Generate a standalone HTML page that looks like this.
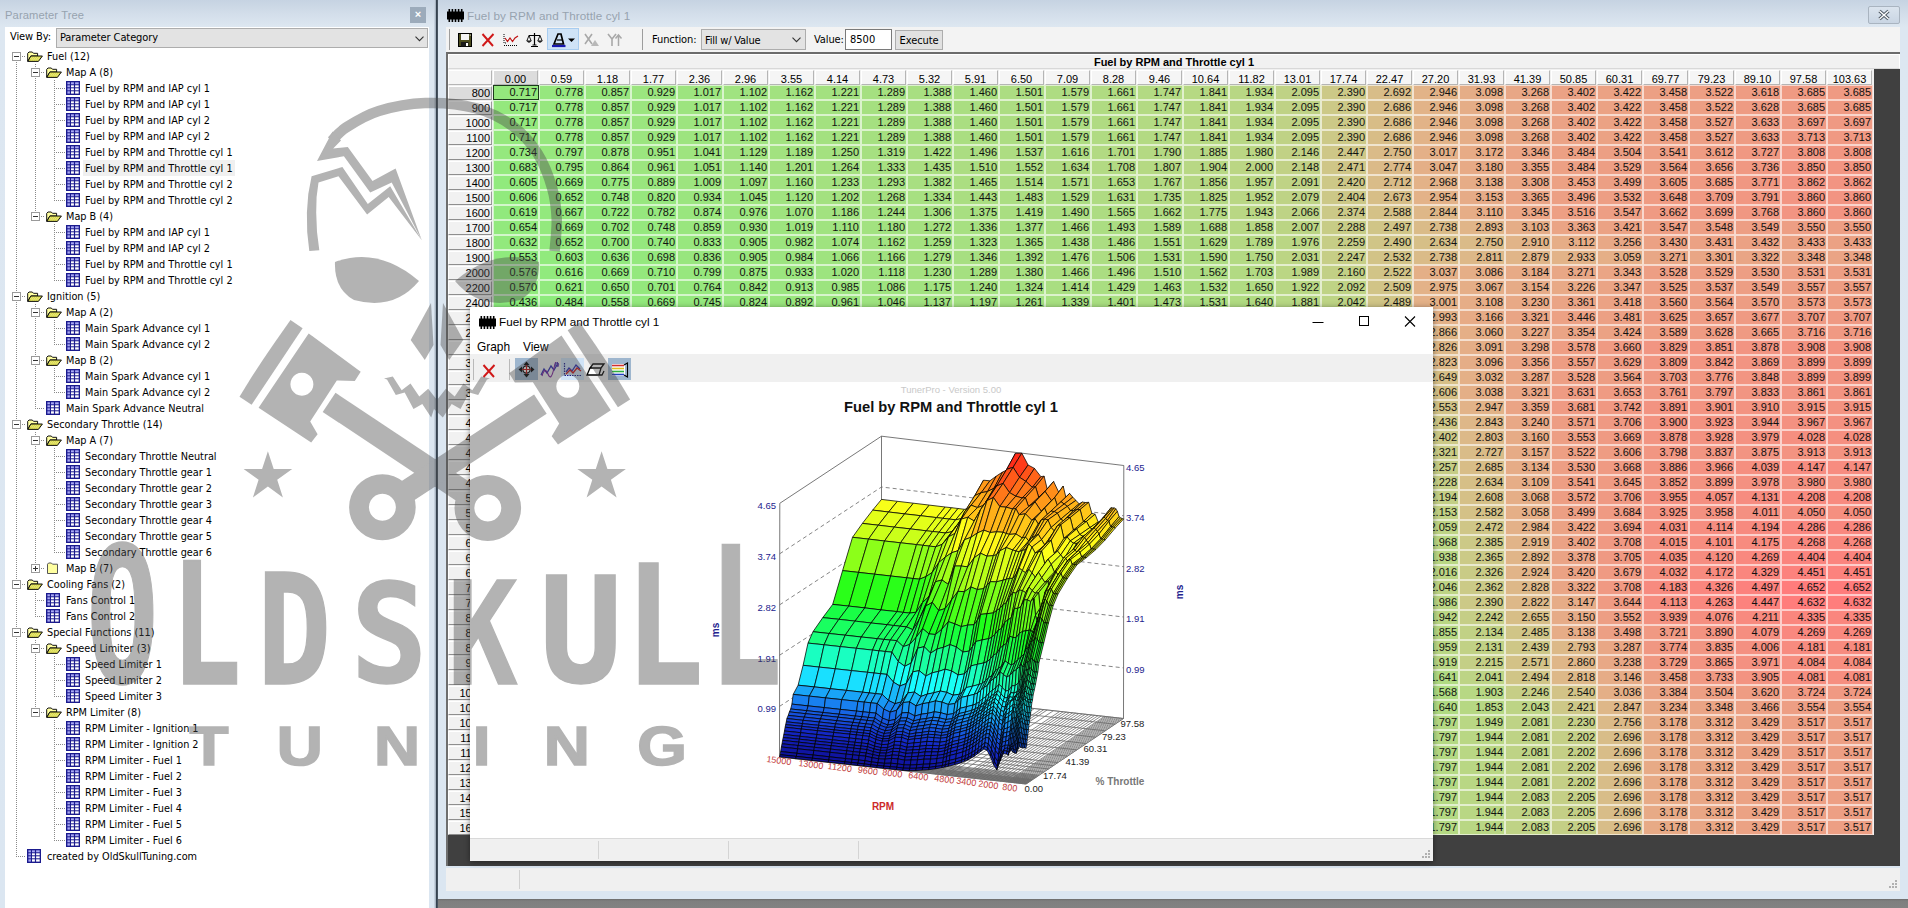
<!DOCTYPE html>
<html lang="en"><head><meta charset="utf-8"><title>TunerPro - Fuel by RPM and Throttle cyl 1</title>
<style>
*{box-sizing:border-box;margin:0;padding:0}
html,body{width:1908px;height:908px;overflow:hidden}
body{position:relative;background:#d9e4f0;font-family:"Liberation Sans",sans-serif;font-size:11px;color:#000}
i{font-style:normal;display:block;position:absolute}
b{font-weight:normal}
/* ---------- left panel ---------- */
#left{position:absolute;left:0;top:0;width:436px;height:908px;background:linear-gradient(#c6d3e2 0,#d3deea 14px,#dde7f1 27px,#dbe6f1 100%)}
#left .ttl{position:absolute;left:5px;top:9px;font:11.2px "Liberation Sans",sans-serif;color:#97a3af;letter-spacing:.1px}
#left .cls{position:absolute;left:410px;top:7px;width:16px;height:16px;background:#9cabbb;color:#fff;font:bold 11px/15px "Liberation Sans",sans-serif;text-align:center}
#lwhite{position:absolute;left:5px;top:27px;width:424px;height:881px;background:#fff}
#viewby{position:absolute;left:5px;top:0;font:11px "DejaVu Sans Condensed","Liberation Sans",sans-serif;line-height:20px;letter-spacing:-.1px}
#combo{position:absolute;left:51px;top:1px;width:372px;height:20px;background:#e3e3e3;border:1px solid #adadad;font:11px/18px "DejaVu Sans Condensed","Liberation Sans",sans-serif;padding-left:3px;letter-spacing:-.1px}
#combo svg{position:absolute;right:3px;top:7px}
#tree{position:absolute;left:-5px;top:-27px;width:434px;height:908px;font:10.8px "DejaVu Sans Condensed","Liberation Sans",sans-serif}
.tr{position:absolute;left:0;width:434px;height:16px}
.tx{position:absolute;top:0;height:16px;line-height:18px;padding:0 2px;white-space:nowrap;letter-spacing:0}
.tx.sel{background:#f0f0f0}
.ic{position:absolute;top:1px}
.vl{width:1px;background-image:linear-gradient(#8a8a8a 50%,transparent 50%);background-size:1px 2px}
.hl{top:8px;height:1px;background-image:linear-gradient(90deg,#8a8a8a 50%,transparent 50%);background-size:2px 1px}
.ex{top:4px;width:9px;height:9px;border:1px solid #9a9a9a;background:#fff}
.ex:before{content:"";position:absolute;left:1px;top:3px;width:5px;height:1px;background:#333}
.ex.plus:after{content:"";position:absolute;left:3px;top:1px;width:1px;height:5px;background:#333}
/* ---------- splitter ---------- */
#split{position:absolute;left:434px;top:0;width:4px;height:908px;background:linear-gradient(90deg,#d4dfeb 0,#a4b1bf 1.6px,#36424f 2.2px,#36424f 3.4px,#9aa6b3 4px)}
/* ---------- main window ---------- */
#main{position:absolute;left:438px;top:0;width:1470px;height:899px;background:linear-gradient(#c6d3e2 0,#d3deea 14px,#dde7f1 27px,#dbe6f1 100%)}
#main .ttl{position:absolute;left:29px;top:9px;font:11.7px "Liberation Sans",sans-serif;color:#97a3af;letter-spacing:.1px}
#mclose{position:absolute;left:1430px;top:6px;width:32px;height:18px;border:1px solid #a9b4c0;border-radius:2px;background:linear-gradient(#dbe4ee,#c9d5e3)}
#tbar{position:absolute;left:8px;top:27px;width:1454px;height:25px;background:#f3f3f3}
#tbar .lbl{position:absolute;top:1px;line-height:24px;font:11px/24px "DejaVu Sans Condensed","Liberation Sans",sans-serif;letter-spacing:-.1px}
#gridwrap{position:absolute;left:8px;top:52px;width:1454px;height:814px;background:#404040;border-top:2px solid #6b6b6b;border-left:2px solid #6e6e6e;overflow:hidden}
#grid{position:absolute;left:0;top:0;width:1426px;background:#f0f0f0}
#gtitle{height:15px;width:1452px;background:#f1f1f1;border:1px solid #fff;border-bottom:1px solid #d8d8d8;text-align:center;font:bold 11px/14px "Liberation Sans",sans-serif;padding-right:0}
.hrow{height:16px;white-space:nowrap;font-size:0;background:#f0f0f0}
.hrow span{display:inline-block;height:15px;margin:1px 1px 0 0;background:#f5f5f5;border:1px solid #fff;border-right-color:#b5b5b5;border-bottom-color:#b5b5b5;font:11px/15px "Liberation Sans",sans-serif;text-align:center;vertical-align:top;overflow:hidden}
.hrow .rh0{width:44px;margin-left:0}
.hrow .ch{width:45px;padding-top:1px}
.hrow .chs{background:#dcdcdc}
.drow{height:15px;white-space:nowrap;font-size:0}
.drow span{display:inline-block;width:44px;height:14px;margin:1px 1px 0 0;background:#f1f1f1;border:1px solid #fff;border-right-color:#9a9a9a;border-bottom-color:#8e8e8e;font:11px/13px "Liberation Sans",sans-serif;text-align:right;padding-right:1px;vertical-align:top}
.drow .rhs{background:#dcdcdc}
.drow b{display:inline-block;width:46px;height:15px;border:1px solid rgba(255,255,255,.6);font:11px/13px "Liberation Sans",sans-serif;text-align:right;padding-right:1px;vertical-align:top;color:#111}
.drow b.cur{border:1px solid #1c3c1c}
#status{position:absolute;left:8px;top:868px;width:1454px;height:23px;background:#f0f0f0}
#mdi{position:absolute;left:438px;top:899px;width:1470px;height:9px;background:linear-gradient(#6d6d6d 0,#7f7f7f 2px,#828282 100%)}
/* ---------- graph window ---------- */
#gw{position:absolute;left:470px;top:307px;width:963px;height:554px;background:#fff;box-shadow:0 1px 6px rgba(0,0,0,.45)}
#gw .cap{position:absolute;left:29px;top:8px;font:11.7px "Liberation Sans",sans-serif;color:#000}
#gw .menu{position:absolute;top:33px;font:11.9px "Liberation Sans",sans-serif}
#gtb{position:absolute;left:0;top:47px;width:963px;height:28px;background:#f0f0f0}
#gstat{position:absolute;left:0;top:531px;width:963px;height:23px;background:#f0f0f0;border-top:1px solid #d9d9d9}

</style></head>
<body>
<svg width="0" height="0" style="position:absolute">
<defs>
<g id="grid"><rect x="0" y="0" width="14" height="14" fill="#1b1b8e"/>
<g fill="#a9a9f6"><rect x="1.4" y="1.3" width="2.5" height="2"/><rect x="5" y="1.3" width="2.9" height="2"/><rect x="9.1" y="1.3" width="3.6" height="2"/><rect x="1.4" y="4.3" width="2.5" height="2"/><rect x="1.4" y="7.3" width="2.5" height="2"/><rect x="1.4" y="10.3" width="2.5" height="2.3"/></g>
<g fill="#fff"><rect x="5" y="4.3" width="2.9" height="2"/><rect x="9.1" y="4.3" width="3.6" height="2"/><rect x="5" y="7.3" width="2.9" height="2"/><rect x="9.1" y="7.3" width="3.6" height="2"/><rect x="5" y="10.3" width="2.9" height="2.3"/><rect x="9.1" y="10.3" width="3.6" height="2.3"/></g></g>
<g id="fopen"><path d="M0.7 12.3V4.3L2 3H5.3L6.5 4.3H10.6V7H3.8L0.7 12.3Z" fill="#ffffa0" stroke="#111" stroke-width="1"/><path d="M3.9 7H15.4L11.4 12.4H0.8Z" fill="#d6d648" stroke="#111" stroke-width="1"/><path d="M4.6 8.2L3.4 10M6.6 8.2L4.4 11.4M8.6 8.2L6.4 11.4M10.6 8.2L8.4 11.4M12.6 8.2L10.4 11.4" stroke="#f4f49a" stroke-width=".7"/></g>
<g id="fclosed"><path d="M1.5 12.5V3.2L2.6 2H5.4L6.5 3.2H11.5V12.5Z" fill="#ffffa0" stroke="#555" stroke-width="1"/></g>
</defs></svg>
<div id="left">
<div class="ttl">Parameter Tree</div>
<div class="cls">×</div>
<div id="lwhite">
<div id="viewby">View By:</div>
<div id="combo">Parameter Category<svg width="9" height="6" viewBox="0 0 9 6"><path d="M0.5 0.7L4.5 4.7L8.5 0.7" fill="none" stroke="#333" stroke-width="1.1"/></svg></div>
<div id="tree">
<i class="vl" style="left:16px;top:60px;height:796px"></i>
<i class="vl" style="left:35px;top:64px;height:152px"></i>
<i class="vl" style="left:54px;top:80px;height:120px"></i>
<i class="vl" style="left:54px;top:224px;height:56px"></i>
<i class="vl" style="left:35px;top:304px;height:104px"></i>
<i class="vl" style="left:54px;top:320px;height:24px"></i>
<i class="vl" style="left:54px;top:368px;height:24px"></i>
<i class="vl" style="left:35px;top:432px;height:136px"></i>
<i class="vl" style="left:54px;top:448px;height:104px"></i>
<i class="vl" style="left:35px;top:592px;height:24px"></i>
<i class="vl" style="left:35px;top:640px;height:72px"></i>
<i class="vl" style="left:54px;top:656px;height:40px"></i>
<i class="vl" style="left:54px;top:720px;height:120px"></i>
<div class="tr" style="top:48px"><i class="hl" style="left:16px;width:10px"></i><i class="ex minus" style="left:12px"></i><svg class="ic" style="left:27px" width="17" height="16" viewBox="0 0 17 16"><use href="#fopen"/></svg><span class="tx" style="left:45px">Fuel (12)</span></div>
<div class="tr" style="top:64px"><i class="hl" style="left:35px;width:10px"></i><i class="ex minus" style="left:31px"></i><svg class="ic" style="left:46px" width="17" height="16" viewBox="0 0 17 16"><use href="#fopen"/></svg><span class="tx" style="left:64px">Map A (8)</span></div>
<div class="tr" style="top:80px"><i class="hl" style="left:54px;width:11px"></i><svg class="ic" style="left:66px" width="15" height="16" viewBox="0 0 15 16"><use href="#grid"/></svg><span class="tx" style="left:83px">Fuel by RPM and IAP cyl 1</span></div>
<div class="tr" style="top:96px"><i class="hl" style="left:54px;width:11px"></i><svg class="ic" style="left:66px" width="15" height="16" viewBox="0 0 15 16"><use href="#grid"/></svg><span class="tx" style="left:83px">Fuel by RPM and IAP cyl 1</span></div>
<div class="tr" style="top:112px"><i class="hl" style="left:54px;width:11px"></i><svg class="ic" style="left:66px" width="15" height="16" viewBox="0 0 15 16"><use href="#grid"/></svg><span class="tx" style="left:83px">Fuel by RPM and IAP cyl 2</span></div>
<div class="tr" style="top:128px"><i class="hl" style="left:54px;width:11px"></i><svg class="ic" style="left:66px" width="15" height="16" viewBox="0 0 15 16"><use href="#grid"/></svg><span class="tx" style="left:83px">Fuel by RPM and IAP cyl 2</span></div>
<div class="tr" style="top:144px"><i class="hl" style="left:54px;width:11px"></i><svg class="ic" style="left:66px" width="15" height="16" viewBox="0 0 15 16"><use href="#grid"/></svg><span class="tx" style="left:83px">Fuel by RPM and Throttle cyl 1</span></div>
<div class="tr" style="top:160px"><i class="hl" style="left:54px;width:11px"></i><svg class="ic" style="left:66px" width="15" height="16" viewBox="0 0 15 16"><use href="#grid"/></svg><span class="tx sel" style="left:83px">Fuel by RPM and Throttle cyl 1</span></div>
<div class="tr" style="top:176px"><i class="hl" style="left:54px;width:11px"></i><svg class="ic" style="left:66px" width="15" height="16" viewBox="0 0 15 16"><use href="#grid"/></svg><span class="tx" style="left:83px">Fuel by RPM and Throttle cyl 2</span></div>
<div class="tr" style="top:192px"><i class="hl" style="left:54px;width:11px"></i><svg class="ic" style="left:66px" width="15" height="16" viewBox="0 0 15 16"><use href="#grid"/></svg><span class="tx" style="left:83px">Fuel by RPM and Throttle cyl 2</span></div>
<div class="tr" style="top:208px"><i class="hl" style="left:35px;width:10px"></i><i class="ex minus" style="left:31px"></i><svg class="ic" style="left:46px" width="17" height="16" viewBox="0 0 17 16"><use href="#fopen"/></svg><span class="tx" style="left:64px">Map B (4)</span></div>
<div class="tr" style="top:224px"><i class="hl" style="left:54px;width:11px"></i><svg class="ic" style="left:66px" width="15" height="16" viewBox="0 0 15 16"><use href="#grid"/></svg><span class="tx" style="left:83px">Fuel by RPM and IAP cyl 1</span></div>
<div class="tr" style="top:240px"><i class="hl" style="left:54px;width:11px"></i><svg class="ic" style="left:66px" width="15" height="16" viewBox="0 0 15 16"><use href="#grid"/></svg><span class="tx" style="left:83px">Fuel by RPM and IAP cyl 2</span></div>
<div class="tr" style="top:256px"><i class="hl" style="left:54px;width:11px"></i><svg class="ic" style="left:66px" width="15" height="16" viewBox="0 0 15 16"><use href="#grid"/></svg><span class="tx" style="left:83px">Fuel by RPM and Throttle cyl 1</span></div>
<div class="tr" style="top:272px"><i class="hl" style="left:54px;width:11px"></i><svg class="ic" style="left:66px" width="15" height="16" viewBox="0 0 15 16"><use href="#grid"/></svg><span class="tx" style="left:83px">Fuel by RPM and Throttle cyl 2</span></div>
<div class="tr" style="top:288px"><i class="hl" style="left:16px;width:10px"></i><i class="ex minus" style="left:12px"></i><svg class="ic" style="left:27px" width="17" height="16" viewBox="0 0 17 16"><use href="#fopen"/></svg><span class="tx" style="left:45px">Ignition (5)</span></div>
<div class="tr" style="top:304px"><i class="hl" style="left:35px;width:10px"></i><i class="ex minus" style="left:31px"></i><svg class="ic" style="left:46px" width="17" height="16" viewBox="0 0 17 16"><use href="#fopen"/></svg><span class="tx" style="left:64px">Map A (2)</span></div>
<div class="tr" style="top:320px"><i class="hl" style="left:54px;width:11px"></i><svg class="ic" style="left:66px" width="15" height="16" viewBox="0 0 15 16"><use href="#grid"/></svg><span class="tx" style="left:83px">Main Spark Advance cyl 1</span></div>
<div class="tr" style="top:336px"><i class="hl" style="left:54px;width:11px"></i><svg class="ic" style="left:66px" width="15" height="16" viewBox="0 0 15 16"><use href="#grid"/></svg><span class="tx" style="left:83px">Main Spark Advance cyl 2</span></div>
<div class="tr" style="top:352px"><i class="hl" style="left:35px;width:10px"></i><i class="ex minus" style="left:31px"></i><svg class="ic" style="left:46px" width="17" height="16" viewBox="0 0 17 16"><use href="#fopen"/></svg><span class="tx" style="left:64px">Map B (2)</span></div>
<div class="tr" style="top:368px"><i class="hl" style="left:54px;width:11px"></i><svg class="ic" style="left:66px" width="15" height="16" viewBox="0 0 15 16"><use href="#grid"/></svg><span class="tx" style="left:83px">Main Spark Advance cyl 1</span></div>
<div class="tr" style="top:384px"><i class="hl" style="left:54px;width:11px"></i><svg class="ic" style="left:66px" width="15" height="16" viewBox="0 0 15 16"><use href="#grid"/></svg><span class="tx" style="left:83px">Main Spark Advance cyl 2</span></div>
<div class="tr" style="top:400px"><i class="hl" style="left:35px;width:10px"></i><svg class="ic" style="left:46px" width="15" height="16" viewBox="0 0 15 16"><use href="#grid"/></svg><span class="tx" style="left:64px">Main Spark Advance Neutral</span></div>
<div class="tr" style="top:416px"><i class="hl" style="left:16px;width:10px"></i><i class="ex minus" style="left:12px"></i><svg class="ic" style="left:27px" width="17" height="16" viewBox="0 0 17 16"><use href="#fopen"/></svg><span class="tx" style="left:45px">Secondary Throttle (14)</span></div>
<div class="tr" style="top:432px"><i class="hl" style="left:35px;width:10px"></i><i class="ex minus" style="left:31px"></i><svg class="ic" style="left:46px" width="17" height="16" viewBox="0 0 17 16"><use href="#fopen"/></svg><span class="tx" style="left:64px">Map A (7)</span></div>
<div class="tr" style="top:448px"><i class="hl" style="left:54px;width:11px"></i><svg class="ic" style="left:66px" width="15" height="16" viewBox="0 0 15 16"><use href="#grid"/></svg><span class="tx" style="left:83px">Secondary Throttle Neutral</span></div>
<div class="tr" style="top:464px"><i class="hl" style="left:54px;width:11px"></i><svg class="ic" style="left:66px" width="15" height="16" viewBox="0 0 15 16"><use href="#grid"/></svg><span class="tx" style="left:83px">Secondary Throttle gear 1</span></div>
<div class="tr" style="top:480px"><i class="hl" style="left:54px;width:11px"></i><svg class="ic" style="left:66px" width="15" height="16" viewBox="0 0 15 16"><use href="#grid"/></svg><span class="tx" style="left:83px">Secondary Throttle gear 2</span></div>
<div class="tr" style="top:496px"><i class="hl" style="left:54px;width:11px"></i><svg class="ic" style="left:66px" width="15" height="16" viewBox="0 0 15 16"><use href="#grid"/></svg><span class="tx" style="left:83px">Secondary Throttle gear 3</span></div>
<div class="tr" style="top:512px"><i class="hl" style="left:54px;width:11px"></i><svg class="ic" style="left:66px" width="15" height="16" viewBox="0 0 15 16"><use href="#grid"/></svg><span class="tx" style="left:83px">Secondary Throttle gear 4</span></div>
<div class="tr" style="top:528px"><i class="hl" style="left:54px;width:11px"></i><svg class="ic" style="left:66px" width="15" height="16" viewBox="0 0 15 16"><use href="#grid"/></svg><span class="tx" style="left:83px">Secondary Throttle gear 5</span></div>
<div class="tr" style="top:544px"><i class="hl" style="left:54px;width:11px"></i><svg class="ic" style="left:66px" width="15" height="16" viewBox="0 0 15 16"><use href="#grid"/></svg><span class="tx" style="left:83px">Secondary Throttle gear 6</span></div>
<div class="tr" style="top:560px"><i class="hl" style="left:35px;width:10px"></i><i class="ex plus" style="left:31px"></i><svg class="ic" style="left:46px" width="16" height="16" viewBox="0 0 16 16"><use href="#fclosed"/></svg><span class="tx" style="left:64px">Map B (7)</span></div>
<div class="tr" style="top:576px"><i class="hl" style="left:16px;width:10px"></i><i class="ex minus" style="left:12px"></i><svg class="ic" style="left:27px" width="17" height="16" viewBox="0 0 17 16"><use href="#fopen"/></svg><span class="tx" style="left:45px">Cooling Fans (2)</span></div>
<div class="tr" style="top:592px"><i class="hl" style="left:35px;width:10px"></i><svg class="ic" style="left:46px" width="15" height="16" viewBox="0 0 15 16"><use href="#grid"/></svg><span class="tx" style="left:64px">Fans Control 1</span></div>
<div class="tr" style="top:608px"><i class="hl" style="left:35px;width:10px"></i><svg class="ic" style="left:46px" width="15" height="16" viewBox="0 0 15 16"><use href="#grid"/></svg><span class="tx" style="left:64px">Fans Control 2</span></div>
<div class="tr" style="top:624px"><i class="hl" style="left:16px;width:10px"></i><i class="ex minus" style="left:12px"></i><svg class="ic" style="left:27px" width="17" height="16" viewBox="0 0 17 16"><use href="#fopen"/></svg><span class="tx" style="left:45px">Special Functions (11)</span></div>
<div class="tr" style="top:640px"><i class="hl" style="left:35px;width:10px"></i><i class="ex minus" style="left:31px"></i><svg class="ic" style="left:46px" width="17" height="16" viewBox="0 0 17 16"><use href="#fopen"/></svg><span class="tx" style="left:64px">Speed Limiter (3)</span></div>
<div class="tr" style="top:656px"><i class="hl" style="left:54px;width:11px"></i><svg class="ic" style="left:66px" width="15" height="16" viewBox="0 0 15 16"><use href="#grid"/></svg><span class="tx" style="left:83px">Speed Limiter 1</span></div>
<div class="tr" style="top:672px"><i class="hl" style="left:54px;width:11px"></i><svg class="ic" style="left:66px" width="15" height="16" viewBox="0 0 15 16"><use href="#grid"/></svg><span class="tx" style="left:83px">Speed Limiter 2</span></div>
<div class="tr" style="top:688px"><i class="hl" style="left:54px;width:11px"></i><svg class="ic" style="left:66px" width="15" height="16" viewBox="0 0 15 16"><use href="#grid"/></svg><span class="tx" style="left:83px">Speed Limiter 3</span></div>
<div class="tr" style="top:704px"><i class="hl" style="left:35px;width:10px"></i><i class="ex minus" style="left:31px"></i><svg class="ic" style="left:46px" width="17" height="16" viewBox="0 0 17 16"><use href="#fopen"/></svg><span class="tx" style="left:64px">RPM Limiter (8)</span></div>
<div class="tr" style="top:720px"><i class="hl" style="left:54px;width:11px"></i><svg class="ic" style="left:66px" width="15" height="16" viewBox="0 0 15 16"><use href="#grid"/></svg><span class="tx" style="left:83px">RPM Limiter - Ignition 1</span></div>
<div class="tr" style="top:736px"><i class="hl" style="left:54px;width:11px"></i><svg class="ic" style="left:66px" width="15" height="16" viewBox="0 0 15 16"><use href="#grid"/></svg><span class="tx" style="left:83px">RPM Limiter - Ignition 2</span></div>
<div class="tr" style="top:752px"><i class="hl" style="left:54px;width:11px"></i><svg class="ic" style="left:66px" width="15" height="16" viewBox="0 0 15 16"><use href="#grid"/></svg><span class="tx" style="left:83px">RPM Limiter - Fuel 1</span></div>
<div class="tr" style="top:768px"><i class="hl" style="left:54px;width:11px"></i><svg class="ic" style="left:66px" width="15" height="16" viewBox="0 0 15 16"><use href="#grid"/></svg><span class="tx" style="left:83px">RPM Limiter - Fuel 2</span></div>
<div class="tr" style="top:784px"><i class="hl" style="left:54px;width:11px"></i><svg class="ic" style="left:66px" width="15" height="16" viewBox="0 0 15 16"><use href="#grid"/></svg><span class="tx" style="left:83px">RPM Limiter - Fuel 3</span></div>
<div class="tr" style="top:800px"><i class="hl" style="left:54px;width:11px"></i><svg class="ic" style="left:66px" width="15" height="16" viewBox="0 0 15 16"><use href="#grid"/></svg><span class="tx" style="left:83px">RPM Limiter - Fuel 4</span></div>
<div class="tr" style="top:816px"><i class="hl" style="left:54px;width:11px"></i><svg class="ic" style="left:66px" width="15" height="16" viewBox="0 0 15 16"><use href="#grid"/></svg><span class="tx" style="left:83px">RPM Limiter - Fuel 5</span></div>
<div class="tr" style="top:832px"><i class="hl" style="left:54px;width:11px"></i><svg class="ic" style="left:66px" width="15" height="16" viewBox="0 0 15 16"><use href="#grid"/></svg><span class="tx" style="left:83px">RPM Limiter - Fuel 6</span></div>
<div class="tr" style="top:848px"><i class="hl" style="left:16px;width:10px"></i><svg class="ic" style="left:27px" width="15" height="16" viewBox="0 0 15 16"><use href="#grid"/></svg><span class="tx" style="left:45px">created by OldSkullTuning.com</span></div>
</div>
</div>
<div id="split"></div>
<div id="main">
<svg style="position:absolute;left:9px;top:9px" width="17" height="13" viewBox="0 0 17 13"><rect x="0" y="2.5" width="17" height="8" fill="#000"/><g fill="#000"><rect x="1.5" y="0" width="1.6" height="13"/><rect x="4.6" y="0" width="1.6" height="13"/><rect x="7.7" y="0" width="1.6" height="13"/><rect x="10.8" y="0" width="1.6" height="13"/><rect x="13.9" y="0" width="1.6" height="13"/></g></svg>
<div class="ttl">Fuel by RPM and Throttle cyl 1</div>
<div id="mclose"><svg width="30" height="16" viewBox="0 0 30 16"><path d="M10.5 4L19.5 12M19.5 4L10.5 12" stroke="#4a5560" stroke-width="3.2"/><path d="M10.5 4L19.5 12M19.5 4L10.5 12" stroke="#fff" stroke-width="1.4"/></svg></div>
<div id="tbar">
<i style="left:3px;top:2px;width:1px;height:21px;background:#9d9d9d"></i>
<!-- save -->
<svg style="position:absolute;left:12px;top:6px" width="14" height="14" viewBox="0 0 14 14"><rect x="0.5" y="0.5" width="13" height="13" fill="#4c4c1e" stroke="#000"/><rect x="3" y="1" width="8" height="6" fill="#f4f4f4"/><rect x="3" y="9" width="7.5" height="4.5" fill="#1a1a1a"/><rect x="8" y="10" width="2" height="3" fill="#fff"/><rect x="11.7" y="1.6" width="1" height="1" fill="#fff"/></svg>
<!-- red X -->
<svg style="position:absolute;left:35px;top:6px" width="14" height="14" viewBox="0 0 14 14"><path d="M1.5 1L12 13M12.5 1L1.5 13" stroke="#d01818" stroke-width="1.9" fill="none"/></svg>
<!-- curve -->
<svg style="position:absolute;left:57px;top:6px" width="16" height="14" viewBox="0 0 16 14"><path d="M1 1V10H3M1 12.5H15" stroke="#000" stroke-width="1" fill="none" stroke-dasharray="1 1"/><path d="M2 5L4.5 8.5L7 5L9.5 8.5L12 5L15 3" stroke="#c01010" stroke-width="1.2" fill="none"/></svg>
<!-- scales -->
<svg style="position:absolute;left:80px;top:5px" width="17" height="16" viewBox="0 0 17 16"><path d="M8.5 1V13M3 3.5H14M5 14.5H12M6.5 13H10.5" stroke="#000" stroke-width="1.2" fill="none"/><path d="M3 3.5L0.8 9H5.2Z M14 3.5L11.8 9H16.2Z" stroke="#000" stroke-width=".9" fill="none"/><path d="M0.8 9.3Q3 12 5.2 9.3Z M11.8 9.3Q14 12 16.2 9.3Z" fill="#000"/></svg>
<!-- selected dropdown button -->
<i style="left:101px;top:1px;width:32px;height:22px;background:#cfe3f7;border:1px solid #a9cdf0"></i>
<svg style="position:absolute;left:105px;top:5px" width="26" height="16" viewBox="0 0 26 16"><path d="M3 12L7 2H10L12.5 12Z" fill="none" stroke="#000" stroke-width="1.7"/><path d="M1 14H14.5" stroke="#1818b0" stroke-width="2.2"/><path d="M6 8H11" stroke="#000" stroke-width="1.2"/><path d="M17 6.5H24L20.5 10Z" fill="#000"/></svg>
<!-- greyed icons -->
<svg style="position:absolute;left:137px;top:5px" width="18" height="16" viewBox="0 0 18 16"><path d="M2 2L9 12M9 2L2 12" stroke="#a8a8a8" stroke-width="1.6" fill="none"/><path d="M8 14H16L12 8Z" fill="#b8b8b8"/></svg>
<svg style="position:absolute;left:161px;top:5px" width="16" height="16" viewBox="0 0 16 16"><path d="M1 2L5 7V14M9 2L5 7" stroke="#a8a8a8" stroke-width="1.6" fill="none"/><path d="M11.5 14V3M8.5 6.5L11.5 3L14.5 6.5" stroke="#a8a8a8" stroke-width="1.5" fill="none"/></svg>
<i style="left:196px;top:2px;width:1px;height:21px;background:#9d9d9d"></i>
<span class="lbl" style="left:206px">Function:</span>
<div style="position:absolute;left:255px;top:2px;width:105px;height:21px;background:#e3e3e3;border:1px solid #adadad;font:11px/21px 'DejaVu Sans Condensed','Liberation Sans',sans-serif;padding-left:3px;letter-spacing:-.2px">Fill w/ Value<svg style="position:absolute;right:4px;top:7px" width="9" height="6" viewBox="0 0 9 6"><path d="M0.5 0.7L4.5 4.7L8.5 0.7" fill="none" stroke="#333" stroke-width="1.1"/></svg></div>
<span class="lbl" style="left:368px">Value:</span>
<div style="position:absolute;left:399px;top:2px;width:47px;height:21px;background:#fff;border:1px solid #7a7a7a;font:11px/19px 'DejaVu Sans Condensed','Liberation Sans',sans-serif;padding-left:4px">8500</div>
<div style="position:absolute;left:449px;top:3px;width:48px;height:20px;background:#e1e1e1;border:1px solid #adadad;font:11px/20px 'DejaVu Sans Condensed','Liberation Sans',sans-serif;text-align:center;letter-spacing:-.1px">Execute</div>
</div>
<div id="gridwrap">
<div id="grid">
<div id="gtitle">Fuel by RPM and Throttle cyl 1</div>
<div class="hrow"><span class="rh0"></span><span class="ch chs">0.00</span><span class="ch">0.59</span><span class="ch">1.18</span><span class="ch">1.77</span><span class="ch">2.36</span><span class="ch">2.96</span><span class="ch">3.55</span><span class="ch">4.14</span><span class="ch">4.73</span><span class="ch">5.32</span><span class="ch">5.91</span><span class="ch">6.50</span><span class="ch">7.09</span><span class="ch">8.28</span><span class="ch">9.46</span><span class="ch">10.64</span><span class="ch">11.82</span><span class="ch">13.01</span><span class="ch">17.74</span><span class="ch">22.47</span><span class="ch">27.20</span><span class="ch">31.93</span><span class="ch">41.39</span><span class="ch">50.85</span><span class="ch">60.31</span><span class="ch">69.77</span><span class="ch">79.23</span><span class="ch">89.10</span><span class="ch">97.58</span><span class="ch">103.63</span></div>
<div class="drow"><span class="rh rhs">800</span><b class="cur" style="background:#94e87d">0.717</b><b style="background:#96e77e">0.778</b><b style="background:#98e67e">0.857</b><b style="background:#9be57f">0.929</b><b style="background:#9de47f">1.017</b><b style="background:#a0e380">1.102</b><b style="background:#a2e280">1.162</b><b style="background:#a3e180">1.221</b><b style="background:#a5e080">1.289</b><b style="background:#a8df81">1.388</b><b style="background:#aade81">1.460</b><b style="background:#acdd82">1.501</b><b style="background:#aedc82">1.579</b><b style="background:#b0db82">1.661</b><b style="background:#b3da83">1.747</b><b style="background:#b6d983">1.841</b><b style="background:#b8d784">1.934</b><b style="background:#bfd285">2.095</b><b style="background:#ccc987">2.390</b><b style="background:#d8bd88">2.692</b><b style="background:#e2b388">2.946</b><b style="background:#e5ad87">3.098</b><b style="background:#e8a786">3.268</b><b style="background:#eba285">3.402</b><b style="background:#eba284">3.422</b><b style="background:#eca084">3.458</b><b style="background:#ed9f84">3.522</b><b style="background:#ee9c83">3.618</b><b style="background:#ef9a83">3.685</b><b style="background:#ef9a83">3.685</b></div>
<div class="drow"><span class="rh">900</span><b style="background:#94e87d">0.717</b><b style="background:#96e77e">0.778</b><b style="background:#98e67e">0.857</b><b style="background:#9be57f">0.929</b><b style="background:#9de47f">1.017</b><b style="background:#a0e380">1.102</b><b style="background:#a2e280">1.162</b><b style="background:#a3e180">1.221</b><b style="background:#a5e080">1.289</b><b style="background:#a8df81">1.388</b><b style="background:#aade81">1.460</b><b style="background:#acdd82">1.501</b><b style="background:#aedc82">1.579</b><b style="background:#b0db82">1.661</b><b style="background:#b3da83">1.747</b><b style="background:#b6d983">1.841</b><b style="background:#b8d784">1.934</b><b style="background:#bfd285">2.095</b><b style="background:#ccc987">2.390</b><b style="background:#d8bd87">2.686</b><b style="background:#e2b388">2.946</b><b style="background:#e5ad87">3.098</b><b style="background:#e8a786">3.268</b><b style="background:#eba285">3.402</b><b style="background:#eba284">3.422</b><b style="background:#eca084">3.458</b><b style="background:#ed9f84">3.522</b><b style="background:#ee9b83">3.628</b><b style="background:#ef9a83">3.685</b><b style="background:#ef9a83">3.685</b></div>
<div class="drow"><span class="rh">1000</span><b style="background:#94e87d">0.717</b><b style="background:#96e77e">0.778</b><b style="background:#98e67e">0.857</b><b style="background:#9be57f">0.929</b><b style="background:#9de47f">1.017</b><b style="background:#a0e380">1.102</b><b style="background:#a2e280">1.162</b><b style="background:#a3e180">1.221</b><b style="background:#a5e080">1.289</b><b style="background:#a8df81">1.388</b><b style="background:#aade81">1.460</b><b style="background:#acdd82">1.501</b><b style="background:#aedc82">1.579</b><b style="background:#b0db82">1.661</b><b style="background:#b3da83">1.747</b><b style="background:#b6d983">1.841</b><b style="background:#b8d784">1.934</b><b style="background:#bfd285">2.095</b><b style="background:#ccc987">2.390</b><b style="background:#d8bd87">2.686</b><b style="background:#e2b388">2.946</b><b style="background:#e5ad87">3.098</b><b style="background:#e8a786">3.268</b><b style="background:#eba285">3.402</b><b style="background:#eba284">3.422</b><b style="background:#eca084">3.458</b><b style="background:#ed9e84">3.527</b><b style="background:#ee9b83">3.633</b><b style="background:#ef9983">3.697</b><b style="background:#ef9983">3.697</b></div>
<div class="drow"><span class="rh">1100</span><b style="background:#94e87d">0.717</b><b style="background:#96e77e">0.778</b><b style="background:#98e67e">0.857</b><b style="background:#9be57f">0.929</b><b style="background:#9de47f">1.017</b><b style="background:#a0e380">1.102</b><b style="background:#a2e280">1.162</b><b style="background:#a3e180">1.221</b><b style="background:#a5e080">1.289</b><b style="background:#a8df81">1.388</b><b style="background:#aade81">1.460</b><b style="background:#acdd82">1.501</b><b style="background:#aedc82">1.579</b><b style="background:#b0db82">1.661</b><b style="background:#b3da83">1.747</b><b style="background:#b6d983">1.841</b><b style="background:#b8d784">1.934</b><b style="background:#bfd285">2.095</b><b style="background:#ccc987">2.390</b><b style="background:#d8bd87">2.686</b><b style="background:#e2b388">2.946</b><b style="background:#e5ad87">3.098</b><b style="background:#e8a786">3.268</b><b style="background:#eba285">3.402</b><b style="background:#eba284">3.422</b><b style="background:#eca084">3.458</b><b style="background:#ed9e84">3.527</b><b style="background:#ee9b83">3.633</b><b style="background:#f09983">3.713</b><b style="background:#f09983">3.713</b></div>
<div class="drow"><span class="rh">1200</span><b style="background:#95e87e">0.734</b><b style="background:#97e77e">0.797</b><b style="background:#99e67e">0.878</b><b style="background:#9be57f">0.951</b><b style="background:#9ee47f">1.041</b><b style="background:#a1e280">1.129</b><b style="background:#a2e280">1.189</b><b style="background:#a4e180">1.250</b><b style="background:#a6e081">1.319</b><b style="background:#a9de81">1.422</b><b style="background:#abdd82">1.496</b><b style="background:#addd82">1.537</b><b style="background:#afdc82">1.616</b><b style="background:#b2da83">1.701</b><b style="background:#b4d983">1.790</b><b style="background:#b7d884">1.885</b><b style="background:#bad684">1.980</b><b style="background:#c1d185">2.146</b><b style="background:#cec787">2.447</b><b style="background:#dabb88">2.750</b><b style="background:#e4b088">3.017</b><b style="background:#e7ab86">3.172</b><b style="background:#eaa485">3.346</b><b style="background:#eca084">3.484</b><b style="background:#ec9f84">3.504</b><b style="background:#ed9e84">3.541</b><b style="background:#ee9c83">3.612</b><b style="background:#f09882">3.727</b><b style="background:#f19682">3.808</b><b style="background:#f19682">3.808</b></div>
<div class="drow"><span class="rh">1300</span><b style="background:#93e97d">0.683</b><b style="background:#97e77e">0.795</b><b style="background:#99e67e">0.864</b><b style="background:#9ce57f">0.961</b><b style="background:#9ee37f">1.051</b><b style="background:#a1e280">1.140</b><b style="background:#a3e180">1.201</b><b style="background:#a5e180">1.264</b><b style="background:#a7e081">1.333</b><b style="background:#aade81">1.435</b><b style="background:#acdd82">1.510</b><b style="background:#addd82">1.552</b><b style="background:#b0db82">1.634</b><b style="background:#b2da83">1.708</b><b style="background:#b5d983">1.807</b><b style="background:#b8d884">1.904</b><b style="background:#bbd684">2.000</b><b style="background:#c1d185">2.148</b><b style="background:#cfc687">2.471</b><b style="background:#dbba88">2.774</b><b style="background:#e4af87">3.047</b><b style="background:#e7aa86">3.180</b><b style="background:#eaa485">3.355</b><b style="background:#eca084">3.484</b><b style="background:#ed9e84">3.529</b><b style="background:#ed9d83">3.564</b><b style="background:#ef9b83">3.656</b><b style="background:#f09882">3.736</b><b style="background:#f29582">3.850</b><b style="background:#f29582">3.850</b></div>
<div class="drow"><span class="rh">1400</span><b style="background:#91ea7d">0.605</b><b style="background:#93e97d">0.669</b><b style="background:#96e77e">0.775</b><b style="background:#99e67e">0.889</b><b style="background:#9de47f">1.009</b><b style="background:#a0e37f">1.097</b><b style="background:#a1e280">1.160</b><b style="background:#a4e180">1.233</b><b style="background:#a5e081">1.293</b><b style="background:#a8df81">1.382</b><b style="background:#abde81">1.465</b><b style="background:#acdd82">1.514</b><b style="background:#aedc82">1.571</b><b style="background:#b0db82">1.653</b><b style="background:#b3da83">1.767</b><b style="background:#b6d883">1.856</b><b style="background:#b9d784">1.957</b><b style="background:#bfd385">2.091</b><b style="background:#cdc887">2.420</b><b style="background:#d9bc88">2.712</b><b style="background:#e3b288">2.968</b><b style="background:#e6ac87">3.138</b><b style="background:#e9a685">3.308</b><b style="background:#eca184">3.453</b><b style="background:#ec9f84">3.499</b><b style="background:#ee9c83">3.605</b><b style="background:#ef9a83">3.685</b><b style="background:#f09782">3.771</b><b style="background:#f29482">3.862</b><b style="background:#f29482">3.862</b></div>
<div class="drow"><span class="rh">1500</span><b style="background:#91ea7d">0.606</b><b style="background:#92e97d">0.652</b><b style="background:#95e87e">0.748</b><b style="background:#97e77e">0.820</b><b style="background:#9be57f">0.934</b><b style="background:#9ee47f">1.045</b><b style="background:#a0e380">1.120</b><b style="background:#a3e180">1.202</b><b style="background:#a5e080">1.268</b><b style="background:#a7e081">1.334</b><b style="background:#aade81">1.443</b><b style="background:#abde82">1.483</b><b style="background:#acdd82">1.529</b><b style="background:#afdb82">1.631</b><b style="background:#b3da83">1.735</b><b style="background:#b5d983">1.825</b><b style="background:#b9d784">1.952</b><b style="background:#bed385">2.079</b><b style="background:#ccc887">2.404</b><b style="background:#d7be87">2.673</b><b style="background:#e3b288">2.954</b><b style="background:#e6ab87">3.153</b><b style="background:#eaa485">3.365</b><b style="background:#ec9f84">3.496</b><b style="background:#ed9e84">3.532</b><b style="background:#ef9b83">3.648</b><b style="background:#f09983">3.709</b><b style="background:#f19782">3.791</b><b style="background:#f29482">3.860</b><b style="background:#f29482">3.860</b></div>
<div class="drow"><span class="rh">1600</span><b style="background:#91e97d">0.619</b><b style="background:#93e97d">0.667</b><b style="background:#94e87e">0.722</b><b style="background:#96e77e">0.782</b><b style="background:#99e67e">0.874</b><b style="background:#9ce57f">0.976</b><b style="background:#9fe37f">1.070</b><b style="background:#a2e280">1.186</b><b style="background:#a4e180">1.244</b><b style="background:#a6e081">1.306</b><b style="background:#a8df81">1.375</b><b style="background:#a9de81">1.419</b><b style="background:#abdd82">1.490</b><b style="background:#addc82">1.565</b><b style="background:#b0db82">1.662</b><b style="background:#b4d983">1.775</b><b style="background:#b9d784">1.943</b><b style="background:#bed385">2.066</b><b style="background:#cbc987">2.374</b><b style="background:#d4c187">2.588</b><b style="background:#deb788">2.844</b><b style="background:#e6ad87">3.110</b><b style="background:#eaa585">3.345</b><b style="background:#ed9f84">3.516</b><b style="background:#ed9e84">3.547</b><b style="background:#ef9a83">3.662</b><b style="background:#ef9983">3.699</b><b style="background:#f09782">3.768</b><b style="background:#f29482">3.860</b><b style="background:#f29482">3.860</b></div>
<div class="drow"><span class="rh">1700</span><b style="background:#92e97d">0.654</b><b style="background:#93e97d">0.669</b><b style="background:#94e87d">0.702</b><b style="background:#95e87e">0.748</b><b style="background:#99e67e">0.859</b><b style="background:#9be57f">0.930</b><b style="background:#9de47f">1.019</b><b style="background:#a0e380">1.110</b><b style="background:#a2e280">1.180</b><b style="background:#a5e080">1.272</b><b style="background:#a7e081">1.336</b><b style="background:#a8df81">1.377</b><b style="background:#abde81">1.466</b><b style="background:#abdd82">1.493</b><b style="background:#aedc82">1.589</b><b style="background:#b1db83">1.688</b><b style="background:#b6d883">1.858</b><b style="background:#bbd584">2.007</b><b style="background:#c7cc86">2.288</b><b style="background:#d0c587">2.497</b><b style="background:#dabb88">2.738</b><b style="background:#e0b588">2.893</b><b style="background:#e5ad87">3.103</b><b style="background:#eaa485">3.363</b><b style="background:#eba284">3.421</b><b style="background:#ed9e84">3.547</b><b style="background:#ed9e84">3.548</b><b style="background:#ed9e84">3.549</b><b style="background:#ed9e84">3.550</b><b style="background:#ed9e84">3.550</b></div>
<div class="drow"><span class="rh">1800</span><b style="background:#92e97d">0.632</b><b style="background:#92e97d">0.652</b><b style="background:#94e87d">0.700</b><b style="background:#95e87e">0.740</b><b style="background:#98e77e">0.833</b><b style="background:#9ae67e">0.905</b><b style="background:#9ce47f">0.982</b><b style="background:#9fe37f">1.074</b><b style="background:#a2e280">1.162</b><b style="background:#a4e180">1.259</b><b style="background:#a6e081">1.323</b><b style="background:#a8df81">1.365</b><b style="background:#aade81">1.438</b><b style="background:#abdd82">1.486</b><b style="background:#addd82">1.551</b><b style="background:#afdb82">1.629</b><b style="background:#b4d983">1.789</b><b style="background:#bad684">1.976</b><b style="background:#c6cd86">2.259</b><b style="background:#d0c587">2.490</b><b style="background:#d6bf87">2.634</b><b style="background:#dabb88">2.750</b><b style="background:#e1b488">2.910</b><b style="background:#e6ad87">3.112</b><b style="background:#e8a886">3.256</b><b style="background:#eba184">3.430</b><b style="background:#eba184">3.431</b><b style="background:#eba184">3.432</b><b style="background:#eba184">3.433</b><b style="background:#eba184">3.433</b></div>
<div class="drow"><span class="rh">1900</span><b style="background:#8fea7d">0.553</b><b style="background:#91ea7d">0.603</b><b style="background:#92e97d">0.636</b><b style="background:#94e87d">0.698</b><b style="background:#98e67e">0.836</b><b style="background:#9ae67e">0.905</b><b style="background:#9ce47f">0.984</b><b style="background:#9fe37f">1.066</b><b style="background:#a2e280">1.166</b><b style="background:#a5e080">1.279</b><b style="background:#a7df81">1.346</b><b style="background:#a8df81">1.392</b><b style="background:#abde81">1.476</b><b style="background:#acdd82">1.506</b><b style="background:#acdd82">1.531</b><b style="background:#aedc82">1.590</b><b style="background:#b3da83">1.750</b><b style="background:#bcd584">2.031</b><b style="background:#c6ce86">2.247</b><b style="background:#d2c387">2.532</b><b style="background:#dabb88">2.738</b><b style="background:#ddb888">2.811</b><b style="background:#e0b588">2.879</b><b style="background:#e2b388">2.933</b><b style="background:#e5af87">3.059</b><b style="background:#e8a786">3.271</b><b style="background:#e9a685">3.301</b><b style="background:#e9a585">3.322</b><b style="background:#eaa485">3.348</b><b style="background:#eaa485">3.348</b></div>
<div class="drow"><span class="rh">2000</span><b style="background:#90ea7d">0.576</b><b style="background:#91ea7d">0.616</b><b style="background:#93e97d">0.669</b><b style="background:#94e87d">0.710</b><b style="background:#97e77e">0.799</b><b style="background:#99e67e">0.875</b><b style="background:#9be57f">0.933</b><b style="background:#9de47f">1.020</b><b style="background:#a0e380">1.118</b><b style="background:#a4e180">1.230</b><b style="background:#a5e080">1.289</b><b style="background:#a8df81">1.380</b><b style="background:#abde81">1.466</b><b style="background:#abdd82">1.496</b><b style="background:#acdd82">1.510</b><b style="background:#addc82">1.562</b><b style="background:#b2da83">1.703</b><b style="background:#bbd684">1.989</b><b style="background:#c2d085">2.160</b><b style="background:#d1c487">2.522</b><b style="background:#e4af87">3.037</b><b style="background:#e5ae87">3.086</b><b style="background:#e7aa86">3.184</b><b style="background:#e8a786">3.271</b><b style="background:#eaa585">3.343</b><b style="background:#ed9e84">3.528</b><b style="background:#ed9e84">3.529</b><b style="background:#ed9e84">3.530</b><b style="background:#ed9e84">3.531</b><b style="background:#ed9e84">3.531</b></div>
<div class="drow"><span class="rh">2200</span><b style="background:#90ea7d">0.570</b><b style="background:#91e97d">0.621</b><b style="background:#92e97d">0.650</b><b style="background:#94e87d">0.701</b><b style="background:#96e77e">0.764</b><b style="background:#98e67e">0.842</b><b style="background:#9ae57f">0.913</b><b style="background:#9ce47f">0.985</b><b style="background:#9fe37f">1.086</b><b style="background:#a2e280">1.175</b><b style="background:#a4e180">1.240</b><b style="background:#a6e081">1.324</b><b style="background:#a9de81">1.414</b><b style="background:#a9de81">1.429</b><b style="background:#aade81">1.463</b><b style="background:#acdd82">1.532</b><b style="background:#b0db82">1.650</b><b style="background:#b8d784">1.922</b><b style="background:#bfd385">2.092</b><b style="background:#d1c487">2.509</b><b style="background:#e3b288">2.975</b><b style="background:#e5ae87">3.067</b><b style="background:#e6ab87">3.154</b><b style="background:#e8a986">3.226</b><b style="background:#eaa485">3.347</b><b style="background:#ed9e84">3.525</b><b style="background:#ed9e84">3.537</b><b style="background:#ed9e84">3.549</b><b style="background:#ed9d83">3.557</b><b style="background:#ed9d83">3.557</b></div>
<div class="drow"><span class="rh">2400</span><b style="background:#8cec7c">0.436</b><b style="background:#8deb7c">0.484</b><b style="background:#90ea7d">0.558</b><b style="background:#93e97d">0.669</b><b style="background:#95e87e">0.745</b><b style="background:#98e77e">0.824</b><b style="background:#9ae67e">0.892</b><b style="background:#9ce57f">0.961</b><b style="background:#9ee47f">1.046</b><b style="background:#a1e280">1.137</b><b style="background:#a3e180">1.197</b><b style="background:#a4e180">1.261</b><b style="background:#a7e081">1.339</b><b style="background:#a9df81">1.401</b><b style="background:#abde81">1.473</b><b style="background:#acdd82">1.531</b><b style="background:#b0db82">1.640</b><b style="background:#b7d884">1.881</b><b style="background:#bdd485">2.042</b><b style="background:#d0c587">2.489</b><b style="background:#e4b188">3.001</b><b style="background:#e6ad87">3.108</b><b style="background:#e8a986">3.230</b><b style="background:#eaa485">3.361</b><b style="background:#eba284">3.418</b><b style="background:#ed9d83">3.560</b><b style="background:#ed9d83">3.564</b><b style="background:#ed9d83">3.570</b><b style="background:#ee9d83">3.573</b><b style="background:#ee9d83">3.573</b></div>
<div class="drow"><span class="rh">2600</span><b style="background:#8cec7c">0.270</b><b style="background:#8cec7c">0.321</b><b style="background:#8cec7c">0.400</b><b style="background:#8eeb7c">0.517</b><b style="background:#91ea7d">0.598</b><b style="background:#93e97d">0.682</b><b style="background:#95e87e">0.754</b><b style="background:#98e77e">0.827</b><b style="background:#9ae57f">0.918</b><b style="background:#9de47f">1.014</b><b style="background:#9fe37f">1.078</b><b style="background:#a1e280">1.146</b><b style="background:#a4e180">1.229</b><b style="background:#a5e081">1.294</b><b style="background:#a8df81">1.371</b><b style="background:#aade81">1.432</b><b style="background:#addd82">1.548</b><b style="background:#b5d983">1.804</b><b style="background:#bad684">1.975</b><b style="background:#cec787">2.449</b><b style="background:#e3b188">2.993</b><b style="background:#e7ab86">3.166</b><b style="background:#e9a585">3.321</b><b style="background:#eca184">3.446</b><b style="background:#eca084">3.481</b><b style="background:#ee9b83">3.625</b><b style="background:#ef9b83">3.657</b><b style="background:#ef9a83">3.677</b><b style="background:#ef9983">3.707</b><b style="background:#ef9983">3.707</b></div>
<div class="drow"><span class="rh">2800</span><b style="background:#8cec7c">0.360</b><b style="background:#8cec7c">0.407</b><b style="background:#8deb7c">0.479</b><b style="background:#91ea7d">0.588</b><b style="background:#93e97d">0.662</b><b style="background:#95e87e">0.739</b><b style="background:#97e77e">0.806</b><b style="background:#99e67e">0.873</b><b style="background:#9be57f">0.956</b><b style="background:#9ee47f">1.045</b><b style="background:#a0e380">1.103</b><b style="background:#a2e280">1.166</b><b style="background:#a4e180">1.242</b><b style="background:#a6e081">1.303</b><b style="background:#a8df81">1.373</b><b style="background:#a9de81">1.430</b><b style="background:#addd82">1.536</b><b style="background:#b4da83">1.772</b><b style="background:#b8d784">1.929</b><b style="background:#cbca87">2.366</b><b style="background:#dfb688">2.866</b><b style="background:#e5af87">3.060</b><b style="background:#e8a986">3.227</b><b style="background:#eaa485">3.354</b><b style="background:#eba284">3.424</b><b style="background:#ee9d83">3.589</b><b style="background:#ee9b83">3.628</b><b style="background:#ef9a83">3.665</b><b style="background:#f09983">3.716</b><b style="background:#f09983">3.716</b></div>
<div class="drow"><span class="rh">3000</span><b style="background:#8eeb7c">0.500</b><b style="background:#8feb7d">0.544</b><b style="background:#91ea7d">0.611</b><b style="background:#94e87d">0.711</b><b style="background:#96e77e">0.780</b><b style="background:#98e67e">0.852</b><b style="background:#9ae57f">0.914</b><b style="background:#9ce57f">0.976</b><b style="background:#9ee37f">1.053</b><b style="background:#a1e280">1.136</b><b style="background:#a2e280">1.190</b><b style="background:#a4e180">1.248</b><b style="background:#a6e081">1.319</b><b style="background:#a8df81">1.375</b><b style="background:#aade81">1.440</b><b style="background:#abdd82">1.493</b><b style="background:#aedc82">1.592</b><b style="background:#b5d983">1.810</b><b style="background:#b9d784">1.956</b><b style="background:#cbca87">2.362</b><b style="background:#ddb888">2.826</b><b style="background:#e5ae87">3.091</b><b style="background:#e9a685">3.298</b><b style="background:#ee9d83">3.578</b><b style="background:#ef9a83">3.660</b><b style="background:#f19582">3.829</b><b style="background:#f29582">3.851</b><b style="background:#f29482">3.878</b><b style="background:#f39381">3.908</b><b style="background:#f39381">3.908</b></div>
<div class="drow"><span class="rh">3200</span><b style="background:#91ea7d">0.600</b><b style="background:#92e97d">0.642</b><b style="background:#94e87d">0.706</b><b style="background:#97e77e">0.802</b><b style="background:#99e67e">0.868</b><b style="background:#9be57f">0.936</b><b style="background:#9de47f">0.995</b><b style="background:#9ee37f">1.055</b><b style="background:#a1e280">1.129</b><b style="background:#a3e180">1.208</b><b style="background:#a4e180">1.260</b><b style="background:#a6e081">1.315</b><b style="background:#a8df81">1.383</b><b style="background:#aade81">1.436</b><b style="background:#acdd82">1.499</b><b style="background:#addd82">1.549</b><b style="background:#b0db82">1.643</b><b style="background:#b6d883">1.852</b><b style="background:#bbd684">1.992</b><b style="background:#cbc987">2.379</b><b style="background:#ddb888">2.823</b><b style="background:#e5ad87">3.096</b><b style="background:#eaa485">3.356</b><b style="background:#ed9d83">3.557</b><b style="background:#ee9b83">3.629</b><b style="background:#f19682">3.809</b><b style="background:#f29582">3.842</b><b style="background:#f29482">3.869</b><b style="background:#f29381">3.899</b><b style="background:#f29381">3.899</b></div>
<div class="drow"><span class="rh">3400</span><b style="background:#91e97d">0.620</b><b style="background:#93e97d">0.658</b><b style="background:#94e87d">0.717</b><b style="background:#97e77e">0.804</b><b style="background:#99e67e">0.864</b><b style="background:#9be57f">0.927</b><b style="background:#9ce47f">0.981</b><b style="background:#9ee47f">1.035</b><b style="background:#a0e380">1.103</b><b style="background:#a2e280">1.175</b><b style="background:#a3e180">1.222</b><b style="background:#a5e080">1.273</b><b style="background:#a7e081">1.334</b><b style="background:#a8df81">1.383</b><b style="background:#aade81">1.440</b><b style="background:#abdd82">1.486</b><b style="background:#aedc82">1.572</b><b style="background:#b3da83">1.763</b><b style="background:#b7d884">1.890</b><b style="background:#c6ce86">2.244</b><b style="background:#d6bf87">2.649</b><b style="background:#e4b087">3.032</b><b style="background:#e9a785">3.287</b><b style="background:#ed9e84">3.528</b><b style="background:#ed9d83">3.564</b><b style="background:#ef9983">3.703</b><b style="background:#f19782">3.776</b><b style="background:#f29582">3.848</b><b style="background:#f29381">3.899</b><b style="background:#f29381">3.899</b></div>
<div class="drow"><span class="rh">3600</span><b style="background:#90ea7d">0.570</b><b style="background:#91ea7d">0.608</b><b style="background:#93e97d">0.667</b><b style="background:#95e87e">0.755</b><b style="background:#97e77e">0.815</b><b style="background:#99e67e">0.878</b><b style="background:#9be57f">0.932</b><b style="background:#9ce47f">0.987</b><b style="background:#9ee37f">1.054</b><b style="background:#a0e280">1.126</b><b style="background:#a2e280">1.174</b><b style="background:#a3e180">1.225</b><b style="background:#a5e080">1.287</b><b style="background:#a7e081">1.336</b><b style="background:#a8df81">1.393</b><b style="background:#aade81">1.439</b><b style="background:#acdd82">1.526</b><b style="background:#b2da83">1.717</b><b style="background:#b6d983">1.845</b><b style="background:#c4cf86">2.200</b><b style="background:#d5c087">2.606</b><b style="background:#e4af87">3.038</b><b style="background:#e9a585">3.321</b><b style="background:#ee9b83">3.631</b><b style="background:#ef9b83">3.653</b><b style="background:#f09782">3.761</b><b style="background:#f19682">3.797</b><b style="background:#f19582">3.833</b><b style="background:#f29482">3.861</b><b style="background:#f29482">3.861</b></div>
<div class="drow"><span class="rh">3800</span><b style="background:#8eeb7c">0.520</b><b style="background:#90ea7d">0.558</b><b style="background:#91e97d">0.617</b><b style="background:#94e87d">0.705</b><b style="background:#96e77e">0.765</b><b style="background:#98e77e">0.828</b><b style="background:#99e67e">0.881</b><b style="background:#9be57f">0.936</b><b style="background:#9de47f">1.003</b><b style="background:#9fe37f">1.076</b><b style="background:#a0e280">1.123</b><b style="background:#a2e280">1.174</b><b style="background:#a4e180">1.236</b><b style="background:#a5e080">1.285</b><b style="background:#a7df81">1.342</b><b style="background:#a8df81">1.388</b><b style="background:#abde81">1.474</b><b style="background:#b0db82">1.665</b><b style="background:#b4d983">1.793</b><b style="background:#c1d185">2.147</b><b style="background:#d2c387">2.553</b><b style="background:#e2b388">2.947</b><b style="background:#eaa485">3.359</b><b style="background:#ef9a83">3.681</b><b style="background:#f09882">3.742</b><b style="background:#f29381">3.891</b><b style="background:#f39381">3.901</b><b style="background:#f39381">3.910</b><b style="background:#f39381">3.915</b><b style="background:#f39381">3.915</b></div>
<div class="drow"><span class="rh">4000</span><b style="background:#8dec7c">0.470</b><b style="background:#8eeb7c">0.507</b><b style="background:#90ea7d">0.564</b><b style="background:#92e97d">0.649</b><b style="background:#94e87d">0.707</b><b style="background:#96e77e">0.767</b><b style="background:#97e77e">0.820</b><b style="background:#99e67e">0.872</b><b style="background:#9be57f">0.938</b><b style="background:#9de47f">1.007</b><b style="background:#9ee37f">1.053</b><b style="background:#a0e380">1.102</b><b style="background:#a2e280">1.162</b><b style="background:#a3e180">1.210</b><b style="background:#a5e180">1.265</b><b style="background:#a6e081">1.309</b><b style="background:#a8df81">1.393</b><b style="background:#aedc82">1.578</b><b style="background:#b2da83">1.701</b><b style="background:#bdd485">2.044</b><b style="background:#cec787">2.436</b><b style="background:#deb788">2.843</b><b style="background:#e8a886">3.240</b><b style="background:#ed9d83">3.571</b><b style="background:#ef9983">3.706</b><b style="background:#f39381">3.900</b><b style="background:#f39281">3.923</b><b style="background:#f39281">3.944</b><b style="background:#f49181">3.967</b><b style="background:#f49181">3.967</b></div>
<div class="drow"><span class="rh">4200</span><b style="background:#8cec7c">0.430</b><b style="background:#8dec7c">0.467</b><b style="background:#8feb7c">0.524</b><b style="background:#91ea7d">0.609</b><b style="background:#93e97d">0.668</b><b style="background:#95e87e">0.728</b><b style="background:#96e77e">0.781</b><b style="background:#98e67e">0.834</b><b style="background:#9ae67e">0.899</b><b style="background:#9ce57f">0.969</b><b style="background:#9de47f">1.015</b><b style="background:#9fe37f">1.064</b><b style="background:#a0e280">1.124</b><b style="background:#a2e280">1.172</b><b style="background:#a3e180">1.227</b><b style="background:#a5e080">1.272</b><b style="background:#a7df81">1.356</b><b style="background:#addd82">1.541</b><b style="background:#b0db82">1.665</b><b style="background:#bbd584">2.008</b><b style="background:#ccc987">2.402</b><b style="background:#dcb988">2.803</b><b style="background:#e6ab86">3.160</b><b style="background:#ed9e84">3.553</b><b style="background:#ef9a83">3.669</b><b style="background:#f29482">3.878</b><b style="background:#f39281">3.928</b><b style="background:#f49181">3.979</b><b style="background:#f58f80">4.028</b><b style="background:#f58f80">4.028</b></div>
<div class="drow"><span class="rh">4400</span><b style="background:#8cec7c">0.390</b><b style="background:#8cec7c">0.426</b><b style="background:#8deb7c">0.482</b><b style="background:#90ea7d">0.565</b><b style="background:#92e97d">0.623</b><b style="background:#93e97d">0.682</b><b style="background:#95e87e">0.733</b><b style="background:#96e77e">0.785</b><b style="background:#98e67e">0.849</b><b style="background:#9ae57f">0.918</b><b style="background:#9ce57f">0.963</b><b style="background:#9de47f">1.011</b><b style="background:#9fe37f">1.070</b><b style="background:#a0e380">1.116</b><b style="background:#a2e280">1.171</b><b style="background:#a3e180">1.214</b><b style="background:#a5e081">1.296</b><b style="background:#abde81">1.478</b><b style="background:#aedc82">1.599</b><b style="background:#b8d784">1.936</b><b style="background:#c9cb86">2.321</b><b style="background:#d9bc88">2.727</b><b style="background:#e6ab86">3.157</b><b style="background:#ed9f84">3.522</b><b style="background:#ee9c83">3.606</b><b style="background:#f19682">3.798</b><b style="background:#f19582">3.837</b><b style="background:#f29482">3.875</b><b style="background:#f39381">3.913</b><b style="background:#f39381">3.913</b></div>
<div class="drow"><span class="rh">4600</span><b style="background:#8cec7c">0.360</b><b style="background:#8cec7c">0.395</b><b style="background:#8cec7c">0.450</b><b style="background:#8feb7d">0.532</b><b style="background:#91ea7d">0.589</b><b style="background:#92e97d">0.647</b><b style="background:#94e87d">0.697</b><b style="background:#95e87e">0.748</b><b style="background:#97e77e">0.811</b><b style="background:#99e67e">0.878</b><b style="background:#9ae57f">0.923</b><b style="background:#9ce57f">0.970</b><b style="background:#9ee47f">1.028</b><b style="background:#9fe37f">1.074</b><b style="background:#a0e280">1.127</b><b style="background:#a2e280">1.170</b><b style="background:#a4e180">1.250</b><b style="background:#a9de81">1.429</b><b style="background:#addd82">1.548</b><b style="background:#b7d884">1.878</b><b style="background:#c6cd86">2.257</b><b style="background:#d8bd87">2.685</b><b style="background:#e6ac87">3.134</b><b style="background:#ed9e84">3.530</b><b style="background:#ef9a83">3.668</b><b style="background:#f29481">3.886</b><b style="background:#f49181">3.966</b><b style="background:#f58f80">4.039</b><b style="background:#f78c80">4.147</b><b style="background:#f78c80">4.147</b></div>
<div class="drow"><span class="rh">4800</span><b style="background:#8cec7c">0.330</b><b style="background:#8cec7c">0.366</b><b style="background:#8cec7c">0.420</b><b style="background:#8eeb7c">0.502</b><b style="background:#90ea7d">0.559</b><b style="background:#91e97d">0.617</b><b style="background:#93e97d">0.667</b><b style="background:#94e87d">0.718</b><b style="background:#96e77e">0.781</b><b style="background:#98e67e">0.849</b><b style="background:#9ae67e">0.893</b><b style="background:#9be57f">0.940</b><b style="background:#9de47f">0.998</b><b style="background:#9ee47f">1.044</b><b style="background:#a0e37f">1.097</b><b style="background:#a1e280">1.140</b><b style="background:#a3e180">1.221</b><b style="background:#a9df81">1.399</b><b style="background:#acdd82">1.518</b><b style="background:#b6d883">1.849</b><b style="background:#c5ce86">2.228</b><b style="background:#d6bf87">2.634</b><b style="background:#e6ad87">3.109</b><b style="background:#ed9e84">3.541</b><b style="background:#ef9b83">3.645</b><b style="background:#f29582">3.852</b><b style="background:#f29381">3.899</b><b style="background:#f49181">3.978</b><b style="background:#f49181">3.980</b><b style="background:#f49181">3.980</b></div>
<div class="drow"><span class="rh">5200</span><b style="background:#8cec7c">0.280</b><b style="background:#8cec7c">0.316</b><b style="background:#8cec7c">0.371</b><b style="background:#8dec7c">0.454</b><b style="background:#8eeb7c">0.511</b><b style="background:#90ea7d">0.570</b><b style="background:#91e97d">0.620</b><b style="background:#93e97d">0.672</b><b style="background:#95e87e">0.735</b><b style="background:#97e77e">0.803</b><b style="background:#98e67e">0.848</b><b style="background:#9ae67e">0.896</b><b style="background:#9be57f">0.954</b><b style="background:#9de47f">1.000</b><b style="background:#9ee37f">1.054</b><b style="background:#a0e37f">1.097</b><b style="background:#a2e280">1.178</b><b style="background:#a7df81">1.358</b><b style="background:#abde81">1.478</b><b style="background:#b5d983">1.812</b><b style="background:#c3cf86">2.194</b><b style="background:#d5c087">2.608</b><b style="background:#e5ae87">3.068</b><b style="background:#ed9d83">3.572</b><b style="background:#ef9983">3.706</b><b style="background:#f39181">3.955</b><b style="background:#f58e80">4.057</b><b style="background:#f68c80">4.131</b><b style="background:#f88a7f">4.208</b><b style="background:#f88a7f">4.208</b></div>
<div class="drow"><span class="rh">5600</span><b style="background:#8cec7c">0.240</b><b style="background:#8cec7c">0.276</b><b style="background:#8cec7c">0.331</b><b style="background:#8cec7c">0.414</b><b style="background:#8dec7c">0.470</b><b style="background:#8feb7c">0.529</b><b style="background:#90ea7d">0.580</b><b style="background:#92e97d">0.632</b><b style="background:#94e87d">0.695</b><b style="background:#96e77e">0.763</b><b style="background:#97e77e">0.808</b><b style="background:#98e67e">0.855</b><b style="background:#9ae57f">0.913</b><b style="background:#9ce57f">0.960</b><b style="background:#9de47f">1.013</b><b style="background:#9ee37f">1.057</b><b style="background:#a1e280">1.138</b><b style="background:#a6e081">1.318</b><b style="background:#aade81">1.438</b><b style="background:#b4da83">1.771</b><b style="background:#c2d185">2.153</b><b style="background:#d4c187">2.582</b><b style="background:#e5af87">3.058</b><b style="background:#ec9f84">3.499</b><b style="background:#ef9a83">3.684</b><b style="background:#f39281">3.925</b><b style="background:#f39181">3.958</b><b style="background:#f49081">4.011</b><b style="background:#f58f80">4.050</b><b style="background:#f58f80">4.050</b></div>
<div class="drow"><span class="rh">5800</span><b style="background:#8cec7c">0.220</b><b style="background:#8cec7c">0.254</b><b style="background:#8cec7c">0.307</b><b style="background:#8cec7c">0.387</b><b style="background:#8cec7c">0.442</b><b style="background:#8eeb7c">0.498</b><b style="background:#8fea7d">0.547</b><b style="background:#91ea7d">0.596</b><b style="background:#93e97d">0.657</b><b style="background:#95e87e">0.723</b><b style="background:#96e77e">0.766</b><b style="background:#97e77e">0.811</b><b style="background:#99e67e">0.867</b><b style="background:#9ae57f">0.912</b><b style="background:#9ce57f">0.963</b><b style="background:#9de47f">1.005</b><b style="background:#9fe37f">1.083</b><b style="background:#a4e180">1.256</b><b style="background:#a8df81">1.371</b><b style="background:#b1db83">1.692</b><b style="background:#bed485">2.059</b><b style="background:#cfc687">2.472</b><b style="background:#e3b188">2.984</b><b style="background:#eba284">3.422</b><b style="background:#ef9983">3.694</b><b style="background:#f58f80">4.031</b><b style="background:#f68d80">4.114</b><b style="background:#f78a7f">4.194</b><b style="background:#f9877f">4.286</b><b style="background:#f9877f">4.286</b></div>
<div class="drow"><span class="rh">6000</span><b style="background:#8cec7c">0.200</b><b style="background:#8cec7c">0.233</b><b style="background:#8cec7c">0.284</b><b style="background:#8cec7c">0.361</b><b style="background:#8cec7c">0.413</b><b style="background:#8dec7c">0.467</b><b style="background:#8eeb7c">0.514</b><b style="background:#90ea7d">0.562</b><b style="background:#91e97d">0.620</b><b style="background:#93e97d">0.683</b><b style="background:#95e87e">0.725</b><b style="background:#96e77e">0.769</b><b style="background:#97e77e">0.822</b><b style="background:#99e67e">0.865</b><b style="background:#9ae57f">0.915</b><b style="background:#9be57f">0.955</b><b style="background:#9ee47f">1.030</b><b style="background:#a3e180">1.196</b><b style="background:#a6e081">1.307</b><b style="background:#afdc82">1.615</b><b style="background:#bad784">1.968</b><b style="background:#ccc987">2.385</b><b style="background:#e1b488">2.919</b><b style="background:#eba285">3.402</b><b style="background:#f09983">3.708</b><b style="background:#f49081">4.015</b><b style="background:#f68d80">4.101</b><b style="background:#f78b7f">4.175</b><b style="background:#f9887f">4.268</b><b style="background:#f9887f">4.268</b></div>
<div class="drow"><span class="rh">6400</span><b style="background:#8cec7c">0.170</b><b style="background:#8cec7c">0.203</b><b style="background:#8cec7c">0.254</b><b style="background:#8cec7c">0.331</b><b style="background:#8cec7c">0.383</b><b style="background:#8cec7c">0.437</b><b style="background:#8deb7c">0.484</b><b style="background:#8feb7d">0.532</b><b style="background:#91ea7d">0.590</b><b style="background:#92e97d">0.653</b><b style="background:#94e87d">0.695</b><b style="background:#95e87e">0.739</b><b style="background:#97e77e">0.792</b><b style="background:#98e67e">0.835</b><b style="background:#99e67e">0.885</b><b style="background:#9ae57f">0.925</b><b style="background:#9de47f">1.000</b><b style="background:#a2e280">1.166</b><b style="background:#a5e080">1.277</b><b style="background:#aedc82">1.585</b><b style="background:#b9d784">1.938</b><b style="background:#cbca87">2.365</b><b style="background:#e0b588">2.892</b><b style="background:#eaa385">3.378</b><b style="background:#ef9983">3.705</b><b style="background:#f58f80">4.035</b><b style="background:#f68c80">4.120</b><b style="background:#f9887f">4.269</b><b style="background:#fb847e">4.404</b><b style="background:#fb847e">4.404</b></div>
<div class="drow"><span class="rh">6800</span><b style="background:#8cec7c">0.140</b><b style="background:#8cec7c">0.175</b><b style="background:#8cec7c">0.229</b><b style="background:#8cec7c">0.310</b><b style="background:#8cec7c">0.366</b><b style="background:#8cec7c">0.424</b><b style="background:#8deb7c">0.474</b><b style="background:#8feb7c">0.524</b><b style="background:#90ea7d">0.586</b><b style="background:#92e97d">0.653</b><b style="background:#94e87d">0.697</b><b style="background:#95e87e">0.743</b><b style="background:#97e77e">0.800</b><b style="background:#98e67e">0.846</b><b style="background:#9ae67e">0.898</b><b style="background:#9be57f">0.941</b><b style="background:#9de47f">1.021</b><b style="background:#a3e180">1.197</b><b style="background:#a6e081">1.315</b><b style="background:#b0db82">1.642</b><b style="background:#bcd584">2.016</b><b style="background:#c9cb86">2.326</b><b style="background:#e1b488">2.924</b><b style="background:#eba284">3.420</b><b style="background:#ef9a83">3.679</b><b style="background:#f58f80">4.032</b><b style="background:#f78b7f">4.172</b><b style="background:#fa867e">4.329</b><b style="background:#fc827d">4.451</b><b style="background:#fc827d">4.451</b></div>
<div class="drow"><span class="rh">7200</span><b style="background:#8cec7c">0.120</b><b style="background:#8cec7c">0.156</b><b style="background:#8cec7c">0.212</b><b style="background:#8cec7c">0.295</b><b style="background:#8cec7c">0.352</b><b style="background:#8cec7c">0.411</b><b style="background:#8dec7c">0.462</b><b style="background:#8eeb7c">0.514</b><b style="background:#90ea7d">0.578</b><b style="background:#92e97d">0.646</b><b style="background:#94e87d">0.691</b><b style="background:#95e87e">0.739</b><b style="background:#97e77e">0.798</b><b style="background:#98e67e">0.845</b><b style="background:#9ae67e">0.899</b><b style="background:#9be57f">0.942</b><b style="background:#9de47f">1.024</b><b style="background:#a3e180">1.205</b><b style="background:#a6e081">1.326</b><b style="background:#b0db82">1.662</b><b style="background:#bdd485">2.046</b><b style="background:#cbca87">2.362</b><b style="background:#ddb888">2.828</b><b style="background:#e9a585">3.322</b><b style="background:#f09983">3.708</b><b style="background:#f78a7f">4.183</b><b style="background:#fa867e">4.326</b><b style="background:#fc817d">4.497</b><b style="background:#ff7c7c">4.652</b><b style="background:#ff7c7c">4.652</b></div>
<div class="drow"><span class="rh">7600</span><b style="background:#8cec7c">0.100</b><b style="background:#8cec7c">0.135</b><b style="background:#8cec7c">0.190</b><b style="background:#8cec7c">0.271</b><b style="background:#8cec7c">0.327</b><b style="background:#8cec7c">0.385</b><b style="background:#8cec7c">0.435</b><b style="background:#8deb7c">0.486</b><b style="background:#8fea7d">0.549</b><b style="background:#91ea7d">0.615</b><b style="background:#93e97d">0.660</b><b style="background:#94e87d">0.707</b><b style="background:#96e77e">0.764</b><b style="background:#97e77e">0.810</b><b style="background:#99e67e">0.862</b><b style="background:#9ae67e">0.905</b><b style="background:#9ce47f">0.985</b><b style="background:#a2e280">1.162</b><b style="background:#a5e080">1.281</b><b style="background:#afdc82">1.610</b><b style="background:#bad684">1.986</b><b style="background:#ccc987">2.390</b><b style="background:#ddb888">2.822</b><b style="background:#e6ac87">3.147</b><b style="background:#ef9b83">3.644</b><b style="background:#f68d80">4.113</b><b style="background:#f9887f">4.263</b><b style="background:#fc827d">4.447</b><b style="background:#ff7d7c">4.632</b><b style="background:#ff7d7c">4.632</b></div>
<div class="drow"><span class="rh">8000</span><b style="background:#8cec7c">0.085</b><b style="background:#8cec7c">0.120</b><b style="background:#8cec7c">0.173</b><b style="background:#8cec7c">0.254</b><b style="background:#8cec7c">0.309</b><b style="background:#8cec7c">0.366</b><b style="background:#8cec7c">0.415</b><b style="background:#8dec7c">0.465</b><b style="background:#8feb7c">0.527</b><b style="background:#91ea7d">0.593</b><b style="background:#92e97d">0.636</b><b style="background:#93e97d">0.682</b><b style="background:#95e87e">0.739</b><b style="background:#96e77e">0.784</b><b style="background:#98e67e">0.836</b><b style="background:#99e67e">0.878</b><b style="background:#9be57f">0.957</b><b style="background:#a1e280">1.131</b><b style="background:#a4e180">1.248</b><b style="background:#aedc82">1.571</b><b style="background:#b9d784">1.942</b><b style="background:#c5ce86">2.242</b><b style="background:#d7be87">2.655</b><b style="background:#e6ab87">3.150</b><b style="background:#ed9e84">3.552</b><b style="background:#f39281">3.939</b><b style="background:#f58e80">4.076</b><b style="background:#f88a7f">4.211</b><b style="background:#fa867e">4.335</b><b style="background:#fa867e">4.335</b></div>
<div class="drow"><span class="rh">8400</span><b style="background:#8cec7c">0.078</b><b style="background:#8cec7c">0.111</b><b style="background:#8cec7c">0.163</b><b style="background:#8cec7c">0.239</b><b style="background:#8cec7c">0.292</b><b style="background:#8cec7c">0.347</b><b style="background:#8cec7c">0.394</b><b style="background:#8cec7c">0.442</b><b style="background:#8eeb7c">0.501</b><b style="background:#90ea7d">0.564</b><b style="background:#91ea7d">0.605</b><b style="background:#92e97d">0.650</b><b style="background:#94e87d">0.704</b><b style="background:#95e87e">0.747</b><b style="background:#97e77e">0.796</b><b style="background:#98e67e">0.837</b><b style="background:#9ae57f">0.912</b><b style="background:#9fe37f">1.079</b><b style="background:#a2e280">1.191</b><b style="background:#acdd82">1.500</b><b style="background:#b6d883">1.855</b><b style="background:#c1d185">2.134</b><b style="background:#d0c587">2.485</b><b style="background:#e6ac87">3.138</b><b style="background:#ec9f84">3.498</b><b style="background:#f09983">3.721</b><b style="background:#f29381">3.890</b><b style="background:#f58e80">4.079</b><b style="background:#f9887f">4.269</b><b style="background:#f9887f">4.269</b></div>
<div class="drow"><span class="rh">8800</span><b style="background:#8cec7c">0.078</b><b style="background:#8cec7c">0.113</b><b style="background:#8cec7c">0.167</b><b style="background:#8cec7c">0.249</b><b style="background:#8cec7c">0.305</b><b style="background:#8cec7c">0.363</b><b style="background:#8cec7c">0.412</b><b style="background:#8dec7c">0.463</b><b style="background:#8feb7c">0.525</b><b style="background:#91ea7d">0.592</b><b style="background:#92e97d">0.636</b><b style="background:#93e97d">0.683</b><b style="background:#95e87e">0.740</b><b style="background:#96e77e">0.786</b><b style="background:#98e67e">0.838</b><b style="background:#99e67e">0.881</b><b style="background:#9ce57f">0.961</b><b style="background:#a1e280">1.138</b><b style="background:#a4e180">1.256</b><b style="background:#aedc82">1.584</b><b style="background:#b9d784">1.959</b><b style="background:#c1d185">2.131</b><b style="background:#cec787">2.439</b><b style="background:#dcb988">2.793</b><b style="background:#e9a785">3.287</b><b style="background:#f09782">3.774</b><b style="background:#f19582">3.835</b><b style="background:#f49081">4.006</b><b style="background:#f78b7f">4.181</b><b style="background:#f78b7f">4.181</b></div>
<div class="drow"><span class="rh">9200</span><b style="background:#8cec7c">0.078</b><b style="background:#8cec7c">0.112</b><b style="background:#8cec7c">0.166</b><b style="background:#8cec7c">0.245</b><b style="background:#8cec7c">0.300</b><b style="background:#8cec7c">0.356</b><b style="background:#8cec7c">0.405</b><b style="background:#8dec7c">0.455</b><b style="background:#8eeb7c">0.516</b><b style="background:#90ea7d">0.581</b><b style="background:#92e97d">0.624</b><b style="background:#93e97d">0.670</b><b style="background:#95e87e">0.726</b><b style="background:#96e77e">0.771</b><b style="background:#97e77e">0.822</b><b style="background:#99e67e">0.864</b><b style="background:#9be57f">0.942</b><b style="background:#a0e380">1.115</b><b style="background:#a4e180">1.231</b><b style="background:#addd82">1.552</b><b style="background:#b8d784">1.919</b><b style="background:#c4cf86">2.215</b><b style="background:#d3c287">2.571</b><b style="background:#dfb688">2.860</b><b style="background:#e8a886">3.238</b><b style="background:#f09882">3.729</b><b style="background:#f29482">3.865</b><b style="background:#f49181">3.971</b><b style="background:#f68e80">4.084</b><b style="background:#f68e80">4.084</b></div>
<div class="drow"><span class="rh">9600</span><b style="background:#8cec7c">0.078</b><b style="background:#8cec7c">0.107</b><b style="background:#8cec7c">0.152</b><b style="background:#8cec7c">0.220</b><b style="background:#8cec7c">0.266</b><b style="background:#8cec7c">0.314</b><b style="background:#8cec7c">0.356</b><b style="background:#8cec7c">0.398</b><b style="background:#8cec7c">0.450</b><b style="background:#8eeb7c">0.505</b><b style="background:#8feb7d">0.542</b><b style="background:#90ea7d">0.581</b><b style="background:#92e97d">0.628</b><b style="background:#93e97d">0.666</b><b style="background:#94e87d">0.710</b><b style="background:#95e87e">0.745</b><b style="background:#97e77e">0.812</b><b style="background:#9ce57f">0.959</b><b style="background:#9ee37f">1.057</b><b style="background:#a6e081">1.329</b><b style="background:#b0db82">1.641</b><b style="background:#bdd485">2.041</b><b style="background:#d0c587">2.494</b><b style="background:#ddb888">2.818</b><b style="background:#e6ac87">3.146</b><b style="background:#eca084">3.458</b><b style="background:#f09882">3.733</b><b style="background:#f39381">3.905</b><b style="background:#f68e80">4.081</b><b style="background:#f68e80">4.081</b></div>
<div class="drow"><span class="rh">10000</span><b style="background:#8cec7c">0.078</b><b style="background:#8cec7c">0.106</b><b style="background:#8cec7c">0.149</b><b style="background:#8cec7c">0.213</b><b style="background:#8cec7c">0.257</b><b style="background:#8cec7c">0.303</b><b style="background:#8cec7c">0.343</b><b style="background:#8cec7c">0.383</b><b style="background:#8cec7c">0.432</b><b style="background:#8deb7c">0.485</b><b style="background:#8eeb7c">0.520</b><b style="background:#90ea7d">0.557</b><b style="background:#91ea7d">0.603</b><b style="background:#92e97d">0.639</b><b style="background:#93e97d">0.680</b><b style="background:#94e87d">0.714</b><b style="background:#96e77e">0.777</b><b style="background:#9ae57f">0.917</b><b style="background:#9de47f">1.011</b><b style="background:#a5e080">1.271</b><b style="background:#aedc82">1.568</b><b style="background:#b7d884">1.903</b><b style="background:#c6ce86">2.246</b><b style="background:#d2c387">2.540</b><b style="background:#e4af87">3.036</b><b style="background:#eaa385">3.384</b><b style="background:#ec9f84">3.504</b><b style="background:#ee9c83">3.620</b><b style="background:#f09983">3.724</b><b style="background:#f09983">3.724</b></div>
<div class="drow"><span class="rh">10400</span><b style="background:#8cec7c">0.078</b><b style="background:#8cec7c">0.107</b><b style="background:#8cec7c">0.152</b><b style="background:#8cec7c">0.220</b><b style="background:#8cec7c">0.266</b><b style="background:#8cec7c">0.314</b><b style="background:#8cec7c">0.356</b><b style="background:#8cec7c">0.398</b><b style="background:#8cec7c">0.449</b><b style="background:#8eeb7c">0.505</b><b style="background:#8feb7d">0.541</b><b style="background:#90ea7d">0.580</b><b style="background:#92e97d">0.628</b><b style="background:#93e97d">0.666</b><b style="background:#94e87d">0.709</b><b style="background:#95e87e">0.745</b><b style="background:#97e77e">0.811</b><b style="background:#9be57f">0.958</b><b style="background:#9ee37f">1.056</b><b style="background:#a6e081">1.328</b><b style="background:#b0db82">1.640</b><b style="background:#b6d883">1.853</b><b style="background:#bdd485">2.043</b><b style="background:#cdc887">2.421</b><b style="background:#deb788">2.847</b><b style="background:#e8a886">3.234</b><b style="background:#eaa485">3.348</b><b style="background:#eca084">3.466</b><b style="background:#ed9e84">3.554</b><b style="background:#ed9e84">3.554</b></div>
<div class="drow"><span class="rh">10800</span><b style="background:#8cec7c">0.078</b><b style="background:#8cec7c">0.110</b><b style="background:#8cec7c">0.160</b><b style="background:#8cec7c">0.234</b><b style="background:#8cec7c">0.285</b><b style="background:#8cec7c">0.338</b><b style="background:#8cec7c">0.384</b><b style="background:#8cec7c">0.430</b><b style="background:#8eeb7c">0.487</b><b style="background:#8fea7d">0.548</b><b style="background:#91ea7d">0.588</b><b style="background:#92e97d">0.631</b><b style="background:#93e97d">0.683</b><b style="background:#95e87e">0.725</b><b style="background:#96e77e">0.773</b><b style="background:#97e77e">0.812</b><b style="background:#99e67e">0.885</b><b style="background:#9ee47f">1.046</b><b style="background:#a1e280">1.154</b><b style="background:#aade81">1.454</b><b style="background:#b4d983">1.797</b><b style="background:#b9d784">1.949</b><b style="background:#bed385">2.081</b><b style="background:#c5ce86">2.230</b><b style="background:#dbba88">2.756</b><b style="background:#e7aa86">3.178</b><b style="background:#e9a685">3.312</b><b style="background:#eba284">3.429</b><b style="background:#ed9f84">3.517</b><b style="background:#ed9f84">3.517</b></div>
<div class="drow"><span class="rh">11200</span><b style="background:#8cec7c">0.078</b><b style="background:#8cec7c">0.110</b><b style="background:#8cec7c">0.160</b><b style="background:#8cec7c">0.234</b><b style="background:#8cec7c">0.285</b><b style="background:#8cec7c">0.338</b><b style="background:#8cec7c">0.384</b><b style="background:#8cec7c">0.430</b><b style="background:#8eeb7c">0.487</b><b style="background:#8fea7d">0.548</b><b style="background:#91ea7d">0.588</b><b style="background:#92e97d">0.631</b><b style="background:#93e97d">0.683</b><b style="background:#95e87e">0.725</b><b style="background:#96e77e">0.773</b><b style="background:#97e77e">0.812</b><b style="background:#99e67e">0.885</b><b style="background:#9ee47f">1.046</b><b style="background:#a1e280">1.154</b><b style="background:#aade81">1.454</b><b style="background:#b4d983">1.797</b><b style="background:#b9d784">1.944</b><b style="background:#bed385">2.081</b><b style="background:#c4cf86">2.202</b><b style="background:#d8bd88">2.696</b><b style="background:#e7aa86">3.178</b><b style="background:#e9a685">3.312</b><b style="background:#eba284">3.429</b><b style="background:#ed9f84">3.517</b><b style="background:#ed9f84">3.517</b></div>
<div class="drow"><span class="rh">11600</span><b style="background:#8cec7c">0.078</b><b style="background:#8cec7c">0.110</b><b style="background:#8cec7c">0.160</b><b style="background:#8cec7c">0.234</b><b style="background:#8cec7c">0.285</b><b style="background:#8cec7c">0.338</b><b style="background:#8cec7c">0.384</b><b style="background:#8cec7c">0.430</b><b style="background:#8eeb7c">0.487</b><b style="background:#8fea7d">0.548</b><b style="background:#91ea7d">0.588</b><b style="background:#92e97d">0.631</b><b style="background:#93e97d">0.683</b><b style="background:#95e87e">0.725</b><b style="background:#96e77e">0.773</b><b style="background:#97e77e">0.812</b><b style="background:#99e67e">0.885</b><b style="background:#9ee47f">1.046</b><b style="background:#a1e280">1.154</b><b style="background:#aade81">1.454</b><b style="background:#b4d983">1.797</b><b style="background:#b9d784">1.944</b><b style="background:#bed385">2.081</b><b style="background:#c4cf86">2.202</b><b style="background:#d8bd88">2.696</b><b style="background:#e7aa86">3.178</b><b style="background:#e9a685">3.312</b><b style="background:#eba284">3.429</b><b style="background:#ed9f84">3.517</b><b style="background:#ed9f84">3.517</b></div>
<div class="drow"><span class="rh">12000</span><b style="background:#8cec7c">0.078</b><b style="background:#8cec7c">0.110</b><b style="background:#8cec7c">0.160</b><b style="background:#8cec7c">0.234</b><b style="background:#8cec7c">0.285</b><b style="background:#8cec7c">0.338</b><b style="background:#8cec7c">0.384</b><b style="background:#8cec7c">0.430</b><b style="background:#8eeb7c">0.487</b><b style="background:#8fea7d">0.548</b><b style="background:#91ea7d">0.588</b><b style="background:#92e97d">0.631</b><b style="background:#93e97d">0.683</b><b style="background:#95e87e">0.725</b><b style="background:#96e77e">0.773</b><b style="background:#97e77e">0.812</b><b style="background:#99e67e">0.885</b><b style="background:#9ee47f">1.046</b><b style="background:#a1e280">1.154</b><b style="background:#aade81">1.454</b><b style="background:#b4d983">1.797</b><b style="background:#b9d784">1.944</b><b style="background:#bed385">2.081</b><b style="background:#c4cf86">2.202</b><b style="background:#d8bd88">2.696</b><b style="background:#e7aa86">3.178</b><b style="background:#e9a685">3.312</b><b style="background:#eba284">3.429</b><b style="background:#ed9f84">3.517</b><b style="background:#ed9f84">3.517</b></div>
<div class="drow"><span class="rh">13000</span><b style="background:#8cec7c">0.078</b><b style="background:#8cec7c">0.110</b><b style="background:#8cec7c">0.160</b><b style="background:#8cec7c">0.234</b><b style="background:#8cec7c">0.285</b><b style="background:#8cec7c">0.338</b><b style="background:#8cec7c">0.384</b><b style="background:#8cec7c">0.430</b><b style="background:#8eeb7c">0.487</b><b style="background:#8fea7d">0.548</b><b style="background:#91ea7d">0.588</b><b style="background:#92e97d">0.631</b><b style="background:#93e97d">0.683</b><b style="background:#95e87e">0.725</b><b style="background:#96e77e">0.773</b><b style="background:#97e77e">0.812</b><b style="background:#99e67e">0.885</b><b style="background:#9ee47f">1.046</b><b style="background:#a1e280">1.154</b><b style="background:#aade81">1.454</b><b style="background:#b4d983">1.797</b><b style="background:#b9d784">1.944</b><b style="background:#bed385">2.081</b><b style="background:#c4cf86">2.202</b><b style="background:#d8bd88">2.696</b><b style="background:#e7aa86">3.178</b><b style="background:#e9a685">3.312</b><b style="background:#eba284">3.429</b><b style="background:#ed9f84">3.517</b><b style="background:#ed9f84">3.517</b></div>
<div class="drow"><span class="rh">14000</span><b style="background:#8cec7c">0.078</b><b style="background:#8cec7c">0.110</b><b style="background:#8cec7c">0.160</b><b style="background:#8cec7c">0.234</b><b style="background:#8cec7c">0.285</b><b style="background:#8cec7c">0.338</b><b style="background:#8cec7c">0.384</b><b style="background:#8cec7c">0.430</b><b style="background:#8eeb7c">0.487</b><b style="background:#8fea7d">0.548</b><b style="background:#91ea7d">0.588</b><b style="background:#92e97d">0.631</b><b style="background:#93e97d">0.683</b><b style="background:#95e87e">0.725</b><b style="background:#96e77e">0.773</b><b style="background:#97e77e">0.812</b><b style="background:#99e67e">0.885</b><b style="background:#9ee47f">1.046</b><b style="background:#a1e280">1.154</b><b style="background:#aade81">1.454</b><b style="background:#b4d983">1.797</b><b style="background:#b9d784">1.944</b><b style="background:#bfd385">2.083</b><b style="background:#c4cf86">2.205</b><b style="background:#d8bd88">2.696</b><b style="background:#e7aa86">3.178</b><b style="background:#e9a685">3.312</b><b style="background:#eba284">3.429</b><b style="background:#ed9f84">3.517</b><b style="background:#ed9f84">3.517</b></div>
<div class="drow"><span class="rh">15000</span><b style="background:#8cec7c">0.078</b><b style="background:#8cec7c">0.110</b><b style="background:#8cec7c">0.160</b><b style="background:#8cec7c">0.234</b><b style="background:#8cec7c">0.285</b><b style="background:#8cec7c">0.338</b><b style="background:#8cec7c">0.384</b><b style="background:#8cec7c">0.430</b><b style="background:#8eeb7c">0.487</b><b style="background:#8fea7d">0.548</b><b style="background:#91ea7d">0.588</b><b style="background:#92e97d">0.631</b><b style="background:#93e97d">0.683</b><b style="background:#95e87e">0.725</b><b style="background:#96e77e">0.773</b><b style="background:#97e77e">0.812</b><b style="background:#99e67e">0.885</b><b style="background:#9ee47f">1.046</b><b style="background:#a1e280">1.154</b><b style="background:#aade81">1.454</b><b style="background:#b4d983">1.797</b><b style="background:#b9d784">1.944</b><b style="background:#bfd385">2.083</b><b style="background:#c4cf86">2.205</b><b style="background:#d8bd88">2.696</b><b style="background:#e7aa86">3.178</b><b style="background:#e9a685">3.312</b><b style="background:#eba284">3.429</b><b style="background:#ed9f84">3.517</b><b style="background:#ed9f84">3.517</b></div>
<div class="drow"><span class="rh">16000</span><b style="background:#8cec7c">0.078</b><b style="background:#8cec7c">0.110</b><b style="background:#8cec7c">0.160</b><b style="background:#8cec7c">0.234</b><b style="background:#8cec7c">0.285</b><b style="background:#8cec7c">0.338</b><b style="background:#8cec7c">0.384</b><b style="background:#8cec7c">0.430</b><b style="background:#8eeb7c">0.487</b><b style="background:#8fea7d">0.548</b><b style="background:#91ea7d">0.588</b><b style="background:#92e97d">0.631</b><b style="background:#93e97d">0.683</b><b style="background:#95e87e">0.725</b><b style="background:#96e77e">0.773</b><b style="background:#97e77e">0.812</b><b style="background:#99e67e">0.885</b><b style="background:#9ee47f">1.046</b><b style="background:#a1e280">1.154</b><b style="background:#aade81">1.454</b><b style="background:#b4d983">1.797</b><b style="background:#b9d784">1.944</b><b style="background:#bfd385">2.083</b><b style="background:#c4cf86">2.205</b><b style="background:#d8bd88">2.696</b><b style="background:#e7aa86">3.178</b><b style="background:#e9a685">3.312</b><b style="background:#eba284">3.429</b><b style="background:#ed9f84">3.517</b><b style="background:#ed9f84">3.517</b></div>
</div>
</div>
<div id="status"><i style="left:73px;top:2px;width:1px;height:19px;background:#d0d0d0"></i>
<svg style="position:absolute;right:2px;bottom:2px" width="10" height="10" viewBox="0 0 10 10"><g fill="#b0b0b0"><rect x="7" y="1" width="2" height="2"/><rect x="4" y="4" width="2" height="2"/><rect x="7" y="4" width="2" height="2"/><rect x="1" y="7" width="2" height="2"/><rect x="4" y="7" width="2" height="2"/><rect x="7" y="7" width="2" height="2"/></g></svg></div>
</div>
<div id="mdi"></div>
<div id="gw">
<svg style="position:absolute;left:9px;top:9px" width="17" height="13" viewBox="0 0 17 13"><rect x="0" y="2.5" width="17" height="8" fill="#000"/><g fill="#000"><rect x="1.5" y="0" width="1.6" height="13"/><rect x="4.6" y="0" width="1.6" height="13"/><rect x="7.7" y="0" width="1.6" height="13"/><rect x="10.8" y="0" width="1.6" height="13"/><rect x="13.9" y="0" width="1.6" height="13"/></g></svg>
<div class="cap">Fuel by RPM and Throttle cyl 1</div>
<svg style="position:absolute;left:840px;top:8px" width="110" height="14" viewBox="0 0 110 14"><path d="M2.5 7.5H13.5" stroke="#000" stroke-width="1"/><rect x="49.5" y="1.5" width="9" height="9" fill="none" stroke="#000" stroke-width="1"/><path d="M95 1.5L105 11.5M105 1.5L95 11.5" stroke="#000" stroke-width="1.1"/></svg>
<span class="menu" style="left:7px">Graph</span><span class="menu" style="left:53px">View</span>
<div id="gtb">
<i style="left:3px;top:5px;width:1px;height:21px;background:#b9b9b9"></i>
<svg style="position:absolute;left:12px;top:10px" width="14" height="14" viewBox="0 0 14 14"><path d="M1.5 1L12 13M12.5 1L1.5 13" stroke="#d01818" stroke-width="1.9" fill="none"/></svg>
<i style="left:39px;top:5px;width:1px;height:21px;background:#b9b9b9"></i>
<i style="left:45px;top:4px;width:23px;height:22px;background:#9eb6ce"></i>
<svg style="position:absolute;left:48px;top:7px" width="17" height="17" viewBox="0 0 17 17"><path d="M8.5 0.5L11.5 4H5.5ZM8.5 16.5L11.5 13H5.5ZM0.5 8.5L4 5.5V11.5ZM16.5 8.5L13 5.5V11.5Z" fill="#000"/><circle cx="8.5" cy="8.5" r="3.6" fill="#fff" stroke="#000" stroke-width="1.3"/><path d="M8.5 4V13M4 8.5H13" stroke="#c01010" stroke-width="1.2"/></svg>
<svg style="position:absolute;left:70px;top:8px" width="20" height="16" viewBox="0 0 20 16"><path d="M1 13L4 7L7 11L11 4L14 8L18 1" stroke="#2a2ab0" stroke-width="1.3" fill="none"/><path d="M2 14Q5 4 8 12T14 6T18 5" stroke="#7a1a9a" stroke-width="1.1" fill="none"/><circle cx="17" cy="2.5" r="1.6" fill="none" stroke="#2a2ab0" stroke-width="1"/></svg>
<i style="left:91px;top:4px;width:23px;height:22px;background:#cfe3f7"></i>
<svg style="position:absolute;left:93px;top:8px" width="20" height="16" viewBox="0 0 20 16"><path d="M1.5 1V13.5H18" stroke="#1a1a8a" stroke-width="1.2" fill="none" stroke-dasharray="1.5 1"/><path d="M3 10L6 6L9 9L13 3L17 7" stroke="#2a2ab0" stroke-width="1.3" fill="none"/><path d="M3 12L7 8L10 11L14 6L18 9" stroke="#d01818" stroke-width="1.3" fill="none"/></svg>
<svg style="position:absolute;left:116px;top:9px" width="20" height="14" viewBox="0 0 20 14"><path d="M7 1H18L15 5H4ZM4 5L1 12H13L15 5M1 12H16L18 8" stroke="#000" stroke-width="1.3" fill="#fff"/></svg>
<i style="left:138px;top:4px;width:23px;height:22px;background:#9eb6ce"></i>
<svg style="position:absolute;left:141px;top:8px" width="18" height="16" viewBox="0 0 18 16"><rect x="1" y="2" width="13" height="12" fill="#fff"/><path d="M1 3.5H13" stroke="#d03030" stroke-width="1.6"/><path d="M1 6.5H13" stroke="#e0c020" stroke-width="1.6"/><path d="M1 9.5H13" stroke="#30b040" stroke-width="1.6"/><path d="M1 12.5H13" stroke="#2040c0" stroke-width="1.6"/><path d="M13 3L16.5 1V15L13 13" fill="none" stroke="#000" stroke-width="1.1"/></svg>
</div>
<div id="gstat"><i style="left:128px;top:2px;width:1px;height:18px;background:#d4d4d4"></i><i style="left:258px;top:2px;width:1px;height:18px;background:#d4d4d4"></i><i style="left:388px;top:2px;width:1px;height:18px;background:#d4d4d4"></i><svg style="position:absolute;right:2px;bottom:2px" width="10" height="10" viewBox="0 0 10 10"><g fill="#b0b0b0"><rect x="7" y="1" width="2" height="2"/><rect x="4" y="4" width="2" height="2"/><rect x="7" y="4" width="2" height="2"/><rect x="1" y="7" width="2" height="2"/><rect x="4" y="7" width="2" height="2"/><rect x="7" y="7" width="2" height="2"/></g></svg></div>
<svg id="chart" style="position:absolute;left:0;top:75px" width="962" height="456" viewBox="470 382 962 456" font-family="Liberation Sans, sans-serif">
<g fill="none" stroke="#555" stroke-width="0.8"><path d="M779.5,757.0L779.8,503.3L881.5,436.2L1123.8,465.5L1123.5,718.5M881.5,436.2L881.5,691.5"/></g>
<g fill="none" stroke="#666" stroke-width="0.8" stroke-dasharray="4 3"><path d="M779.6,706.3L881.5,640.4L1123.6,667.9"/><path d="M779.6,655.2L881.5,589.1L1123.6,617.0"/><path d="M779.7,604.8L881.5,538.3L1123.7,566.7"/><path d="M779.7,553.8L881.5,487.0L1123.7,515.8"/></g>
<path d="M779.5,757.0L1026.0,784.0L1123.5,718.5L881.5,691.5Z" fill="#fff" stroke="#777" stroke-width="0.7"/>
<g fill="none" stroke="#6a6a6a" stroke-width="0.8"><path d="M1026.0,784.0L1123.5,718.5M1024.4,783.8L1121.9,718.3M1022.8,783.6L1120.3,718.1M1021.1,783.5L1118.7,718.0M1019.5,783.3L1117.1,717.8M1017.9,783.1L1115.5,717.6M1016.3,782.9L1113.9,717.4M1014.6,782.8L1112.4,717.3M1013.0,782.6L1110.8,717.1M1011.4,782.4L1109.2,716.9M1009.8,782.2L1107.6,716.7M1008.2,782.0L1106.0,716.5M1006.5,781.9L1104.4,716.4M1003.3,781.5L1101.2,716.0M1000.1,781.2L1098.0,715.7M996.8,780.8L1094.8,715.3M993.6,780.4L1091.7,714.9M990.3,780.1L1088.5,714.6M987.1,779.7L1085.3,714.2M983.8,779.4L1082.1,713.9M980.6,779.0L1078.9,713.5M977.3,778.7L1075.7,713.2M974.1,778.3L1072.6,712.8M970.9,778.0L1069.4,712.5M967.6,777.6L1066.2,712.1M964.4,777.2L1063.0,711.8M961.1,776.9L1059.8,711.4M954.6,776.2L1053.4,710.7M948.2,775.5L1047.1,710.0M944.9,775.1L1043.9,709.6M941.7,774.8L1040.7,709.3M935.2,774.1L1034.3,708.6M928.7,773.3L1028.0,707.8M922.2,772.6L1021.6,707.1M915.7,771.9L1015.2,706.4M909.2,771.2L1008.9,705.7M902.8,770.5L1002.5,705.0M896.3,769.8L996.1,704.3M889.8,769.1L989.8,703.6M883.3,768.4L983.4,702.9M876.8,767.7L977.0,702.2M870.3,766.9L970.7,701.4M863.8,766.2L964.3,700.7M857.3,765.5L957.9,700.0M850.9,764.8L951.6,699.3M844.4,764.1L945.2,698.6M828.2,762.3L929.3,696.8M811.9,760.6L913.3,695.1M795.7,758.8L897.4,693.3M779.5,757.0L881.5,691.5M779.5,757.0L1026.0,784.0M780.1,756.6L1026.6,783.6M780.7,756.2L1027.2,783.2M781.4,755.8L1027.8,782.8M782.0,755.4L1028.4,782.4M782.6,755.0L1029.0,782.0M783.2,754.6L1029.5,781.6M783.8,754.2L1030.1,781.2M784.4,753.8L1030.7,780.8M785.1,753.4L1031.3,780.4M785.7,753.0L1031.9,780.0M786.3,752.6L1032.5,779.6M786.9,752.2L1033.1,779.2M788.2,751.4L1034.3,778.4M789.4,750.7L1035.5,777.7M790.6,749.9L1036.6,776.9M791.9,749.1L1037.8,776.1M793.1,748.3L1039.0,775.3M798.0,745.1L1043.7,772.1M803.0,741.9L1048.5,768.9M807.9,738.7L1053.2,765.7M812.9,735.6L1057.9,762.6M822.8,729.2L1067.4,756.2M832.7,722.9L1076.8,749.9M842.5,716.5L1086.3,743.5M852.4,710.2L1095.7,737.2M862.3,703.8L1105.2,730.8M872.6,697.2L1115.0,724.2M881.5,691.5L1123.5,718.5"/></g>
<g stroke="#000" stroke-width="0.75" stroke-linejoin="round">
<path fill="#f8ff19" d="M888.6,512.0L872.7,510.1L881.5,499.4L897.4,501.3Z"/><path fill="#f8ff19" d="M904.6,513.9L888.6,512.0L897.4,501.3L913.4,503.2Z"/><path fill="#f8ff19" d="M920.5,515.7L904.6,513.9L913.4,503.2L929.3,505.1Z"/><path fill="#f8ff19" d="M936.5,517.6L920.5,515.7L929.3,505.1L945.2,507.0Z"/><path fill="#e3ff19" d="M878.3,525.2L862.4,523.4L872.7,510.1L888.6,512.0Z"/><path fill="#f8ff19" d="M942.9,518.3L936.5,517.6L945.2,507.0L951.6,507.7Z"/><path fill="#f8ff19" d="M949.3,519.1L942.9,518.3L951.6,507.7L958.0,508.5Z"/><path fill="#e3ff19" d="M894.3,527.1L878.3,525.2L888.6,512.0L904.6,513.9Z"/><path fill="#f8ff19" d="M955.6,519.8L949.3,519.1L958.0,508.5L964.4,509.3Z"/><path fill="#fcff19" d="M962.0,518.5L955.6,519.8L964.4,509.3L970.7,508.0Z"/><path fill="#ffee19" d="M968.4,510.7L962.0,518.5L970.7,508.0L977.1,499.3Z"/><path fill="#e3ff19" d="M910.3,528.9L894.3,527.1L904.6,513.9L920.5,515.7Z"/><path fill="#ffbe19" d="M974.8,495.6L968.4,510.7L977.1,499.3L983.5,480.2Z"/><path fill="#ff9a19" d="M981.2,492.7L974.8,495.6L983.5,480.2L989.9,480.8Z"/><path fill="#e3ff19" d="M926.3,530.8L910.3,528.9L920.5,515.7L936.5,517.6Z"/><path fill="#ff9019" d="M987.6,491.5L981.2,492.7L989.9,480.8L996.3,476.1Z"/><path fill="#ff8119" d="M994.0,488.2L987.6,491.5L996.3,476.1L1002.6,472.0Z"/><path fill="#caff19" d="M868.5,539.1L852.5,537.3L862.4,523.4L878.3,525.2Z"/><path fill="#e3ff19" d="M932.7,531.5L926.3,530.8L936.5,517.6L942.9,518.3Z"/><path fill="#ff6f19" d="M1000.4,481.6L994.0,488.2L1002.6,472.0L1009.0,469.1Z"/><path fill="#e3ff19" d="M939.1,532.2L932.7,531.5L942.9,518.3L949.3,519.1Z"/><path fill="#ff4a19" d="M1006.7,469.3L1000.4,481.6L1009.0,469.1L1015.4,453.4Z"/><path fill="#e3ff19" d="M945.5,533.0L939.1,532.2L949.3,519.1L955.6,519.8Z"/><path fill="#ff2c19" d="M1013.1,467.3L1006.7,469.3L1015.4,453.4L1021.8,453.1Z"/><path fill="#caff19" d="M884.5,541.0L868.5,539.1L878.3,525.2L894.3,527.1Z"/><path fill="#e7ff19" d="M951.9,531.7L945.5,533.0L955.6,519.8L962.0,518.5Z"/><path fill="#ff3b19" d="M1019.5,477.3L1013.1,467.3L1021.8,453.1L1028.1,465.0Z"/><path fill="#faff19" d="M958.3,523.8L951.9,531.7L962.0,518.5L968.4,510.7Z"/><path fill="#ff5319" d="M1025.9,481.4L1019.5,477.3L1028.1,465.0L1034.5,468.4Z"/><path fill="#caff19" d="M900.5,542.8L884.5,541.0L894.3,527.1L910.3,528.9Z"/><path fill="#ffda19" d="M964.7,511.8L958.3,523.8L968.4,510.7L974.8,495.6Z"/><path fill="#ff6419" d="M1032.3,487.4L1025.9,481.4L1034.5,468.4L1040.9,476.7Z"/><path fill="#ffb719" d="M971.1,505.2L964.7,511.8L974.8,495.6L981.2,492.7Z"/><path fill="#ff6e19" d="M1035.5,486.7L1032.3,487.4L1040.9,476.7L1044.1,476.1Z"/><path fill="#ff8119" d="M1038.7,497.3L1035.5,486.7L1044.1,476.1L1047.3,489.5Z"/><path fill="#ffac19" d="M977.5,507.6L971.1,505.2L981.2,492.7L987.6,491.5Z"/><path fill="#ff8819" d="M1045.0,491.4L1038.7,497.3L1047.3,489.5L1053.6,481.5Z"/><path fill="#caff19" d="M916.5,544.6L900.5,542.8L910.3,528.9L926.3,530.8Z"/><path fill="#ffa619" d="M983.9,505.3L977.5,507.6L987.6,491.5L994.0,488.2Z"/><path fill="#ff8d19" d="M1051.4,500.6L1045.0,491.4L1053.6,481.5L1060.0,494.9Z"/><path fill="#8cff19" d="M858.6,572.4L842.6,570.6L852.5,537.3L868.5,539.1Z"/><path fill="#ff8f19" d="M990.3,495.7L983.9,505.3L994.0,488.2L1000.4,481.6Z"/><path fill="#ff9519" d="M1054.6,497.6L1051.4,500.6L1060.0,494.9L1063.2,486.1Z"/><path fill="#caff19" d="M922.9,545.3L916.5,544.6L926.3,530.8L932.7,531.5Z"/><path fill="#ff9d19" d="M1057.8,507.1L1054.6,497.6L1063.2,486.1L1066.4,499.4Z"/><path fill="#ff6a19" d="M996.7,486.0L990.3,495.7L1000.4,481.6L1006.7,469.3Z"/><path fill="#ffa619" d="M1061.0,501.7L1057.8,507.1L1066.4,499.4L1069.6,493.4Z"/><path fill="#caff19" d="M929.3,546.1L922.9,545.3L932.7,531.5L939.1,532.2Z"/><path fill="#ffa019" d="M1064.2,504.0L1061.0,501.7L1069.6,493.4L1072.8,497.2Z"/><path fill="#ff4f19" d="M1003.1,483.3L996.7,486.0L1006.7,469.3L1013.1,467.3Z"/><path fill="#ffa919" d="M1067.4,506.3L1064.2,504.0L1072.8,497.2L1075.9,500.4Z"/><path fill="#caff19" d="M935.7,546.8L929.3,546.1L939.1,532.2L945.5,533.0Z"/><path fill="#8cff19" d="M874.7,574.2L858.6,572.4L868.5,539.1L884.5,541.0Z"/><path fill="#ffb419" d="M1070.6,510.9L1067.4,506.3L1075.9,500.4L1079.1,503.8Z"/><path fill="#ff5a19" d="M1009.5,492.6L1003.1,483.3L1013.1,467.3L1019.5,477.3Z"/><path fill="#ffb819" d="M1073.8,510.4L1070.6,510.9L1079.1,503.8L1082.3,502.1Z"/><path fill="#cfff19" d="M942.2,544.4L935.7,546.8L945.5,533.0L951.9,531.7Z"/><path fill="#ffb519" d="M1076.9,509.7L1073.8,510.4L1082.3,502.1L1085.5,502.5Z"/><path fill="#ff6f19" d="M1015.8,496.2L1009.5,492.6L1019.5,477.3L1025.9,481.4Z"/><path fill="#ffb319" d="M1080.1,509.5L1076.9,509.7L1085.5,502.5L1088.7,502.3Z"/><path fill="#e3ff19" d="M948.6,536.8L942.2,544.4L951.9,531.7L958.3,523.8Z"/><path fill="#ffc619" d="M1083.3,521.7L1080.1,509.5L1088.7,502.3L1091.9,513.4Z"/><path fill="#8cff19" d="M890.7,576.0L874.7,574.2L884.5,541.0L900.5,542.8Z"/><path fill="#ff7b19" d="M1022.2,498.0L1015.8,496.2L1025.9,481.4L1032.3,487.4Z"/><path fill="#ffda19" d="M1086.5,521.4L1083.3,521.7L1091.9,513.4L1095.1,514.2Z"/><path fill="#fffd19" d="M955.0,533.4L948.6,536.8L958.3,523.8L964.7,511.8Z"/><path fill="#ffe619" d="M1089.7,527.7L1086.5,521.4L1095.1,514.2L1098.2,522.0Z"/><path fill="#ff7f19" d="M1025.4,497.7L1022.2,498.0L1032.3,487.4L1035.5,486.7Z"/><path fill="#fff419" d="M1092.9,529.3L1089.7,527.7L1098.2,522.0L1101.4,523.3Z"/><path fill="#ffd919" d="M961.4,519.1L955.0,533.4L964.7,511.8L971.1,505.2Z"/><path fill="#ff8e19" d="M1028.6,506.7L1025.4,497.7L1035.5,486.7L1038.7,497.3Z"/><path fill="#fff819" d="M1096.1,530.7L1092.9,529.3L1101.4,523.3L1104.6,525.1Z"/><path fill="#f0ff19" d="M1097.7,542.4L1096.1,530.7L1104.6,525.1L1106.2,535.4Z"/><path fill="#ff9419" d="M1035.0,501.9L1028.6,506.7L1038.7,497.3L1045.0,491.4Z"/><path fill="#ffc419" d="M967.8,517.3L961.4,519.1L971.1,505.2L977.5,507.6Z"/><path fill="#e6ff19" d="M1099.3,536.5L1097.7,542.4L1106.2,535.4L1107.8,530.9Z"/><path fill="#8cff19" d="M906.8,577.8L890.7,576.0L900.5,542.8L916.5,544.6Z"/><path fill="#fcff19" d="M1100.9,530.2L1099.3,536.5L1107.8,530.9L1109.4,524.6Z"/><path fill="#ffdc19" d="M1102.5,518.3L1100.9,530.2L1109.4,524.6L1111.0,507.7Z"/><path fill="#ffc019" d="M1104.1,517.2L1102.5,518.3L1111.0,507.7L1112.6,507.9Z"/><path fill="#ff9919" d="M1041.4,511.5L1035.0,501.9L1045.0,491.4L1051.4,500.6Z"/><path fill="#ffc319" d="M974.2,521.0L967.8,517.3L977.5,507.6L983.9,505.3Z"/><path fill="#ffc019" d="M1105.7,518.5L1104.1,517.2L1112.6,507.9L1114.2,507.9Z"/><path fill="#ffc319" d="M1107.3,520.6L1105.7,518.5L1114.2,507.9L1115.8,508.8Z"/><path fill="#ffc819" d="M1108.9,521.3L1107.3,520.6L1115.8,508.8L1117.4,511.3Z"/><path fill="#ffa219" d="M1044.6,508.1L1041.4,511.5L1051.4,500.6L1054.6,497.6Z"/><path fill="#2aff19" d="M848.8,606.1L832.7,604.4L842.6,570.6L858.6,572.4Z"/><path fill="#ffd419" d="M1110.5,526.7L1108.9,521.3L1117.4,511.3L1119.0,516.7Z"/><path fill="#8cff19" d="M913.2,578.5L906.8,577.8L916.5,544.6L922.9,545.3Z"/><path fill="#ffaf19" d="M980.6,509.6L974.2,521.0L983.9,505.3L990.3,495.7Z"/><path fill="#ffdf19" d="M1112.0,526.9L1110.5,526.7L1119.0,516.7L1120.6,517.8Z"/><path fill="#ffaa19" d="M1047.8,515.6L1044.6,508.1L1054.6,497.6L1057.8,507.1Z"/><path fill="#ffe019" d="M1113.6,527.3L1112.0,526.9L1120.6,517.8L1122.1,518.7Z"/><path fill="#ffe219" d="M1115.2,528.1L1113.6,527.3L1122.1,518.7L1123.7,518.9Z"/><path fill="#ffaf19" d="M1051.0,511.0L1047.8,515.6L1057.8,507.1L1061.0,501.7Z"/><path fill="#8cff19" d="M919.6,579.2L913.2,578.5L922.9,545.3L929.3,546.1Z"/><path fill="#ff8819" d="M987.0,500.6L980.6,509.6L990.3,495.7L996.7,486.0Z"/><path fill="#ffa719" d="M1054.2,511.6L1051.0,511.0L1061.0,501.7L1064.2,504.0Z"/><path fill="#ffac19" d="M1057.4,513.2L1054.2,511.6L1064.2,504.0L1067.4,506.3Z"/><path fill="#8fff19" d="M926.0,576.6L919.6,579.2L929.3,546.1L935.7,546.8Z"/><path fill="#ff7019" d="M993.4,497.5L987.0,500.6L996.7,486.0L1003.1,483.3Z"/><path fill="#ffb819" d="M1060.6,519.3L1057.4,513.2L1067.4,506.3L1070.6,510.9Z"/><path fill="#2aff19" d="M864.8,607.9L848.8,606.1L858.6,572.4L874.7,574.2Z"/><path fill="#ffc219" d="M1063.8,520.9L1060.6,519.3L1070.6,510.9L1073.8,510.4Z"/><path fill="#9aff19" d="M932.4,572.3L926.0,576.6L935.7,546.8L942.2,544.4Z"/><path fill="#ff7819" d="M999.8,506.6L993.4,497.5L1003.1,483.3L1009.5,492.6Z"/><path fill="#ffbe19" d="M1067.0,517.6L1063.8,520.9L1073.8,510.4L1076.9,509.7Z"/><path fill="#ffb819" d="M1070.2,517.5L1067.0,517.6L1076.9,509.7L1080.1,509.5Z"/><path fill="#b2ff19" d="M938.8,562.5L932.4,572.3L942.2,544.4L948.6,536.8Z"/><path fill="#ff8a19" d="M1006.2,507.2L999.8,506.6L1009.5,492.6L1015.8,496.2Z"/><path fill="#ffcd19" d="M1073.4,530.2L1070.2,517.5L1080.1,509.5L1083.3,521.7Z"/><path fill="#ffe119" d="M1076.6,529.0L1073.4,530.2L1083.3,521.7L1086.5,521.4Z"/><path fill="#2aff19" d="M880.9,609.9L864.8,607.9L874.7,574.2L890.7,576.0Z"/><path fill="#ccff19" d="M945.3,557.1L938.8,562.5L948.6,536.8L955.0,533.4Z"/><path fill="#ff8f19" d="M1012.6,509.0L1006.2,507.2L1015.8,496.2L1022.2,498.0Z"/><path fill="#ffe919" d="M1079.8,534.5L1076.6,529.0L1086.5,521.4L1089.7,527.7Z"/><path fill="#fff619" d="M1083.0,536.4L1079.8,534.5L1089.7,527.7L1092.9,529.3Z"/><path fill="#ff8f19" d="M1015.8,508.5L1012.6,509.0L1022.2,498.0L1025.4,497.7Z"/><path fill="#e8ff19" d="M951.7,552.7L945.3,557.1L955.0,533.4L961.4,519.1Z"/><path fill="#fff919" d="M1086.2,537.2L1083.0,536.4L1092.9,529.3L1096.1,530.7Z"/><path fill="#ff9b19" d="M1019.0,514.8L1015.8,508.5L1025.4,497.7L1028.6,506.7Z"/><path fill="#edff19" d="M1087.8,550.0L1086.2,537.2L1096.1,530.7L1097.7,542.4Z"/><path fill="#e4ff19" d="M1089.4,543.0L1087.8,550.0L1097.7,542.4L1099.3,536.5Z"/><path fill="#ffff19" d="M958.1,550.7L951.7,552.7L961.4,519.1L967.8,517.3Z"/><path fill="#fbff19" d="M1091.0,536.7L1089.4,543.0L1099.3,536.5L1100.9,530.2Z"/><path fill="#ffa119" d="M1025.4,513.8L1019.0,514.8L1028.6,506.7L1035.0,501.9Z"/><path fill="#2aff19" d="M897.0,611.6L880.9,609.9L890.7,576.0L906.8,577.8Z"/><path fill="#ffe419" d="M1092.6,528.5L1091.0,536.7L1100.9,530.2L1102.5,518.3Z"/><path fill="#ffd019" d="M1094.2,528.1L1092.6,528.5L1102.5,518.3L1104.1,517.2Z"/><path fill="#ffd119" d="M1095.8,529.6L1094.2,528.1L1104.1,517.2L1105.7,518.5Z"/><path fill="#fff319" d="M964.5,539.7L958.1,550.7L967.8,517.3L974.2,521.0Z"/><path fill="#ffd619" d="M1097.4,531.4L1095.8,529.6L1105.7,518.5L1107.3,520.6Z"/><path fill="#ffa819" d="M1031.8,520.3L1025.4,513.8L1035.0,501.9L1041.4,511.5Z"/><path fill="#ffdc19" d="M1099.0,534.0L1097.4,531.4L1107.3,520.6L1108.9,521.3Z"/><path fill="#ffe819" d="M1100.6,538.9L1099.0,534.0L1108.9,521.3L1110.5,526.7Z"/><path fill="#19ff46" d="M838.9,619.3L822.8,617.6L832.7,604.4L848.8,606.1Z"/><path fill="#fff119" d="M1102.2,539.1L1100.6,538.9L1110.5,526.7L1112.0,526.9Z"/><path fill="#ffb019" d="M1035.0,518.7L1031.8,520.3L1041.4,511.5L1044.6,508.1Z"/><path fill="#2aff19" d="M903.4,612.4L897.0,611.6L906.8,577.8L913.2,578.5Z"/><path fill="#ffdd19" d="M970.9,537.4L964.5,539.7L974.2,521.0L980.6,509.6Z"/><path fill="#fff119" d="M1103.7,539.6L1102.2,539.1L1112.0,526.9L1113.6,527.3Z"/><path fill="#fff219" d="M1105.3,539.8L1103.7,539.6L1113.6,527.3L1115.2,528.1Z"/><path fill="#ffb619" d="M1038.2,524.0L1035.0,518.7L1044.6,508.1L1047.8,515.6Z"/><path fill="#ffb819" d="M1041.4,519.9L1038.2,524.0L1047.8,515.6L1051.0,511.0Z"/><path fill="#2aff19" d="M909.8,613.1L903.4,612.4L913.2,578.5L919.6,579.2Z"/><path fill="#ffc219" d="M977.3,533.0L970.9,537.4L980.6,509.6L987.0,500.6Z"/><path fill="#ffaf19" d="M1044.7,519.1L1041.4,519.9L1051.0,511.0L1054.2,511.6Z"/><path fill="#ffaf19" d="M1047.9,519.9L1044.7,519.1L1054.2,511.6L1057.4,513.2Z"/><path fill="#2fff19" d="M916.2,612.2L909.8,613.1L919.6,579.2L926.0,576.6Z"/><path fill="#ffae19" d="M983.8,530.2L977.3,533.0L987.0,500.6L993.4,497.5Z"/><path fill="#19ff46" d="M855.0,621.1L838.9,619.3L848.8,606.1L864.8,607.9Z"/><path fill="#ffbd19" d="M1051.1,527.5L1047.9,519.9L1057.4,513.2L1060.6,519.3Z"/><path fill="#ffcd19" d="M1054.3,531.1L1051.1,527.5L1060.6,519.3L1063.8,520.9Z"/><path fill="#41ff19" d="M922.7,602.3L916.2,612.2L926.0,576.6L932.4,572.3Z"/><path fill="#ffb019" d="M990.2,532.5L983.8,530.2L993.4,497.5L999.8,506.6Z"/><path fill="#ffc819" d="M1057.5,525.6L1054.3,531.1L1063.8,520.9L1067.0,517.6Z"/><path fill="#ffbe19" d="M1060.7,524.8L1057.5,525.6L1067.0,517.6L1070.2,517.5Z"/><path fill="#5fff19" d="M929.1,596.4L922.7,602.3L932.4,572.3L938.8,562.5Z"/><path fill="#ffb819" d="M996.6,531.8L990.2,532.5L999.8,506.6L1006.2,507.2Z"/><path fill="#ffd419" d="M1063.9,538.5L1060.7,524.8L1070.2,517.5L1073.4,530.2Z"/><path fill="#19ff46" d="M871.1,623.0L855.0,621.1L864.8,607.9L880.9,609.9Z"/><path fill="#ffe819" d="M1067.1,536.9L1063.9,538.5L1073.4,530.2L1076.6,529.0Z"/><path fill="#82ff19" d="M935.5,581.7L929.1,596.4L938.8,562.5L945.3,557.1Z"/><path fill="#ffb719" d="M1003.0,532.3L996.6,531.8L1006.2,507.2L1012.6,509.0Z"/><path fill="#ffec19" d="M1070.3,540.9L1067.1,536.9L1076.6,529.0L1079.8,534.5Z"/><path fill="#ffb819" d="M1006.2,533.5L1003.0,532.3L1012.6,509.0L1015.8,508.5Z"/><path fill="#fff719" d="M1073.5,543.2L1070.3,540.9L1079.8,534.5L1083.0,536.4Z"/><path fill="#9cff19" d="M942.0,580.0L935.5,581.7L945.3,557.1L951.7,552.7Z"/><path fill="#ffbe19" d="M1009.4,534.4L1006.2,533.5L1015.8,508.5L1019.0,514.8Z"/><path fill="#fffb19" d="M1076.7,543.4L1073.5,543.2L1083.0,536.4L1086.2,537.2Z"/><path fill="#ebff19" d="M1078.3,557.8L1076.7,543.4L1086.2,537.2L1087.8,550.0Z"/><path fill="#a2ff19" d="M948.4,584.5L942.0,580.0L951.7,552.7L958.1,550.7Z"/><path fill="#e1ff19" d="M1079.9,549.2L1078.3,557.8L1087.8,550.0L1089.4,543.0Z"/><path fill="#ffc119" d="M1015.8,533.9L1009.4,534.4L1019.0,514.8L1025.4,513.8Z"/><path fill="#19ff47" d="M887.2,624.7L871.1,623.0L880.9,609.9L897.0,611.6Z"/><path fill="#fbff19" d="M1081.5,542.9L1079.9,549.2L1089.4,543.0L1091.0,536.7Z"/><path fill="#ffea19" d="M1083.1,536.7L1081.5,542.9L1091.0,536.7L1092.6,528.5Z"/><path fill="#ffdd19" d="M1084.7,537.6L1083.1,536.7L1092.6,528.5L1094.2,528.1Z"/><path fill="#bdff19" d="M954.8,566.0L948.4,584.5L958.1,550.7L964.5,539.7Z"/><path fill="#ffe019" d="M1086.3,540.2L1084.7,537.6L1094.2,528.1L1095.8,529.6Z"/><path fill="#ffc619" d="M1022.3,538.0L1015.8,533.9L1025.4,513.8L1031.8,520.3Z"/><path fill="#ffe719" d="M1087.9,542.7L1086.3,540.2L1095.8,529.6L1097.4,531.4Z"/><path fill="#ffee19" d="M1089.5,544.1L1087.9,542.7L1097.4,531.4L1099.0,534.0Z"/><path fill="#19ff60" d="M829.1,633.5L813.0,631.7L822.8,617.6L838.9,619.3Z"/><path fill="#fffa19" d="M1091.1,548.9L1089.5,544.1L1099.0,534.0L1100.6,538.9Z"/><path fill="#ffcc19" d="M1025.5,537.1L1022.3,538.0L1031.8,520.3L1035.0,518.7Z"/><path fill="#19ff47" d="M893.6,625.5L887.2,624.7L897.0,611.6L903.4,612.4Z"/><path fill="#dcff19" d="M961.3,566.0L954.8,566.0L964.5,539.7L970.9,537.4Z"/><path fill="#fcff19" d="M1092.7,549.1L1091.1,548.9L1100.6,538.9L1102.2,539.1Z"/><path fill="#fcff19" d="M1094.3,549.3L1092.7,549.1L1102.2,539.1L1103.7,539.6Z"/><path fill="#ffd019" d="M1028.7,540.9L1025.5,537.1L1035.0,518.7L1038.2,524.0Z"/><path fill="#fbff19" d="M1095.9,549.5L1094.3,549.3L1103.7,539.6L1105.3,539.8Z"/><path fill="#ffd119" d="M1031.9,537.7L1028.7,540.9L1038.2,524.0L1041.4,519.9Z"/><path fill="#19ff47" d="M900.1,626.2L893.6,625.5L903.4,612.4L909.8,613.1Z"/><path fill="#e4ff19" d="M967.7,566.9L961.3,566.0L970.9,537.4L977.3,533.0Z"/><path fill="#ffc719" d="M1035.1,536.0L1031.9,537.7L1041.4,519.9L1044.7,519.1Z"/><path fill="#ffc219" d="M1038.3,534.4L1035.1,536.0L1044.7,519.1L1047.9,519.9Z"/><path fill="#19ff45" d="M906.5,626.9L900.1,626.2L909.8,613.1L916.2,612.2Z"/><path fill="#f4ff19" d="M974.1,557.9L967.7,566.9L977.3,533.0L983.8,530.2Z"/><path fill="#19ff60" d="M845.2,635.2L829.1,633.5L838.9,619.3L855.0,621.1Z"/><path fill="#ffcc19" d="M1041.5,539.7L1038.3,534.4L1047.9,519.9L1051.1,527.5Z"/><path fill="#ffde19" d="M1044.7,545.0L1041.5,539.7L1051.1,527.5L1054.3,531.1Z"/><path fill="#19ff3c" d="M912.9,629.7L906.5,626.9L916.2,612.2L922.7,602.3Z"/><path fill="#fffa19" d="M980.5,553.2L974.1,557.9L983.8,530.2L990.2,532.5Z"/><path fill="#ffdd19" d="M1047.9,541.8L1044.7,545.0L1054.3,531.1L1057.5,525.6Z"/><path fill="#ffd219" d="M1051.1,540.4L1047.9,541.8L1057.5,525.6L1060.7,524.8Z"/><path fill="#19ff24" d="M919.4,619.1L912.9,629.7L922.7,602.3L929.1,596.4Z"/><path fill="#fff719" d="M987.0,556.2L980.5,553.2L990.2,532.5L996.6,531.8Z"/><path fill="#ffe719" d="M1054.3,553.9L1051.1,540.4L1060.7,524.8L1063.9,538.5Z"/><path fill="#19ff60" d="M861.3,637.0L845.2,635.2L855.0,621.1L871.1,623.0Z"/><path fill="#fffb19" d="M1057.5,551.1L1054.3,553.9L1063.9,538.5L1067.1,536.9Z"/><path fill="#39ff19" d="M925.8,606.0L919.4,619.1L929.1,596.4L935.5,581.7Z"/><path fill="#fff719" d="M993.4,555.6L987.0,556.2L996.6,531.8L1003.0,532.3Z"/><path fill="#fffc19" d="M1060.7,554.9L1057.5,551.1L1067.1,536.9L1070.3,540.9Z"/><path fill="#fff519" d="M996.6,554.8L993.4,555.6L1003.0,532.3L1006.2,533.5Z"/><path fill="#f6ff19" d="M1063.9,559.2L1060.7,554.9L1070.3,540.9L1073.5,543.2Z"/><path fill="#5aff19" d="M932.3,602.4L925.8,606.0L935.5,581.7L942.0,580.0Z"/><path fill="#fff219" d="M999.8,550.9L996.6,554.8L1006.2,533.5L1009.4,534.4Z"/><path fill="#f0ff19" d="M1067.1,559.8L1063.9,559.2L1073.5,543.2L1076.7,543.4Z"/><path fill="#19ff7d" d="M824.1,644.8L808.0,643.1L813.0,631.7L829.1,633.5Z"/><path fill="#d5ff19" d="M1068.7,575.8L1067.1,559.8L1076.7,543.4L1078.3,557.8Z"/><path fill="#56ff19" d="M938.7,610.5L932.3,602.4L942.0,580.0L948.4,584.5Z"/><path fill="#ccff19" d="M1070.4,565.0L1068.7,575.8L1078.3,557.8L1079.9,549.2Z"/><path fill="#ffe919" d="M1006.2,547.5L999.8,550.9L1009.4,534.4L1015.8,533.9Z"/><path fill="#19ff61" d="M877.4,638.7L861.3,637.0L871.1,623.0L887.2,624.7Z"/><path fill="#ecff19" d="M1072.0,556.0L1070.4,565.0L1079.9,549.2L1081.5,542.9Z"/><path fill="#fff819" d="M1073.6,549.2L1072.0,556.0L1081.5,542.9L1083.1,536.7Z"/><path fill="#ffed19" d="M1075.2,550.2L1073.6,549.2L1083.1,536.7L1084.7,537.6Z"/><path fill="#5fff19" d="M945.1,608.6L938.7,610.5L948.4,584.5L954.8,566.0Z"/><path fill="#fff219" d="M1076.8,552.2L1075.2,550.2L1084.7,537.6L1086.3,540.2Z"/><path fill="#ffe919" d="M1012.7,550.0L1006.2,547.5L1015.8,533.9L1022.3,538.0Z"/><path fill="#fff719" d="M1078.4,550.7L1076.8,552.2L1086.3,540.2L1087.9,542.7Z"/><path fill="#fffa19" d="M1080.0,552.3L1078.4,550.7L1087.9,542.7L1089.5,544.1Z"/><path fill="#faff19" d="M1081.6,557.0L1080.0,552.3L1089.5,544.1L1091.1,548.9Z"/><path fill="#ffed19" d="M1015.9,551.0L1012.7,550.0L1022.3,538.0L1025.5,537.1Z"/><path fill="#19ff7d" d="M840.3,646.6L824.1,644.8L829.1,633.5L845.2,635.2Z"/><path fill="#19ff61" d="M883.9,639.4L877.4,638.7L887.2,624.7L893.6,625.5Z"/><path fill="#7cff19" d="M951.6,599.9L945.1,608.6L954.8,566.0L961.3,566.0Z"/><path fill="#f1ff19" d="M1083.2,557.2L1081.6,557.0L1091.1,548.9L1092.7,549.1Z"/><path fill="#f1ff19" d="M1084.8,557.4L1083.2,557.2L1092.7,549.1L1094.3,549.3Z"/><path fill="#fff019" d="M1019.1,551.8L1015.9,551.0L1025.5,537.1L1028.7,540.9Z"/><path fill="#f1ff19" d="M1086.4,557.6L1084.8,557.4L1094.3,549.3L1095.9,549.5Z"/><path fill="#ffef19" d="M1022.3,550.4L1019.1,551.8L1028.7,540.9L1031.9,537.7Z"/><path fill="#19ff61" d="M890.3,640.1L883.9,639.4L893.6,625.5L900.1,626.2Z"/><path fill="#8eff19" d="M958.0,591.3L951.6,599.9L961.3,566.0L967.7,566.9Z"/><path fill="#ffe819" d="M1025.5,549.7L1022.3,550.4L1031.9,537.7L1035.1,536.0Z"/><path fill="#ffdd19" d="M1028.7,544.0L1025.5,549.7L1035.1,536.0L1038.3,534.4Z"/><path fill="#19ffc1" d="M819.2,667.1L803.1,665.3L808.0,643.1L824.1,644.8Z"/><path fill="#19ff60" d="M896.8,640.6L890.3,640.1L900.1,626.2L906.5,626.9Z"/><path fill="#9fff19" d="M964.5,591.7L958.0,591.3L967.7,566.9L974.1,557.9Z"/><path fill="#ffdd19" d="M1032.0,547.1L1028.7,544.0L1038.3,534.4L1041.5,539.7Z"/><path fill="#19ff7d" d="M856.4,648.3L840.3,646.6L845.2,635.2L861.3,637.0Z"/><path fill="#ffee19" d="M1035.2,553.2L1032.0,547.1L1041.5,539.7L1044.7,545.0Z"/><path fill="#19ff67" d="M903.2,646.6L896.8,640.6L906.5,626.9L912.9,629.7Z"/><path fill="#b2ff19" d="M970.9,587.0L964.5,591.7L974.1,557.9L980.5,553.2Z"/><path fill="#fff319" d="M1038.4,551.9L1035.2,553.2L1044.7,545.0L1047.9,541.8Z"/><path fill="#ffeb19" d="M1041.6,551.1L1038.4,551.9L1047.9,541.8L1051.1,540.4Z"/><path fill="#19ff61" d="M909.7,644.5L903.2,646.6L912.9,629.7L919.4,619.1Z"/><path fill="#b8ff19" d="M977.3,589.5L970.9,587.0L980.5,553.2L987.0,556.2Z"/><path fill="#feff19" d="M1044.8,563.9L1041.6,551.1L1051.1,540.4L1054.3,553.9Z"/><path fill="#19ffc1" d="M835.3,668.8L819.2,667.1L824.1,644.8L840.3,646.6Z"/><path fill="#efff19" d="M1048.0,559.2L1044.8,563.9L1054.3,553.9L1057.5,551.1Z"/><path fill="#19ff7d" d="M872.5,650.1L856.4,648.3L861.3,637.0L877.4,638.7Z"/><path fill="#19ff41" d="M916.1,637.5L909.7,644.5L919.4,619.1L925.8,606.0Z"/><path fill="#b7ff19" d="M983.8,588.7L977.3,589.5L987.0,556.2L993.4,555.6Z"/><path fill="#efff19" d="M1051.2,564.3L1048.0,559.2L1057.5,551.1L1060.7,554.9Z"/><path fill="#bdff19" d="M987.0,585.4L983.8,588.7L993.4,555.6L996.6,554.8Z"/><path fill="#ddff19" d="M1054.4,572.1L1051.2,564.3L1060.7,554.9L1063.9,559.2Z"/><path fill="#19ff21" d="M922.6,628.6L916.1,637.5L925.8,606.0L932.3,602.4Z"/><path fill="#c9ff19" d="M990.2,581.7L987.0,585.4L996.6,554.8L999.8,550.9Z"/><path fill="#d5ff19" d="M1057.6,570.0L1054.4,572.1L1063.9,559.2L1067.1,559.8Z"/><path fill="#19e0ff" d="M814.3,686.9L798.1,685.2L803.1,665.3L819.2,667.1Z"/><path fill="#19ff7d" d="M879.0,650.8L872.5,650.1L877.4,638.7L883.9,639.4Z"/><path fill="#b7ff19" d="M1059.2,589.0L1057.6,570.0L1067.1,559.8L1068.7,575.8Z"/><path fill="#19ffc1" d="M851.5,670.6L835.3,668.8L840.3,646.6L856.4,648.3Z"/><path fill="#19ff1f" d="M929.0,633.9L922.6,628.6L932.3,602.4L938.7,610.5Z"/><path fill="#abff19" d="M1060.8,579.2L1059.2,589.0L1068.7,575.8L1070.4,565.0Z"/><path fill="#d5ff19" d="M996.6,581.8L990.2,581.7L999.8,550.9L1006.2,547.5Z"/><path fill="#d3ff19" d="M1062.5,565.4L1060.8,579.2L1070.4,565.0L1072.0,556.0Z"/><path fill="#f6ff19" d="M1064.1,557.1L1062.5,565.4L1072.0,556.0L1073.6,549.2Z"/><path fill="#19ff7d" d="M885.4,651.5L879.0,650.8L883.9,639.4L890.3,640.1Z"/><path fill="#fffc19" d="M1065.7,558.4L1064.1,557.1L1073.6,549.2L1075.2,550.2Z"/><path fill="#19ff27" d="M935.5,634.5L929.0,633.9L938.7,610.5L945.1,608.6Z"/><path fill="#fcff19" d="M1067.3,560.9L1065.7,558.4L1075.2,550.2L1076.8,552.2Z"/><path fill="#daff19" d="M1003.1,580.2L996.6,581.8L1006.2,547.5L1012.7,550.0Z"/><path fill="#fcff19" d="M1068.9,559.4L1067.3,560.9L1076.8,552.2L1078.4,550.7Z"/><path fill="#fdff19" d="M1070.5,559.6L1068.9,559.4L1078.4,550.7L1080.0,552.3Z"/><path fill="#19ff7d" d="M891.9,652.2L885.4,651.5L890.3,640.1L896.8,640.6Z"/><path fill="#f4ff19" d="M1072.1,564.3L1070.5,559.6L1080.0,552.3L1081.6,557.0Z"/><path fill="#dbff19" d="M1006.3,579.2L1003.1,580.2L1012.7,550.0L1015.9,551.0Z"/><path fill="#19e0ff" d="M830.4,688.7L814.3,686.9L819.2,667.1L835.3,668.8Z"/><path fill="#1cff19" d="M941.9,629.2L935.5,634.5L945.1,608.6L951.6,599.9Z"/><path fill="#ecff19" d="M1073.7,564.5L1072.1,564.3L1081.6,557.0L1083.2,557.2Z"/><path fill="#ecff19" d="M1075.3,564.7L1073.7,564.5L1083.2,557.2L1084.8,557.4Z"/><path fill="#dcff19" d="M1009.5,578.3L1006.3,579.2L1015.9,551.0L1019.1,551.8Z"/><path fill="#19ffc1" d="M867.6,672.3L851.5,670.6L856.4,648.3L872.5,650.1Z"/><path fill="#ecff19" d="M1076.9,564.8L1075.3,564.7L1084.8,557.4L1086.4,557.6Z"/><path fill="#19ff89" d="M898.3,661.6L891.9,652.2L896.8,640.6L903.2,646.6Z"/><path fill="#dfff19" d="M1012.7,578.5L1009.5,578.3L1019.1,551.8L1022.3,550.4Z"/><path fill="#3aff19" d="M948.4,621.6L941.9,629.2L951.6,599.9L958.0,591.3Z"/><path fill="#e5ff19" d="M1016.0,574.4L1012.7,578.5L1022.3,550.4L1025.5,549.7Z"/><path fill="#19ff9d" d="M904.8,666.3L898.3,661.6L903.2,646.6L909.7,644.5Z"/><path fill="#f6ff19" d="M1019.2,568.1L1016.0,574.4L1025.5,549.7L1028.7,544.0Z"/><path fill="#19a4f7" d="M809.3,696.1L793.2,694.4L798.1,685.2L814.3,686.9Z"/><path fill="#49ff19" d="M954.8,623.9L948.4,621.6L958.0,591.3L964.5,591.7Z"/><path fill="#19ffc1" d="M874.1,673.0L867.6,672.3L872.5,650.1L879.0,650.8Z"/><path fill="#fdff19" d="M1022.4,570.6L1019.2,568.1L1028.7,544.0L1032.0,547.1Z"/><path fill="#19e0ff" d="M846.6,690.4L830.4,688.7L835.3,668.8L851.5,670.6Z"/><path fill="#19ff8e" d="M911.2,663.0L904.8,666.3L909.7,644.5L916.1,637.5Z"/><path fill="#f2ff19" d="M1025.6,572.8L1022.4,570.6L1032.0,547.1L1035.2,553.2Z"/><path fill="#4bff19" d="M961.3,626.6L954.8,623.9L964.5,591.7L970.9,587.0Z"/><path fill="#19ffc1" d="M880.6,673.7L874.1,673.0L879.0,650.8L885.4,651.5Z"/><path fill="#f0ff19" d="M1028.8,569.3L1025.6,572.8L1035.2,553.2L1038.4,551.9Z"/><path fill="#19ff6c" d="M917.7,648.2L911.2,663.0L916.1,637.5L922.6,628.6Z"/><path fill="#f3ff19" d="M1032.0,572.9L1028.8,569.3L1038.4,551.9L1041.6,551.1Z"/><path fill="#4eff19" d="M967.7,625.1L961.3,626.6L970.9,587.0L977.3,589.5Z"/><path fill="#19ffc1" d="M887.0,674.4L880.6,673.7L885.4,651.5L891.9,652.2Z"/><path fill="#e2ff19" d="M1035.3,577.2L1032.0,572.9L1041.6,551.1L1044.8,563.9Z"/><path fill="#19a4f7" d="M825.5,697.9L809.3,696.1L814.3,686.9L830.4,688.7Z"/><path fill="#1880f0" d="M808.1,705.9L791.9,704.1L793.2,694.4L809.3,696.1Z"/><path fill="#19ff58" d="M924.2,646.7L917.7,648.2L922.6,628.6L929.0,633.9Z"/><path fill="#ddff19" d="M1038.5,572.3L1035.3,577.2L1044.8,563.9L1048.0,559.2Z"/><path fill="#19e0ff" d="M862.7,692.2L846.6,690.4L851.5,670.6L867.6,672.3Z"/><path fill="#51ff19" d="M974.1,624.7L967.7,625.1L977.3,589.5L983.8,588.7Z"/><path fill="#19ffd6" d="M893.5,682.2L887.0,674.4L891.9,652.2L898.3,661.6Z"/><path fill="#ddff19" d="M1041.7,577.7L1038.5,572.3L1048.0,559.2L1051.2,564.3Z"/><path fill="#19ff5f" d="M930.6,653.2L924.2,646.7L929.0,633.9L935.5,634.5Z"/><path fill="#5bff19" d="M977.4,620.2L974.1,624.7L983.8,588.7L987.0,585.4Z"/><path fill="#1765e5" d="M806.8,710.7L790.7,709.0L791.9,704.1L808.1,705.9Z"/><path fill="#caff19" d="M1044.9,582.3L1041.7,577.7L1051.2,564.3L1054.4,572.1Z"/><path fill="#19fff6" d="M899.9,686.0L893.5,682.2L898.3,661.6L904.8,666.3Z"/><path fill="#6bff19" d="M980.6,614.4L977.4,620.2L987.0,585.4L990.2,581.7Z"/><path fill="#c3ff19" d="M1048.1,581.0L1044.9,582.3L1054.4,572.1L1057.6,570.0Z"/><path fill="#19e0ff" d="M869.2,692.9L862.7,692.2L867.6,672.3L874.1,673.0Z"/><path fill="#a6ff19" d="M1049.7,598.2L1048.1,581.0L1057.6,570.0L1059.2,589.0Z"/><path fill="#19ff5a" d="M937.1,649.0L930.6,653.2L935.5,634.5L941.9,629.2Z"/><path fill="#19a4f7" d="M841.7,699.6L825.5,697.9L830.4,688.7L846.6,690.4Z"/><path fill="#165ae0" d="M805.6,713.7L789.4,711.9L790.7,709.0L806.8,710.7Z"/><path fill="#91ff19" d="M1051.3,596.6L1049.7,598.2L1059.2,589.0L1060.8,579.2Z"/><path fill="#77ff19" d="M987.0,613.7L980.6,614.4L990.2,581.7L996.6,581.8Z"/><path fill="#1880f0" d="M824.3,707.6L808.1,705.9L809.3,696.1L825.5,697.9Z"/><path fill="#19fff6" d="M906.4,683.5L899.9,686.0L904.8,666.3L911.2,663.0Z"/><path fill="#b1ff19" d="M1053.0,586.0L1051.3,596.6L1060.8,579.2L1062.5,565.4Z"/><path fill="#dcff19" d="M1054.6,572.7L1053.0,586.0L1062.5,565.4L1064.1,557.1Z"/><path fill="#19e0ff" d="M875.7,693.6L869.2,692.9L874.1,673.0L880.6,673.7Z"/><path fill="#efff19" d="M1056.2,571.8L1054.6,572.7L1064.1,557.1L1065.7,558.4Z"/><path fill="#19ff47" d="M943.5,647.3L937.1,649.0L941.9,629.2L948.4,621.6Z"/><path fill="#eaff19" d="M1057.8,575.2L1056.2,571.8L1065.7,558.4L1067.3,560.9Z"/><path fill="#7cff19" d="M993.5,612.9L987.0,613.7L996.6,581.8L1003.1,580.2Z"/><path fill="#1651db" d="M804.4,717.1L788.2,715.4L789.4,711.9L805.6,713.7Z"/><path fill="#19ffc5" d="M912.9,671.8L906.4,683.5L911.2,663.0L917.7,648.2Z"/><path fill="#e9ff19" d="M1059.4,572.7L1057.8,575.2L1067.3,560.9L1068.9,559.4Z"/><path fill="#1765e5" d="M823.0,712.5L806.8,710.7L808.1,705.9L824.3,707.6Z"/><path fill="#edff19" d="M1061.0,573.4L1059.4,572.7L1068.9,559.4L1070.5,559.6Z"/><path fill="#19e0ff" d="M882.1,694.3L875.7,693.6L880.6,673.7L887.0,674.4Z"/><path fill="#e4ff19" d="M1062.6,577.9L1061.0,573.4L1070.5,559.6L1072.1,564.3Z"/><path fill="#19ff3c" d="M950.0,644.6L943.5,647.3L948.4,621.6L954.8,623.9Z"/><path fill="#83ff19" d="M996.7,610.4L993.5,612.9L1003.1,580.2L1006.3,579.2Z"/><path fill="#dcff19" d="M1064.2,578.1L1062.6,577.9L1072.1,564.3L1073.7,564.5Z"/><path fill="#1648d7" d="M803.1,720.3L786.9,718.5L788.2,715.4L804.4,717.1Z"/><path fill="#19ff99" d="M919.3,670.7L912.9,671.8L917.7,648.2L924.2,646.7Z"/><path fill="#dcff19" d="M1065.8,578.3L1064.2,578.1L1073.7,564.5L1075.3,564.7Z"/><path fill="#8aff19" d="M999.9,608.5L996.7,610.4L1006.3,579.2L1009.5,578.3Z"/><path fill="#19a4f7" d="M857.9,701.4L841.7,699.6L846.6,690.4L862.7,692.2Z"/><path fill="#165ae0" d="M821.8,715.4L805.6,713.7L806.8,710.7L823.0,712.5Z"/><path fill="#dcff19" d="M1067.4,578.4L1065.8,578.3L1075.3,564.7L1076.9,564.8Z"/><path fill="#19cffd" d="M888.6,700.5L882.1,694.3L887.0,674.4L893.5,682.2Z"/><path fill="#1880f0" d="M840.4,709.4L824.3,707.6L825.5,697.9L841.7,699.6Z"/><path fill="#19ff3d" d="M956.4,647.0L950.0,644.6L954.8,623.9L961.3,626.6Z"/><path fill="#91ff19" d="M1003.2,604.6L999.9,608.5L1009.5,578.3L1012.7,578.5Z"/><path fill="#153fd3" d="M802.5,723.6L786.3,721.8L786.9,718.5L803.1,720.3Z"/><path fill="#19ffa2" d="M925.8,676.1L919.3,670.7L924.2,646.7L930.6,653.2Z"/><path fill="#9bff19" d="M1006.4,602.7L1003.2,604.6L1012.7,578.5L1016.0,574.4Z"/><path fill="#1651db" d="M820.6,718.9L804.4,717.1L805.6,713.7L821.8,715.4Z"/><path fill="#1536ce" d="M801.9,726.3L785.7,724.6L786.3,721.8L802.5,723.6Z"/><path fill="#19b7f9" d="M895.1,703.7L888.6,700.5L893.5,682.2L899.9,686.0Z"/><path fill="#19ff43" d="M962.9,652.0L956.4,647.0L961.3,626.6L967.7,625.1Z"/><path fill="#acff19" d="M1009.6,597.2L1006.4,602.7L1016.0,574.4L1019.2,568.1Z"/><path fill="#1765e5" d="M839.2,714.2L823.0,712.5L824.3,707.6L840.4,709.4Z"/><path fill="#142fca" d="M801.3,729.0L785.1,727.2L785.7,724.6L801.9,726.3Z"/><path fill="#19a4f7" d="M864.3,702.1L857.9,701.4L862.7,692.2L869.2,692.9Z"/><path fill="#19ffa4" d="M932.2,672.8L925.8,676.1L930.6,653.2L937.1,649.0Z"/><path fill="#baff19" d="M1012.8,592.5L1009.6,597.2L1019.2,568.1L1022.4,570.6Z"/><path fill="#1648d7" d="M819.3,722.0L803.1,720.3L804.4,717.1L820.6,718.9Z"/><path fill="#1428c5" d="M800.7,732.7L784.5,731.0L785.1,727.2L801.3,729.0Z"/><path fill="#19b7f9" d="M901.5,701.8L895.1,703.7L899.9,686.0L906.4,683.5Z"/><path fill="#19ff42" d="M969.3,651.1L962.9,652.0L967.7,625.1L974.1,624.7Z"/><path fill="#bbff19" d="M1016.1,593.2L1012.8,592.5L1022.4,570.6L1025.6,572.8Z"/><path fill="#165ae0" d="M838.0,717.2L821.8,715.4L823.0,712.5L839.2,714.2Z"/><path fill="#19a4f7" d="M870.8,702.8L864.3,702.1L869.2,692.9L875.7,693.6Z"/><path fill="#1880f0" d="M856.6,711.1L840.4,709.4L841.7,699.6L857.9,701.4Z"/><path fill="#19ff92" d="M938.7,671.4L932.2,672.8L937.1,649.0L943.5,647.3Z"/><path fill="#1324bf" d="M800.1,736.3L783.8,734.5L784.5,731.0L800.7,732.7Z"/><path fill="#c0ff19" d="M1019.3,590.0L1016.1,593.2L1025.6,572.8L1028.8,569.3Z"/><path fill="#19ff37" d="M972.6,646.4L969.3,651.1L974.1,624.7L977.4,620.2Z"/><path fill="#153fd3" d="M818.7,725.3L802.5,723.6L803.1,720.3L819.3,722.0Z"/><path fill="#19dcfe" d="M908.0,692.8L901.5,701.8L906.4,683.5L912.9,671.8Z"/><path fill="#c3ff19" d="M1022.5,590.6L1019.3,590.0L1028.8,569.3L1032.0,572.9Z"/><path fill="#1221b9" d="M799.4,739.2L783.2,737.5L783.8,734.5L800.1,736.3Z"/><path fill="#19ff23" d="M975.8,641.5L972.6,646.4L977.4,620.2L980.6,614.4Z"/><path fill="#1651db" d="M836.8,720.7L820.6,718.9L821.8,715.4L838.0,717.2Z"/><path fill="#1536ce" d="M818.1,728.1L801.9,726.3L802.5,723.6L818.7,725.3Z"/><path fill="#19a4f7" d="M877.3,703.5L870.8,702.8L875.7,693.6L882.1,694.3Z"/><path fill="#19ff86" d="M945.1,669.2L938.7,671.4L943.5,647.3L950.0,644.6Z"/><path fill="#bbff19" d="M1025.7,592.7L1022.5,590.6L1032.0,572.9L1035.3,577.2Z"/><path fill="#1765e5" d="M855.4,716.0L839.2,714.2L840.4,709.4L856.6,711.1Z"/><path fill="#121eb4" d="M798.8,742.2L782.6,740.4L783.2,737.5L799.4,739.2Z"/><path fill="#142fca" d="M817.5,730.7L801.3,729.0L801.9,726.3L818.1,728.1Z"/><path fill="#19fbff" d="M914.5,692.1L908.0,692.8L912.9,671.8L919.3,670.7Z"/><path fill="#1dff19" d="M982.2,639.9L975.8,641.5L980.6,614.4L987.0,613.7Z"/><path fill="#c0ff19" d="M1029.0,587.1L1025.7,592.7L1035.3,577.2L1038.5,572.3Z"/><path fill="#111bae" d="M798.2,745.5L782.0,743.8L782.6,740.4L798.8,742.2Z"/><path fill="#1880f0" d="M863.1,711.8L856.6,711.1L857.9,701.4L864.3,702.1Z"/><path fill="#1897f5" d="M883.7,709.1L877.3,703.5L882.1,694.3L888.6,700.5Z"/><path fill="#1648d7" d="M835.5,723.8L819.3,722.0L820.6,718.9L836.8,720.7Z"/><path fill="#1428c5" d="M816.9,734.5L800.7,732.7L801.3,729.0L817.5,730.7Z"/><path fill="#19ff83" d="M951.6,671.0L945.1,669.2L950.0,644.6L956.4,647.0Z"/><path fill="#c2ff19" d="M1032.2,590.7L1029.0,587.1L1038.5,572.3L1041.7,577.7Z"/><path fill="#165ae0" d="M854.2,719.0L838.0,717.2L839.2,714.2L855.4,716.0Z"/><path fill="#1118a8" d="M797.6,748.8L781.4,747.0L782.0,743.8L798.2,745.5Z"/><path fill="#19f5ff" d="M920.9,696.5L914.5,692.1L919.3,670.7L925.8,676.1Z"/><path fill="#1324bf" d="M816.3,738.1L800.1,736.3L800.7,732.7L816.9,734.5Z"/><path fill="#24ff19" d="M988.7,638.7L982.2,639.9L987.0,613.7L993.5,612.9Z"/><path fill="#b5ff19" d="M1035.4,593.3L1032.2,590.7L1041.7,577.7L1044.9,582.3Z"/><path fill="#1880f0" d="M869.6,712.5L863.1,711.8L864.3,702.1L870.8,702.8Z"/><path fill="#153fd3" d="M834.9,727.1L818.7,725.3L819.3,722.0L835.5,723.8Z"/><path fill="#1015a2" d="M797.0,753.3L780.7,751.5L781.4,747.0L797.6,748.8Z"/><path fill="#1765e5" d="M861.9,716.7L855.4,716.0L856.6,711.1L863.1,711.8Z"/><path fill="#1884f2" d="M890.2,712.1L883.7,709.1L888.6,700.5L895.1,703.7Z"/><path fill="#19ff8c" d="M958.1,674.9L951.6,671.0L956.4,647.0L962.9,652.0Z"/><path fill="#b2ff19" d="M1038.6,592.6L1035.4,593.3L1044.9,582.3L1048.1,581.0Z"/><path fill="#1221b9" d="M815.6,741.0L799.4,739.2L800.1,736.3L816.3,738.1Z"/><path fill="#2bff19" d="M991.9,637.4L988.7,638.7L993.5,612.9L996.7,610.4Z"/><path fill="#1651db" d="M853.0,722.4L836.8,720.7L838.0,717.2L854.2,719.0Z"/><path fill="#1536ce" d="M834.3,729.9L818.1,728.1L818.7,725.3L834.9,727.1Z"/><path fill="#0f129b" d="M796.3,756.4L780.1,754.7L780.7,751.5L797.0,753.3Z"/><path fill="#97ff19" d="M1040.2,608.1L1038.6,592.6L1048.1,581.0L1049.7,598.2Z"/><path fill="#19f4ff" d="M927.4,694.0L920.9,696.5L925.8,676.1L932.2,672.8Z"/><path fill="#121eb4" d="M815.0,744.0L798.8,742.2L799.4,739.2L815.6,741.0Z"/><path fill="#78ff19" d="M1041.8,611.7L1040.2,608.1L1049.7,598.2L1051.3,596.6Z"/><path fill="#1880f0" d="M876.0,713.2L869.6,712.5L870.8,702.8L877.3,703.5Z"/><path fill="#34ff19" d="M995.1,634.2L991.9,637.4L996.7,610.4L999.9,608.5Z"/><path fill="#1765e5" d="M868.3,717.4L861.9,716.7L863.1,711.8L869.6,712.5Z"/><path fill="#142fca" d="M833.7,732.5L817.5,730.7L818.1,728.1L834.3,729.9Z"/><path fill="#0f1096" d="M795.7,758.6L779.5,756.8L780.1,754.7L796.3,756.4Z"/><path fill="#1884f2" d="M896.7,710.4L890.2,712.1L895.1,703.7L901.5,701.8Z"/><path fill="#88ff19" d="M1043.5,603.9L1041.8,611.7L1051.3,596.6L1053.0,586.0Z"/><path fill="#165ae0" d="M860.6,719.7L854.2,719.0L855.4,716.0L861.9,716.7Z"/><path fill="#19ff92" d="M964.5,673.9L958.1,674.9L962.9,652.0L969.3,651.1Z"/><path fill="#111bae" d="M814.4,747.3L798.2,745.5L798.8,742.2L815.0,744.0Z"/><path fill="#b0ff19" d="M1045.1,592.0L1043.5,603.9L1053.0,586.0L1054.6,572.7Z"/><path fill="#41ff19" d="M998.4,630.0L995.1,634.2L999.9,608.5L1003.2,604.6Z"/><path fill="#1648d7" d="M851.7,725.5L835.5,723.8L836.8,720.7L853.0,722.4Z"/><path fill="#caff19" d="M1046.7,589.8L1045.1,592.0L1054.6,572.7L1056.2,571.8Z"/><path fill="#1428c5" d="M833.1,736.3L816.9,734.5L817.5,730.7L833.7,732.5Z"/><path fill="#19fffd" d="M933.9,692.8L927.4,694.0L932.2,672.8L938.7,671.4Z"/><path fill="#c9ff19" d="M1048.3,590.8L1046.7,589.8L1056.2,571.8L1057.8,575.2Z"/><path fill="#1876ec" d="M882.5,718.1L876.0,713.2L877.3,703.5L883.7,709.1Z"/><path fill="#19ff85" d="M967.8,669.9L964.5,673.9L969.3,651.1L972.6,646.4Z"/><path fill="#1118a8" d="M813.8,750.5L797.6,748.8L798.2,745.5L814.4,747.3Z"/><path fill="#4dff19" d="M1001.6,628.5L998.4,630.0L1003.2,604.6L1006.4,602.7Z"/><path fill="#1765e5" d="M874.8,718.1L868.3,717.4L869.6,712.5L876.0,713.2Z"/><path fill="#19a1f6" d="M903.1,702.5L896.7,710.4L901.5,701.8L908.0,692.8Z"/><path fill="#caff19" d="M1049.9,588.6L1048.3,590.8L1057.8,575.2L1059.4,572.7Z"/><path fill="#165ae0" d="M867.1,720.4L860.6,719.7L861.9,716.7L868.3,717.4Z"/><path fill="#1324bf" d="M832.5,739.8L816.3,738.1L816.9,734.5L833.1,736.3Z"/><path fill="#1651db" d="M859.4,723.1L853.0,722.4L854.2,719.0L860.6,719.7Z"/><path fill="#ceff19" d="M1051.5,589.2L1049.9,588.6L1059.4,572.7L1061.0,573.4Z"/><path fill="#19ff73" d="M971.0,665.9L967.8,669.9L972.6,646.4L975.8,641.5Z"/><path fill="#5cff19" d="M1004.8,622.3L1001.6,628.5L1006.4,602.7L1009.6,597.2Z"/><path fill="#153fd3" d="M851.1,728.8L834.9,727.1L835.5,723.8L851.7,725.5Z"/><path fill="#1015a2" d="M813.2,755.0L797.0,753.3L797.6,748.8L813.8,750.5Z"/><path fill="#c5ff19" d="M1053.1,593.5L1051.5,589.2L1061.0,573.4L1062.6,577.9Z"/><path fill="#19fff0" d="M940.3,691.0L933.9,692.8L938.7,671.4L945.1,669.2Z"/><path fill="#1221b9" d="M831.8,742.8L815.6,741.0L816.3,738.1L832.5,739.8Z"/><path fill="#beff19" d="M1054.7,593.7L1053.1,593.5L1062.6,577.9L1064.2,578.1Z"/><path fill="#1769e6" d="M889.0,720.7L882.5,718.1L883.7,709.1L890.2,712.1Z"/><path fill="#6eff19" d="M1008.1,619.7L1004.8,622.3L1009.6,597.2L1012.8,592.5Z"/><path fill="#1536ce" d="M850.5,731.6L834.3,729.9L834.9,727.1L851.1,728.8Z"/><path fill="#175ee2" d="M881.3,722.5L874.8,718.1L876.0,713.2L882.5,718.1Z"/><path fill="#0f129b" d="M812.5,758.2L796.3,756.4L797.0,753.3L813.2,755.0Z"/><path fill="#19bdfa" d="M909.6,701.9L903.1,702.5L908.0,692.8L914.5,692.1Z"/><path fill="#beff19" d="M1056.4,593.9L1054.7,593.7L1064.2,578.1L1065.8,578.3Z"/><path fill="#165ae0" d="M873.6,721.1L867.1,720.4L868.3,717.4L874.8,718.1Z"/><path fill="#19ff67" d="M977.4,664.3L971.0,665.9L975.8,641.5L982.2,639.9Z"/><path fill="#1651db" d="M865.9,723.8L859.4,723.1L860.6,719.7L867.1,720.4Z"/><path fill="#121eb4" d="M831.2,745.7L815.0,744.0L815.6,741.0L831.8,742.8Z"/><path fill="#1648d7" d="M858.2,726.2L851.7,725.5L853.0,722.4L859.4,723.1Z"/><path fill="#beff19" d="M1058.0,594.1L1056.4,593.9L1065.8,578.3L1067.4,578.4Z"/><path fill="#77ff19" d="M1011.3,617.7L1008.1,619.7L1012.8,592.5L1016.1,593.2Z"/><path fill="#142fca" d="M849.9,734.2L833.7,732.5L834.3,729.9L850.5,731.6Z"/><path fill="#0f1096" d="M811.9,760.4L795.7,758.6L796.3,756.4L812.5,758.2Z"/><path fill="#19ffeb" d="M946.8,692.4L940.3,691.0L945.1,669.2L951.6,671.0Z"/><path fill="#111bae" d="M830.6,749.1L814.4,747.3L815.0,744.0L831.2,745.7Z"/><path fill="#1769e7" d="M895.4,719.4L889.0,720.7L890.2,712.1L896.7,710.4Z"/><path fill="#85ff19" d="M1014.5,608.3L1011.3,617.7L1016.1,593.2L1019.3,590.0Z"/><path fill="#1653dd" d="M887.8,725.0L881.3,722.5L882.5,718.1L889.0,720.7Z"/><path fill="#19b7f9" d="M916.1,705.9L909.6,701.9L914.5,692.1L920.9,696.5Z"/><path fill="#1428c5" d="M849.3,738.0L833.1,736.3L833.7,732.5L849.9,734.2Z"/><path fill="#1653dc" d="M880.1,725.3L873.6,721.1L874.8,718.1L881.3,722.5Z"/><path fill="#19ff5f" d="M983.9,662.9L977.4,664.3L982.2,639.9L988.7,638.7Z"/><path fill="#153fd3" d="M857.6,729.5L851.1,728.8L851.7,725.5L858.2,726.2Z"/><path fill="#1651db" d="M872.4,724.5L865.9,723.8L867.1,720.4L873.6,721.1Z"/><path fill="#1648d7" d="M864.7,727.0L858.2,726.2L859.4,723.1L865.9,723.8Z"/><path fill="#1118a8" d="M830.0,752.3L813.8,750.5L814.4,747.3L830.6,749.1Z"/><path fill="#91ff19" d="M1017.7,608.5L1014.5,608.3L1019.3,590.0L1022.5,590.6Z"/><path fill="#19fff5" d="M953.2,695.2L946.8,692.4L951.6,671.0L958.1,674.9Z"/><path fill="#1324bf" d="M848.7,741.6L832.5,739.8L833.1,736.3L849.3,738.0Z"/><path fill="#1536ce" d="M857.0,732.3L850.5,731.6L851.1,728.8L857.6,729.5Z"/><path fill="#187eef" d="M901.9,712.9L895.4,719.4L896.7,710.4L903.1,702.5Z"/><path fill="#19ff58" d="M987.1,661.7L983.9,662.9L988.7,638.7L991.9,637.4Z"/><path fill="#91ff19" d="M1021.0,606.6L1017.7,608.5L1022.5,590.6L1025.7,592.7Z"/><path fill="#1015a2" d="M829.4,756.8L813.2,755.0L813.8,750.5L830.0,752.3Z"/><path fill="#1653dd" d="M894.2,723.9L887.8,725.0L889.0,720.7L895.4,719.4Z"/><path fill="#19b6f9" d="M922.6,703.7L916.1,705.9L920.9,696.5L927.4,694.0Z"/><path fill="#1649d8" d="M886.5,727.6L880.1,725.3L881.3,722.5L887.8,725.0Z"/><path fill="#153fd3" d="M864.1,730.2L857.6,729.5L858.2,726.2L864.7,727.0Z"/><path fill="#1221b9" d="M848.1,744.5L831.8,742.8L832.5,739.8L848.7,741.6Z"/><path fill="#164bd9" d="M878.9,728.5L872.4,724.5L873.6,721.1L880.1,725.3Z"/><path fill="#142fca" d="M856.4,734.9L849.9,734.2L850.5,731.6L857.0,732.3Z"/><path fill="#1648d7" d="M871.2,727.7L864.7,727.0L865.9,723.8L872.4,724.5Z"/><path fill="#19ff4f" d="M990.4,658.8L987.1,661.7L991.9,637.4L995.1,634.2Z"/><path fill="#9dff19" d="M1024.2,599.9L1021.0,606.6L1025.7,592.7L1029.0,587.1Z"/><path fill="#0f129b" d="M828.8,760.0L812.5,758.2L813.2,755.0L829.4,756.8Z"/><path fill="#19fff8" d="M959.7,694.2L953.2,695.2L958.1,674.9L964.5,673.9Z"/><path fill="#1536ce" d="M863.5,733.0L857.0,732.3L857.6,729.5L864.1,730.2Z"/><path fill="#121eb4" d="M847.4,747.5L831.2,745.7L831.8,742.8L848.1,744.5Z"/><path fill="#1428c5" d="M855.8,738.7L849.3,738.0L849.9,734.2L856.4,734.9Z"/><path fill="#1893f4" d="M908.4,712.5L901.9,712.9L903.1,702.5L909.6,701.9Z"/><path fill="#19ff42" d="M993.6,655.1L990.4,658.8L995.1,634.2L998.4,630.0Z"/><path fill="#a6ff19" d="M1027.4,599.8L1024.2,599.9L1029.0,587.1L1032.2,590.7Z"/><path fill="#1764e4" d="M900.7,718.0L894.2,723.9L895.4,719.4L901.9,712.9Z"/><path fill="#0f1096" d="M828.2,762.2L811.9,760.4L812.5,758.2L828.8,760.0Z"/><path fill="#19c3fb" d="M929.0,702.6L922.6,703.7L927.4,694.0L933.9,692.8Z"/><path fill="#164ad8" d="M893.0,726.7L886.5,727.6L887.8,725.0L894.2,723.9Z"/><path fill="#153fd3" d="M870.5,730.9L864.1,730.2L864.7,727.0L871.2,727.7Z"/><path fill="#1542d4" d="M885.3,730.7L878.9,728.5L880.1,725.3L886.5,727.6Z"/><path fill="#142fca" d="M862.8,735.6L856.4,734.9L857.0,732.3L863.5,733.0Z"/><path fill="#111bae" d="M846.8,750.8L830.6,749.1L831.2,745.7L847.4,747.5Z"/><path fill="#1542d4" d="M877.6,731.4L871.2,727.7L872.4,724.5L878.9,728.5Z"/><path fill="#19ffe8" d="M962.9,691.0L959.7,694.2L964.5,673.9L967.8,669.9Z"/><path fill="#19ff36" d="M996.8,653.5L993.6,655.1L998.4,630.0L1001.6,628.5Z"/><path fill="#1324bf" d="M855.1,742.3L848.7,741.6L849.3,738.0L855.8,738.7Z"/><path fill="#a0ff19" d="M1030.7,601.6L1027.4,599.8L1032.2,590.7L1035.4,593.3Z"/><path fill="#1536ce" d="M869.9,733.7L863.5,733.0L864.1,730.2L870.5,730.9Z"/><path fill="#1428c5" d="M862.2,739.4L855.8,738.7L856.4,734.9L862.8,735.6Z"/><path fill="#19ffd2" d="M966.2,687.6L962.9,691.0L967.8,669.9L971.0,665.9Z"/><path fill="#188ef4" d="M914.9,716.0L908.4,712.5L909.6,701.9L916.1,705.9Z"/><path fill="#19ff28" d="M1000.1,648.1L996.8,653.5L1001.6,628.5L1004.8,622.3Z"/><path fill="#1118a8" d="M846.2,754.1L830.0,752.3L830.6,749.1L846.8,750.8Z"/><path fill="#a1ff19" d="M1033.9,598.5L1030.7,601.6L1035.4,593.3L1038.6,592.6Z"/><path fill="#1221b9" d="M854.5,745.3L848.1,744.5L848.7,741.6L855.1,742.3Z"/><path fill="#1773eb" d="M907.2,717.8L900.7,718.0L901.9,712.9L908.4,712.5Z"/><path fill="#19cefc" d="M935.5,700.9L929.0,702.6L933.9,692.8L940.3,691.0Z"/><path fill="#1658df" d="M899.5,721.1L893.0,726.7L894.2,723.9L900.7,718.0Z"/><path fill="#153ad0" d="M877.0,734.5L870.5,730.9L871.2,727.7L877.6,731.4Z"/><path fill="#1542d4" d="M891.8,729.9L885.3,730.7L886.5,727.6L893.0,726.7Z"/><path fill="#88ff19" d="M1035.5,615.3L1033.9,598.5L1038.6,592.6L1040.2,608.1Z"/><path fill="#142fca" d="M869.3,736.4L862.8,735.6L863.5,733.0L869.9,733.7Z"/><path fill="#153bd1" d="M884.1,733.5L877.6,731.4L878.9,728.5L885.3,730.7Z"/><path fill="#1cff19" d="M1003.3,645.5L1000.1,648.1L1004.8,622.3L1008.1,619.7Z"/><path fill="#1324bf" d="M861.6,743.0L855.1,742.3L855.8,738.7L862.2,739.4Z"/><path fill="#1015a2" d="M845.6,758.6L829.4,756.8L830.0,752.3L846.2,754.1Z"/><path fill="#121eb4" d="M853.9,748.2L847.4,747.5L848.1,744.5L854.5,745.3Z"/><path fill="#63ff19" d="M1037.1,621.3L1035.5,615.3L1040.2,608.1L1041.8,611.7Z"/><path fill="#19ffc1" d="M972.6,686.1L966.2,687.6L971.0,665.9L977.4,664.3Z"/><path fill="#1432cc" d="M876.4,737.1L869.9,733.7L870.5,730.9L877.0,734.5Z"/><path fill="#67ff19" d="M1038.7,615.7L1037.1,621.3L1041.8,611.7L1043.5,603.9Z"/><path fill="#1428c5" d="M868.7,740.1L862.2,739.4L862.8,735.6L869.3,736.4Z"/><path fill="#188df3" d="M921.3,714.2L914.9,716.0L916.1,705.9L922.6,703.7Z"/><path fill="#25ff19" d="M1006.5,643.4L1003.3,645.5L1008.1,619.7L1011.3,617.7Z"/><path fill="#1221b9" d="M861.0,746.0L854.5,745.3L855.1,742.3L861.6,743.0Z"/><path fill="#1770ea" d="M913.7,720.9L907.2,717.8L908.4,712.5L914.9,716.0Z"/><path fill="#0f129b" d="M845.0,761.8L828.8,760.0L829.4,756.8L845.6,758.6Z"/><path fill="#84ff19" d="M1040.3,609.9L1038.7,615.7L1043.5,603.9L1045.1,592.0Z"/><path fill="#19d3fd" d="M942.0,702.1L935.5,700.9L940.3,691.0L946.8,692.4Z"/><path fill="#111bae" d="M853.3,751.6L846.8,750.8L847.4,747.5L853.9,748.2Z"/><path fill="#1766e5" d="M906.0,721.0L899.5,721.1L900.7,718.0L907.2,717.8Z"/><path fill="#1433cd" d="M883.5,736.5L877.0,734.5L877.6,731.4L884.1,733.5Z"/><path fill="#164fdb" d="M898.3,724.8L891.8,729.9L893.0,726.7L899.5,721.1Z"/><path fill="#9cff19" d="M1041.9,604.0L1040.3,609.9L1045.1,592.0L1046.7,589.8Z"/><path fill="#142bc8" d="M875.8,739.5L869.3,736.4L869.9,733.7L876.4,737.1Z"/><path fill="#153bd1" d="M890.6,732.8L884.1,733.5L885.3,730.7L891.8,729.9Z"/><path fill="#39ff19" d="M1009.7,636.2L1006.5,643.4L1011.3,617.7L1014.5,608.3Z"/><path fill="#1324bf" d="M868.1,743.7L861.6,743.0L862.2,739.4L868.7,740.1Z"/><path fill="#121eb4" d="M860.4,748.9L853.9,748.2L854.5,745.3L861.0,746.0Z"/><path fill="#a4ff19" d="M1043.6,603.3L1041.9,604.0L1046.7,589.8L1048.3,590.8Z"/><path fill="#0f1096" d="M844.4,763.9L828.2,762.2L828.8,760.0L845.0,761.8Z"/><path fill="#19ffb5" d="M979.1,684.5L972.6,686.1L977.4,664.3L983.9,662.9Z"/><path fill="#1118a8" d="M852.7,754.8L846.2,754.1L846.8,750.8L853.3,751.6Z"/><path fill="#142cc9" d="M882.9,738.9L876.4,737.1L877.0,734.5L883.5,736.5Z"/><path fill="#aaff19" d="M1045.2,599.1L1043.6,603.3L1048.3,590.8L1049.9,588.6Z"/><path fill="#1326c3" d="M875.2,743.0L868.7,740.1L869.3,736.4L875.8,739.5Z"/><path fill="#1898f5" d="M927.8,713.3L921.3,714.2L922.6,703.7L929.0,702.6Z"/><path fill="#48ff19" d="M1013.0,637.5L1009.7,636.2L1014.5,608.3L1017.7,608.5Z"/><path fill="#1221b9" d="M867.5,746.7L861.0,746.0L861.6,743.0L868.1,743.7Z"/><path fill="#1770e9" d="M920.1,719.3L913.7,720.9L914.9,716.0L921.3,714.2Z"/><path fill="#aeff19" d="M1046.8,601.0L1045.2,599.1L1049.9,588.6L1051.5,589.2Z"/><path fill="#19ccfc" d="M948.4,704.5L942.0,702.1L946.8,692.4L953.2,695.2Z"/><path fill="#111bae" d="M859.8,752.3L853.3,751.6L853.9,748.2L860.4,748.9Z"/><path fill="#1763e4" d="M912.4,724.0L906.0,721.0L907.2,717.8L913.7,720.9Z"/><path fill="#1433cd" d="M890.0,735.8L883.5,736.5L884.1,733.5L890.6,732.8Z"/><path fill="#1015a2" d="M852.1,759.3L845.6,758.6L846.2,754.1L852.7,754.8Z"/><path fill="#165ce1" d="M904.8,724.6L898.3,724.8L899.5,721.1L906.0,721.0Z"/><path fill="#a5ff19" d="M1048.4,605.1L1046.8,601.0L1051.5,589.2L1053.1,593.5Z"/><path fill="#1427c5" d="M882.3,741.3L875.8,739.5L876.4,737.1L882.9,738.9Z"/><path fill="#1547d7" d="M897.1,728.1L890.6,732.8L891.8,729.9L898.3,724.8Z"/><path fill="#19ffaa" d="M982.3,683.2L979.1,684.5L983.9,662.9L987.1,661.7Z"/><path fill="#4aff19" d="M1016.2,637.6L1013.0,637.5L1017.7,608.5L1021.0,606.6Z"/><path fill="#1323bd" d="M874.6,746.2L868.1,743.7L868.7,740.1L875.2,743.0Z"/><path fill="#121eb4" d="M866.9,749.6L860.4,748.9L861.0,746.0L867.5,746.7Z"/><path fill="#9dff19" d="M1050.0,605.3L1048.4,605.1L1053.1,593.5L1054.7,593.7Z"/><path fill="#1118a8" d="M859.2,755.5L852.7,754.8L853.3,751.6L859.8,752.3Z"/><path fill="#142cc9" d="M889.4,738.4L882.9,738.9L883.5,736.5L890.0,735.8Z"/><path fill="#0f129b" d="M851.5,762.5L845.0,761.8L845.6,758.6L852.1,759.3Z"/><path fill="#9dff19" d="M1051.6,605.4L1050.0,605.3L1054.7,593.7L1056.4,593.9Z"/><path fill="#1324c0" d="M881.7,744.6L875.2,743.0L875.8,739.5L882.3,741.3Z"/><path fill="#19ff9d" d="M985.6,680.7L982.3,683.2L987.1,661.7L990.4,658.8Z"/><path fill="#19a2f6" d="M934.3,711.8L927.8,713.3L929.0,702.6L935.5,700.9Z"/><path fill="#56ff19" d="M1019.4,633.3L1016.2,637.6L1021.0,606.6L1024.2,599.9Z"/><path fill="#1220b7" d="M874.0,748.9L867.5,746.7L868.1,743.7L874.6,746.2Z"/><path fill="#1878ed" d="M926.6,718.5L920.1,719.3L921.3,714.2L927.8,713.3Z"/><path fill="#9dff19" d="M1053.2,605.6L1051.6,605.4L1056.4,593.9L1058.0,594.1Z"/><path fill="#19ccfc" d="M954.9,703.5L948.4,704.5L953.2,695.2L959.7,694.2Z"/><path fill="#111bae" d="M866.3,753.0L859.8,752.3L860.4,748.9L866.9,749.6Z"/><path fill="#1763e4" d="M918.9,722.5L912.4,724.0L913.7,720.9L920.1,719.3Z"/><path fill="#153ed2" d="M896.5,731.6L890.0,735.8L890.6,732.8L897.1,728.1Z"/><path fill="#1015a2" d="M858.6,760.0L852.1,759.3L852.7,754.8L859.2,755.5Z"/><path fill="#1659df" d="M911.2,727.5L904.8,724.6L906.0,721.0L912.4,724.0Z"/><path fill="#1427c5" d="M888.8,740.9L882.3,741.3L882.9,738.9L889.4,738.4Z"/><path fill="#0f1096" d="M850.9,764.6L844.4,763.9L845.0,761.8L851.5,762.5Z"/><path fill="#1652dc" d="M903.5,728.0L897.1,728.1L898.3,724.8L904.8,724.6Z"/><path fill="#19ff8b" d="M988.8,677.4L985.6,680.7L990.4,658.8L993.6,655.1Z"/><path fill="#63ff19" d="M1022.7,631.4L1019.4,633.3L1024.2,599.9L1027.4,599.8Z"/><path fill="#1321ba" d="M881.1,747.7L874.6,746.2L875.2,743.0L881.7,744.6Z"/><path fill="#121db2" d="M873.4,751.7L866.9,749.6L867.5,746.7L874.0,748.9Z"/><path fill="#1118a8" d="M865.7,756.2L859.2,755.5L859.8,752.3L866.3,753.0Z"/><path fill="#1535ce" d="M895.9,734.5L889.4,738.4L890.0,735.8L896.5,731.6Z"/><path fill="#0f129b" d="M858.0,763.2L851.5,762.5L852.1,759.3L858.6,760.0Z"/><path fill="#19dafe" d="M958.1,700.5L954.9,703.5L959.7,694.2L962.9,691.0Z"/><path fill="#1324c0" d="M888.2,744.3L881.7,744.6L882.3,741.3L888.8,740.9Z"/><path fill="#19ff80" d="M992.0,675.7L988.8,677.4L993.6,655.1L996.8,653.5Z"/><path fill="#19a7f7" d="M940.7,712.7L934.3,711.8L935.5,700.9L942.0,702.1Z"/><path fill="#65ff19" d="M1025.9,630.7L1022.7,631.4L1027.4,599.8L1030.7,601.6Z"/><path fill="#121eb5" d="M880.5,750.4L874.0,748.9L874.6,746.2L881.1,747.7Z"/><path fill="#187ff0" d="M933.1,717.2L926.6,718.5L927.8,713.3L934.3,711.8Z"/><path fill="#111aad" d="M872.8,754.7L866.3,753.0L866.9,749.6L873.4,751.7Z"/><path fill="#176ae7" d="M925.4,721.7L918.9,722.5L920.1,719.3L926.6,718.5Z"/><path fill="#1648d7" d="M902.9,731.6L896.5,731.6L897.1,728.1L903.5,728.0Z"/><path fill="#1015a2" d="M865.0,760.7L858.6,760.0L859.2,755.5L865.7,756.2Z"/><path fill="#1659df" d="M917.7,726.2L911.2,727.5L912.4,724.0L918.9,722.5Z"/><path fill="#142eca" d="M895.2,737.3L888.8,740.9L889.4,738.4L895.9,734.5Z"/><path fill="#0f1096" d="M857.3,765.4L850.9,764.6L851.5,762.5L858.0,763.2Z"/><path fill="#19ebff" d="M961.4,697.4L958.1,700.5L962.9,691.0L966.2,687.6Z"/><path fill="#1650db" d="M910.0,730.7L903.5,728.0L904.8,724.6L911.2,727.5Z"/><path fill="#19ff73" d="M995.3,670.9L992.0,675.7L996.8,653.5L1000.1,648.1Z"/><path fill="#69ff19" d="M1029.1,630.3L1025.9,630.7L1030.7,601.6L1033.9,598.5Z"/><path fill="#1321ba" d="M887.5,747.6L881.1,747.7L881.7,744.6L888.2,744.3Z"/><path fill="#121cb0" d="M879.9,753.0L873.4,751.7L874.0,748.9L880.5,750.4Z"/><path fill="#1118a8" d="M872.1,757.7L865.7,756.2L866.3,753.0L872.8,754.7Z"/><path fill="#153ed2" d="M902.3,734.6L895.9,734.5L896.5,731.6L902.9,731.6Z"/><path fill="#5eff19" d="M1030.7,629.9L1029.1,630.3L1033.9,598.5L1035.5,615.3Z"/><path fill="#0f129b" d="M864.4,763.9L858.0,763.2L858.6,760.0L865.0,760.7Z"/><path fill="#1427c5" d="M894.6,741.4L888.2,744.3L888.8,740.9L895.2,737.3Z"/><path fill="#19ff64" d="M998.5,668.4L995.3,670.9L1000.1,648.1L1003.3,645.5Z"/><path fill="#19a3f6" d="M947.2,714.6L940.7,712.7L942.0,702.1L948.4,704.5Z"/><path fill="#121eb5" d="M886.9,750.3L880.5,750.4L881.1,747.7L887.5,747.6Z"/><path fill="#1883f1" d="M939.5,717.9L933.1,717.2L934.3,711.8L940.7,712.7Z"/><path fill="#48ff19" d="M1032.3,632.4L1030.7,629.9L1035.5,615.3L1037.1,621.3Z"/><path fill="#19f9ff" d="M967.8,695.9L961.4,697.4L966.2,687.6L972.6,686.1Z"/><path fill="#1119ab" d="M879.2,755.9L872.8,754.7L873.4,751.7L879.9,753.0Z"/><path fill="#1771ea" d="M931.9,720.4L925.4,721.7L926.6,718.5L933.1,717.2Z"/><path fill="#1546d6" d="M909.4,734.1L902.9,731.6L903.5,728.0L910.0,730.7Z"/><path fill="#1014a1" d="M871.5,761.9L865.0,760.7L865.7,756.2L872.1,757.7Z"/><path fill="#1760e2" d="M924.2,725.4L917.7,726.2L918.9,722.5L925.4,721.7Z"/><path fill="#46ff19" d="M1034.0,632.2L1032.3,632.4L1037.1,621.3L1038.7,615.7Z"/><path fill="#1536ce" d="M901.7,737.4L895.2,737.3L895.9,734.5L902.3,734.6Z"/><path fill="#0f1096" d="M863.8,766.1L857.3,765.4L858.0,763.2L864.4,763.9Z"/><path fill="#1650db" d="M916.5,729.5L910.0,730.7L911.2,727.5L917.7,726.2Z"/><path fill="#19ff5a" d="M1001.7,666.2L998.5,668.4L1003.3,645.5L1006.5,643.4Z"/><path fill="#1324be" d="M894.0,745.1L887.5,747.6L888.2,744.3L894.6,741.4Z"/><path fill="#56ff19" d="M1035.6,627.3L1034.0,632.2L1038.7,615.7L1040.3,609.9Z"/><path fill="#121cb0" d="M886.3,753.1L879.9,753.0L880.5,750.4L886.9,750.3Z"/><path fill="#1117a6" d="M878.6,758.8L872.1,757.7L872.8,754.7L879.2,755.9Z"/><path fill="#153cd1" d="M908.8,737.0L902.3,734.6L902.9,731.6L909.4,734.1Z"/><path fill="#6aff19" d="M1037.2,622.7L1035.6,627.3L1040.3,609.9L1041.9,604.0Z"/><path fill="#0f119a" d="M870.9,764.8L864.4,763.9L865.0,760.7L871.5,761.9Z"/><path fill="#142cc9" d="M901.1,741.6L894.6,741.4L895.2,737.3L901.7,737.4Z"/><path fill="#19ff4a" d="M1005.0,660.9L1001.7,666.2L1006.5,643.4L1009.7,636.2Z"/><path fill="#19a4f7" d="M953.7,713.6L947.2,714.6L948.4,704.5L954.9,703.5Z"/><path fill="#1220b9" d="M893.4,748.3L886.9,750.3L887.5,747.6L894.0,745.1Z"/><path fill="#1881f1" d="M946.0,719.5L939.5,717.9L940.7,712.7L947.2,714.6Z"/><path fill="#76ff19" d="M1038.8,620.7L1037.2,622.7L1041.9,604.0L1043.6,603.3Z"/><path fill="#19fffa" d="M974.3,694.3L967.8,695.9L972.6,686.1L979.1,684.5Z"/><path fill="#1119ab" d="M885.7,756.2L879.2,755.9L879.9,753.0L886.3,753.1Z"/><path fill="#1875ec" d="M938.3,721.1L931.9,720.4L933.1,717.2L939.5,717.9Z"/><path fill="#1546d6" d="M915.9,733.0L909.4,734.1L910.0,730.7L916.5,729.5Z"/><path fill="#1014a0" d="M878.0,762.7L871.5,761.9L872.1,757.7L878.6,758.8Z"/><path fill="#1767e5" d="M930.7,724.2L924.2,725.4L925.4,721.7L931.9,720.4Z"/><path fill="#80ff19" d="M1040.4,617.4L1038.8,620.7L1043.6,603.3L1045.2,599.1Z"/><path fill="#1534cd" d="M908.2,739.7L901.7,737.4L902.3,734.6L908.8,737.0Z"/><path fill="#0f1096" d="M870.3,766.8L863.8,766.1L864.4,763.9L870.9,764.8Z"/><path fill="#1656de" d="M923.0,728.8L916.5,729.5L917.7,726.2L924.2,725.4Z"/><path fill="#19ff40" d="M1008.2,663.2L1005.0,660.9L1009.7,636.2L1013.0,637.5Z"/><path fill="#1326c2" d="M900.5,745.4L894.0,745.1L894.6,741.4L901.1,741.6Z"/><path fill="#84ff19" d="M1042.0,618.9L1040.4,617.4L1045.2,599.1L1046.8,601.0Z"/><path fill="#121eb3" d="M892.8,751.4L886.3,753.1L886.9,750.3L893.4,748.3Z"/><path fill="#19b0f8" d="M956.9,711.0L953.7,713.6L954.9,703.5L958.1,700.5Z"/><path fill="#1117a6" d="M885.1,759.1L878.6,758.8L879.2,755.9L885.7,756.2Z"/><path fill="#153cd1" d="M915.3,736.0L908.8,737.0L909.4,734.1L915.9,733.0Z"/><path fill="#7bff19" d="M1043.6,622.7L1042.0,618.9L1046.8,601.0L1048.4,605.1Z"/><path fill="#0f119a" d="M877.4,765.5L870.9,764.8L871.5,761.9L878.0,762.7Z"/><path fill="#19ffef" d="M977.6,693.0L974.3,694.3L979.1,684.5L982.3,683.2Z"/><path fill="#142bc8" d="M907.6,743.6L901.1,741.6L901.7,737.4L908.2,739.7Z"/><path fill="#19ff44" d="M1011.4,665.1L1008.2,663.2L1013.0,637.5L1016.2,637.6Z"/><path fill="#1322bc" d="M899.9,748.6L893.4,748.3L894.0,745.1L900.5,745.4Z"/><path fill="#1882f1" d="M952.5,718.6L946.0,719.5L947.2,714.6L953.7,713.6Z"/><path fill="#74ff19" d="M1045.3,622.9L1043.6,622.7L1048.4,605.1L1050.0,605.3Z"/><path fill="#111bae" d="M892.2,755.0L885.7,756.2L886.3,753.1L892.8,751.4Z"/><path fill="#1773eb" d="M944.8,722.6L938.3,721.1L939.5,717.9L946.0,719.5Z"/><path fill="#19c1fb" d="M960.2,708.3L956.9,711.0L958.1,700.5L961.4,697.4Z"/><path fill="#164cd9" d="M922.4,732.3L915.9,733.0L916.5,729.5L923.0,728.8Z"/><path fill="#1014a0" d="M884.5,763.3L878.0,762.7L878.6,758.8L885.1,759.1Z"/><path fill="#176be7" d="M937.1,724.8L930.7,724.2L931.9,720.4L938.3,721.1Z"/><path fill="#74ff19" d="M1046.9,623.0L1045.3,622.9L1050.0,605.3L1051.6,605.4Z"/><path fill="#1534cd" d="M914.7,738.8L908.2,739.7L908.8,737.0L915.3,736.0Z"/><path fill="#0f1096" d="M876.8,767.5L870.3,766.8L870.9,764.8L877.4,765.5Z"/><path fill="#19ffe3" d="M980.8,690.6L977.6,693.0L982.3,683.2L985.6,680.7Z"/><path fill="#165ce1" d="M929.5,727.6L923.0,728.8L924.2,725.4L930.7,724.2Z"/><path fill="#19ff3f" d="M1014.7,662.9L1011.4,665.1L1016.2,637.6L1019.4,633.3Z"/><path fill="#1325c1" d="M907.0,747.3L900.5,745.4L901.1,741.6L907.6,743.6Z"/><path fill="#74ff19" d="M1048.5,622.9L1046.9,623.0L1051.6,605.4L1053.2,605.6Z"/><path fill="#121fb6" d="M899.3,751.8L892.8,751.4L893.4,748.3L899.9,748.6Z"/><path fill="#1118a8" d="M891.6,758.4L885.1,759.1L885.7,756.2L892.2,755.0Z"/><path fill="#1542d4" d="M921.8,735.4L915.3,736.0L915.9,733.0L922.4,732.3Z"/><path fill="#188df3" d="M955.7,716.1L952.5,718.6L953.7,713.6L956.9,711.0Z"/><path fill="#0f119a" d="M883.9,766.2L877.4,765.5L878.0,762.7L884.5,763.3Z"/><path fill="#19ffd1" d="M984.0,687.4L980.8,690.6L985.6,680.7L988.8,677.4Z"/><path fill="#142bc8" d="M914.1,742.9L907.6,743.6L908.2,739.7L914.7,738.8Z"/><path fill="#19ff33" d="M1017.9,659.5L1014.7,662.9L1019.4,633.3L1022.7,631.4Z"/><path fill="#19cffd" d="M966.6,706.7L960.2,708.3L961.4,697.4L967.8,695.9Z"/><path fill="#1322bb" d="M906.4,750.3L899.9,748.6L900.5,745.4L907.0,747.3Z"/><path fill="#121cb0" d="M898.7,755.4L892.2,755.0L892.8,751.4L899.3,751.8Z"/><path fill="#1875ec" d="M951.3,721.6L944.8,722.6L946.0,719.5L952.5,718.6Z"/><path fill="#1651dc" d="M928.9,731.3L922.4,732.3L923.0,728.8L929.5,727.6Z"/><path fill="#1015a1" d="M891.0,763.2L884.5,763.3L885.1,759.1L891.6,758.4Z"/><path fill="#1769e7" d="M943.6,726.1L937.1,724.8L938.3,721.1L944.8,722.6Z"/><path fill="#199cf5" d="M959.0,713.6L955.7,716.1L956.9,711.0L960.2,708.3Z"/><path fill="#1539d0" d="M921.2,738.3L914.7,738.8L915.3,736.0L921.8,735.4Z"/><path fill="#0f1096" d="M883.3,768.2L876.8,767.5L877.4,765.5L883.9,766.2Z"/><path fill="#19ffc2" d="M987.3,685.7L984.0,687.4L988.8,677.4L992.0,675.7Z"/><path fill="#1760e2" d="M935.9,728.2L929.5,727.6L930.7,724.2L937.1,724.8Z"/><path fill="#19ff2a" d="M1021.1,657.0L1017.9,659.5L1022.7,631.4L1025.9,630.7Z"/><path fill="#1325c1" d="M913.5,746.7L907.0,747.3L907.6,743.6L914.1,742.9Z"/><path fill="#121fb6" d="M905.8,753.4L899.3,751.8L899.9,748.6L906.4,750.3Z"/><path fill="#1119aa" d="M898.1,758.9L891.6,758.4L892.2,755.0L898.7,755.4Z"/><path fill="#1547d7" d="M928.2,734.3L921.8,735.4L922.4,732.3L928.9,731.3Z"/><path fill="#0f129b" d="M890.4,766.6L883.9,766.2L884.5,763.3L891.0,763.2Z"/><path fill="#19ffae" d="M990.5,681.2L987.3,685.7L992.0,675.7L995.3,670.9Z"/><path fill="#142fcb" d="M920.6,742.3L914.1,742.9L914.7,738.8L921.2,738.3Z"/><path fill="#187eef" d="M954.5,719.3L951.3,721.6L952.5,718.6L955.7,716.1Z"/><path fill="#19ff23" d="M1024.4,653.6L1021.1,657.0L1025.9,630.7L1029.1,630.3Z"/><path fill="#19dcfe" d="M973.1,705.0L966.6,706.7L967.8,695.9L974.3,694.3Z"/><path fill="#1322bb" d="M912.9,749.9L906.4,750.3L907.0,747.3L913.5,746.7Z"/><path fill="#19a9f7" d="M965.4,712.0L959.0,713.6L960.2,708.3L966.6,706.7Z"/><path fill="#121cb0" d="M905.2,756.8L898.7,755.4L899.3,751.8L905.8,753.4Z"/><path fill="#1655dd" d="M935.3,731.7L928.9,731.3L929.5,727.6L935.9,728.2Z"/><path fill="#1015a3" d="M897.5,763.9L891.0,763.2L891.6,758.4L898.1,758.9Z"/><path fill="#176be7" d="M950.1,725.2L943.6,726.1L944.8,722.6L951.3,721.6Z"/><path fill="#19ff1a" d="M1026.0,648.9L1024.4,653.6L1029.1,630.3L1030.7,629.9Z"/><path fill="#153ed2" d="M927.6,737.2L921.2,738.3L921.8,735.4L928.2,734.3Z"/><path fill="#0f1096" d="M889.8,768.9L883.3,768.2L883.9,766.2L890.4,766.6Z"/><path fill="#19ff99" d="M993.7,678.7L990.5,681.2L995.3,670.9L998.5,668.4Z"/><path fill="#175fe2" d="M942.4,729.3L935.9,728.2L937.1,724.8L943.6,726.1Z"/><path fill="#188bf3" d="M957.8,716.8L954.5,719.3L955.7,716.1L959.0,713.6Z"/><path fill="#1427c4" d="M920.0,746.2L913.5,746.7L914.1,742.9L920.6,742.3Z"/><path fill="#1dff19" d="M1027.6,648.4L1026.0,648.9L1030.7,629.9L1032.3,632.4Z"/><path fill="#121fb6" d="M912.3,753.0L905.8,753.4L906.4,750.3L912.9,749.9Z"/><path fill="#19e6ff" d="M976.3,703.8L973.1,705.0L974.3,694.3L977.6,693.0Z"/><path fill="#1119aa" d="M904.6,760.2L898.1,758.9L898.7,755.4L905.2,756.8Z"/><path fill="#1dff19" d="M1029.2,647.0L1027.6,648.4L1032.3,632.4L1034.0,632.2Z"/><path fill="#164bd8" d="M934.7,734.7L928.2,734.3L928.9,731.3L935.3,731.7Z"/><path fill="#10129b" d="M896.9,767.3L890.4,766.6L891.0,763.2L897.5,763.9Z"/><path fill="#19ff8b" d="M997.0,676.4L993.7,678.7L998.5,668.4L1001.7,666.2Z"/><path fill="#1534cd" d="M927.0,741.4L920.6,742.3L921.2,738.3L927.6,737.2Z"/><path fill="#1323be" d="M919.4,749.5L912.9,749.9L913.5,746.7L920.0,746.2Z"/><path fill="#1874eb" d="M953.3,722.9L950.1,725.2L951.3,721.6L954.5,719.3Z"/><path fill="#28ff19" d="M1030.8,642.3L1029.2,647.0L1034.0,632.2L1035.6,627.3Z"/><path fill="#19b5f9" d="M971.9,710.3L965.4,712.0L966.6,706.7L973.1,705.0Z"/><path fill="#121cb0" d="M911.7,756.6L905.2,756.8L905.8,753.4L912.3,753.0Z"/><path fill="#1897f5" d="M964.2,715.2L957.8,716.8L959.0,713.6L965.4,712.0Z"/><path fill="#19f0ff" d="M979.6,701.6L976.3,703.8L977.6,693.0L980.8,690.6Z"/><path fill="#1655dd" d="M941.8,732.7L935.3,731.7L935.9,728.2L942.4,729.3Z"/><path fill="#1015a2" d="M904.0,764.8L897.5,763.9L898.1,758.9L904.6,760.2Z"/><path fill="#36ff19" d="M1032.4,640.8L1030.8,642.3L1035.6,627.3L1037.2,622.7Z"/><path fill="#1542d4" d="M934.1,737.6L927.6,737.2L928.2,734.3L934.7,734.7Z"/><path fill="#0f1096" d="M896.3,769.6L889.8,768.9L890.4,766.6L896.9,767.3Z"/><path fill="#19ff7c" d="M1000.2,671.8L997.0,676.4L1001.7,666.2L1005.0,660.9Z"/><path fill="#1761e3" d="M948.9,728.4L942.4,729.3L943.6,726.1L950.1,725.2Z"/><path fill="#1429c7" d="M926.4,745.4L920.0,746.2L920.6,742.3L927.0,741.4Z"/><path fill="#187ff0" d="M956.6,720.6L953.3,722.9L954.5,719.3L957.8,716.8Z"/><path fill="#3fff19" d="M1034.1,640.1L1032.4,640.8L1037.2,622.7L1038.8,620.7Z"/><path fill="#1220b8" d="M918.8,752.7L912.3,753.0L912.9,749.9L919.4,749.5Z"/><path fill="#19ffff" d="M982.8,698.6L979.6,701.6L980.8,690.6L984.0,687.4Z"/><path fill="#1119aa" d="M911.0,760.0L904.6,760.2L905.2,756.8L911.7,756.6Z"/><path fill="#47ff19" d="M1035.7,637.4L1034.1,640.1L1038.8,620.7L1040.4,617.4Z"/><path fill="#164bd9" d="M941.2,735.5L934.7,734.7L935.3,731.7L941.8,732.7Z"/><path fill="#19c0fa" d="M975.2,709.0L971.9,710.3L973.1,705.0L976.3,703.8Z"/><path fill="#0f129b" d="M903.4,768.1L896.9,767.3L897.5,763.9L904.0,764.8Z"/><path fill="#19ff77" d="M1003.4,674.5L1000.2,671.8L1005.0,660.9L1008.2,663.2Z"/><path fill="#1537cf" d="M933.5,741.7L927.0,741.4L927.6,737.2L934.1,737.6Z"/><path fill="#1325c0" d="M925.8,748.7L919.4,749.5L920.0,746.2L926.4,745.4Z"/><path fill="#4bff19" d="M1037.3,639.0L1035.7,637.4L1040.4,617.4L1042.0,618.9Z"/><path fill="#121db2" d="M918.1,756.3L911.7,756.6L912.3,753.0L918.8,752.7Z"/><path fill="#1769e7" d="M952.1,726.2L948.9,728.4L950.1,725.2L953.3,722.9Z"/><path fill="#19a3f7" d="M970.7,713.5L964.2,715.2L965.4,712.0L971.9,710.3Z"/><path fill="#19fff1" d="M986.1,696.8L982.8,698.6L984.0,687.4L987.3,685.7Z"/><path fill="#1657de" d="M948.3,731.7L941.8,732.7L942.4,729.3L948.9,728.4Z"/><path fill="#1015a3" d="M910.4,765.0L904.0,764.8L904.6,760.2L911.0,760.0Z"/><path fill="#188af3" d="M963.0,719.0L956.6,720.6L957.8,716.8L964.2,715.2Z"/><path fill="#42ff19" d="M1038.9,642.3L1037.3,639.0L1042.0,618.9L1043.6,622.7Z"/><path fill="#19cbfc" d="M978.4,706.9L975.2,709.0L976.3,703.8L979.6,701.6Z"/><path fill="#1542d4" d="M940.6,738.3L934.1,737.6L934.7,734.7L941.2,735.5Z"/><path fill="#0f1096" d="M902.8,770.3L896.3,769.6L896.9,767.3L903.4,768.1Z"/><path fill="#19ff7e" d="M1006.7,677.0L1003.4,674.5L1008.2,663.2L1011.4,665.1Z"/><path fill="#142cc9" d="M932.9,745.5L926.4,745.4L927.0,741.4L933.5,741.7Z"/><path fill="#3cff19" d="M1040.5,642.5L1038.9,642.3L1043.6,622.7L1045.3,622.9Z"/><path fill="#1322bb" d="M925.2,751.9L918.8,752.7L919.4,749.5L925.8,748.7Z"/><path fill="#1774eb" d="M955.4,724.0L952.1,726.2L953.3,722.9L956.6,720.6Z"/><path fill="#19ffdf" d="M989.3,692.7L986.1,696.8L987.3,685.7L990.5,681.2Z"/><path fill="#111aac" d="M917.5,759.8L911.0,760.0L911.7,756.6L918.1,756.3Z"/><path fill="#3cff19" d="M1042.1,642.7L1040.5,642.5L1045.3,622.9L1046.9,623.0Z"/><path fill="#164dda" d="M947.7,734.5L941.2,735.5L941.8,732.7L948.3,731.7Z"/><path fill="#19dafe" d="M981.6,704.0L978.4,706.9L979.6,701.6L982.8,698.6Z"/><path fill="#10129b" d="M909.8,768.3L903.4,768.1L904.0,764.8L910.4,765.0Z"/><path fill="#19ff7d" d="M1009.9,675.5L1006.7,677.0L1011.4,665.1L1014.7,662.9Z"/><path fill="#1538cf" d="M940.0,742.2L933.5,741.7L934.1,737.6L940.6,738.3Z"/><path fill="#19aef8" d="M974.0,712.2L970.7,713.5L971.9,710.3L975.2,709.0Z"/><path fill="#175fe2" d="M951.5,729.7L948.3,731.7L948.9,728.4L952.1,726.2Z"/><path fill="#1326c3" d="M932.3,748.7L925.8,748.7L926.4,745.4L932.9,745.5Z"/><path fill="#3cff19" d="M1043.8,642.8L1042.1,642.7L1046.9,623.0L1048.5,622.9Z"/><path fill="#121eb5" d="M924.6,755.6L918.1,756.3L918.8,752.7L925.2,751.9Z"/><path fill="#19ffca" d="M992.5,690.1L989.3,692.7L990.5,681.2L993.7,678.7Z"/><path fill="#1016a4" d="M916.9,764.7L910.4,765.0L911.0,760.0L917.5,759.8Z"/><path fill="#1896f5" d="M969.5,717.3L963.0,719.0L964.2,715.2L970.7,713.5Z"/><path fill="#19e8ff" d="M984.9,702.3L981.6,704.0L982.8,698.6L986.1,696.8Z"/><path fill="#1545d6" d="M947.1,737.3L940.6,738.3L941.2,735.5L947.7,734.5Z"/><path fill="#0f1097" d="M909.2,770.7L902.8,770.3L903.4,768.1L909.8,768.3Z"/><path fill="#19ff72" d="M1013.1,671.6L1009.9,675.5L1014.7,662.9L1017.9,659.5Z"/><path fill="#187eef" d="M961.8,722.4L955.4,724.0L956.6,720.6L963.0,719.0Z"/><path fill="#19b8f9" d="M977.2,710.1L974.0,712.2L975.2,709.0L978.4,706.9Z"/><path fill="#142dc9" d="M939.4,745.8L932.9,745.5L933.5,741.7L940.0,742.2Z"/><path fill="#1768e6" d="M954.8,727.6L951.5,729.7L952.1,726.2L955.4,724.0Z"/><path fill="#1655dd" d="M950.9,732.6L947.7,734.5L948.3,731.7L951.5,729.7Z"/><path fill="#1323bd" d="M931.7,751.9L925.2,751.9L925.8,748.7L932.3,748.7Z"/><path fill="#19ffbb" d="M995.8,687.9L992.5,690.1L993.7,678.7L997.0,676.4Z"/><path fill="#111bae" d="M924.0,759.2L917.5,759.8L918.1,756.3L924.6,755.6Z"/><path fill="#19f8ff" d="M988.1,698.3L984.9,702.3L986.1,696.8L989.3,692.7Z"/><path fill="#10139d" d="M916.3,768.2L909.8,768.3L910.4,765.0L916.9,764.7Z"/><path fill="#19ff66" d="M1016.4,669.7L1013.1,671.6L1017.9,659.5L1021.1,657.0Z"/><path fill="#153bd1" d="M946.5,741.2L940.0,742.2L940.6,738.3L947.1,737.3Z"/><path fill="#19c7fb" d="M980.4,707.3L977.2,710.1L978.4,706.9L981.6,704.0Z"/><path fill="#1427c4" d="M938.8,748.9L932.3,748.7L932.9,745.5L939.4,745.8Z"/><path fill="#19a0f6" d="M972.8,716.0L969.5,717.3L970.7,713.5L974.0,712.2Z"/><path fill="#175de1" d="M954.2,730.6L950.9,732.6L951.5,729.7L954.8,727.6Z"/><path fill="#164cd9" d="M950.3,735.4L947.1,737.3L947.7,734.5L950.9,732.6Z"/><path fill="#121fb7" d="M931.1,755.5L924.6,755.6L925.2,751.9L931.7,751.9Z"/><path fill="#19ffa7" d="M999.0,684.3L995.8,687.9L997.0,676.4L1000.2,671.8Z"/><path fill="#1772ea" d="M961.2,726.0L954.8,727.6L955.4,724.0L961.8,722.4Z"/><path fill="#1117a7" d="M923.4,764.2L916.9,764.7L917.5,759.8L924.0,759.2Z"/><path fill="#19fff5" d="M991.3,695.8L988.1,698.3L989.3,692.7L992.5,690.1Z"/><path fill="#0f1098" d="M915.7,770.5L909.2,770.7L909.8,768.3L916.3,768.2Z"/><path fill="#19ff5b" d="M1019.6,666.3L1016.4,669.7L1021.1,657.0L1024.4,653.6Z"/><path fill="#1888f3" d="M968.3,720.6L961.8,722.4L963.0,719.0L969.5,717.3Z"/><path fill="#19d5fd" d="M983.7,705.6L980.4,707.3L981.6,704.0L984.9,702.3Z"/><path fill="#1430cb" d="M945.9,744.8L939.4,745.8L940.0,742.2L946.5,741.2Z"/><path fill="#19aaf8" d="M976.0,714.0L972.8,716.0L974.0,712.2L977.2,710.1Z"/><path fill="#1324be" d="M938.2,751.9L931.7,751.9L932.3,748.7L938.8,748.9Z"/><path fill="#1654dd" d="M953.6,733.5L950.3,735.4L950.9,732.6L954.2,730.6Z"/><path fill="#1542d4" d="M949.7,739.5L946.5,741.2L947.1,737.3L950.3,735.4Z"/><path fill="#19ffa2" d="M1002.2,687.5L999.0,684.3L1000.2,671.8L1003.4,674.5Z"/><path fill="#121cb0" d="M930.5,759.1L924.0,759.2L924.6,755.6L931.1,755.5Z"/><path fill="#19ff4e" d="M1021.2,664.1L1019.6,666.3L1024.4,653.6L1026.0,648.9Z"/><path fill="#1766e5" d="M960.6,729.1L954.2,730.6L954.8,727.6L961.2,726.0Z"/><path fill="#19ffe5" d="M994.6,693.5L991.3,695.8L992.5,690.1L995.8,687.9Z"/><path fill="#10139f" d="M922.8,767.7L916.3,768.2L916.9,764.7L923.4,764.2Z"/><path fill="#19e6ff" d="M986.9,701.6L983.7,705.6L984.9,702.3L988.1,698.3Z"/><path fill="#19ff49" d="M1022.8,667.3L1021.2,664.1L1026.0,648.9L1027.6,648.4Z"/><path fill="#1428c6" d="M945.3,747.9L938.8,748.9L939.4,745.8L945.9,744.8Z"/><path fill="#19b9f9" d="M979.2,711.2L976.0,714.0L977.2,710.1L980.4,707.3Z"/><path fill="#1220b8" d="M937.6,755.3L931.1,755.5L931.7,751.9L938.2,751.9Z"/><path fill="#1892f4" d="M971.6,719.3L968.3,720.6L969.5,717.3L972.8,716.0Z"/><path fill="#1649d8" d="M953.0,737.7L949.7,739.5L950.3,735.4L953.6,733.5Z"/><path fill="#19ffb1" d="M1005.5,691.0L1002.2,687.5L1003.4,674.5L1006.7,677.0Z"/><path fill="#1536ce" d="M949.1,743.3L945.9,744.8L946.5,741.2L949.7,739.5Z"/><path fill="#187bee" d="M967.7,724.3L961.2,726.0L961.8,722.4L968.3,720.6Z"/><path fill="#19ff48" d="M1024.5,665.8L1022.8,667.3L1027.6,648.4L1029.2,647.0Z"/><path fill="#1118a9" d="M929.9,764.0L923.4,764.2L924.0,759.2L930.5,759.1Z"/><path fill="#19ffd4" d="M997.8,690.3L994.6,693.5L995.8,687.9L999.0,684.3Z"/><path fill="#165ce1" d="M960.0,732.0L953.6,733.5L954.2,730.6L960.6,729.1Z"/><path fill="#0f119a" d="M922.2,770.1L915.7,770.5L916.3,768.2L922.8,767.7Z"/><path fill="#19f7ff" d="M990.1,699.1L986.9,701.6L988.1,698.3L991.3,695.8Z"/><path fill="#19ff3e" d="M1026.1,662.6L1024.5,665.8L1029.2,647.0L1030.8,642.3Z"/><path fill="#19c6fb" d="M982.5,709.4L979.2,711.2L980.4,707.3L983.7,705.6Z"/><path fill="#1325c1" d="M944.7,750.9L938.2,751.9L938.8,748.9L945.3,747.9Z"/><path fill="#199cf6" d="M974.8,717.3L971.6,719.3L972.8,716.0L976.0,714.0Z"/><path fill="#19ffb4" d="M1008.7,690.6L1005.5,691.0L1006.7,677.0L1009.9,675.5Z"/><path fill="#121db2" d="M937.0,758.6L930.5,759.1L931.1,755.5L937.6,755.3Z"/><path fill="#153dd2" d="M952.4,741.6L949.1,743.3L949.7,739.5L953.0,737.7Z"/><path fill="#19ff35" d="M1027.7,662.1L1026.1,662.6L1030.8,642.3L1032.4,640.8Z"/><path fill="#142dc9" d="M948.5,746.4L945.3,747.9L945.9,744.8L949.1,743.3Z"/><path fill="#176fe9" d="M967.1,727.3L960.6,729.1L961.2,726.0L967.7,724.3Z"/><path fill="#19ffd2" d="M1001.0,693.8L997.8,690.3L999.0,684.3L1002.2,687.5Z"/><path fill="#1014a1" d="M929.3,767.4L922.8,767.7L923.4,764.2L929.9,764.0Z"/><path fill="#1651db" d="M959.4,736.2L953.0,737.7L953.6,733.5L960.0,732.0Z"/><path fill="#19fff9" d="M993.4,696.8L990.1,699.1L991.3,695.8L994.6,693.5Z"/><path fill="#1884f2" d="M971.0,722.9L967.7,724.3L968.3,720.6L971.6,719.3Z"/><path fill="#19ff31" d="M1029.3,661.6L1027.7,662.1L1032.4,640.8L1034.1,640.1Z"/><path fill="#19d7fe" d="M985.7,705.6L982.5,709.4L983.7,705.6L986.9,701.6Z"/><path fill="#1322bb" d="M944.1,754.3L937.6,755.3L938.2,751.9L944.7,750.9Z"/><path fill="#19aaf7" d="M978.0,714.7L974.8,717.3L976.0,714.0L979.2,711.2Z"/><path fill="#19ffa4" d="M1011.9,685.8L1008.7,690.6L1009.9,675.5L1013.1,671.6Z"/><path fill="#19ff2a" d="M1030.9,658.6L1029.3,661.6L1034.1,640.1L1035.7,637.4Z"/><path fill="#1119ab" d="M936.4,763.3L929.9,764.0L930.5,759.1L937.0,758.6Z"/><path fill="#1433cc" d="M951.8,744.9L948.5,746.4L949.1,743.3L952.4,741.6Z"/><path fill="#19ffe3" d="M1004.3,697.7L1001.0,693.8L1002.2,687.5L1005.5,691.0Z"/><path fill="#1427c4" d="M947.9,749.5L944.7,750.9L945.3,747.9L948.5,746.4Z"/><path fill="#1765e5" d="M966.5,730.1L960.0,732.0L960.6,729.1L967.1,727.3Z"/><path fill="#10129c" d="M928.7,769.7L922.2,770.1L922.8,767.7L929.3,767.4Z"/><path fill="#19ffe9" d="M996.6,693.9L993.4,696.8L994.6,693.5L997.8,690.3Z"/><path fill="#1544d5" d="M958.8,740.1L952.4,741.6L953.0,737.7L959.4,736.2Z"/><path fill="#188df3" d="M974.2,721.0L971.0,722.9L971.6,719.3L974.8,717.3Z"/><path fill="#19ff26" d="M1032.5,658.9L1030.9,658.6L1035.7,637.4L1037.3,639.0Z"/><path fill="#19eaff" d="M989.0,703.1L985.7,705.6L986.9,701.6L990.1,699.1Z"/><path fill="#1878ed" d="M970.4,726.0L967.1,727.3L967.7,724.3L971.0,722.9Z"/><path fill="#19b7f9" d="M981.3,712.9L978.0,714.7L979.2,711.2L982.5,709.4Z"/><path fill="#19ff93" d="M1015.2,685.6L1011.9,685.8L1013.1,671.6L1016.4,669.7Z"/><path fill="#121eb5" d="M943.5,757.6L937.0,758.6L937.6,755.3L944.1,754.3Z"/><path fill="#19ff2d" d="M1034.2,661.9L1032.5,658.9L1037.3,639.0L1038.9,642.3Z"/><path fill="#19ffeb" d="M1007.5,697.9L1004.3,697.7L1005.5,691.0L1008.7,690.6Z"/><path fill="#1016a4" d="M935.8,766.5L929.3,767.4L929.9,764.0L936.4,763.3Z"/><path fill="#142ac7" d="M951.2,748.2L947.9,749.5L948.5,746.4L951.8,744.9Z"/><path fill="#1324be" d="M947.3,753.1L944.1,754.3L944.7,750.9L947.9,749.5Z"/><path fill="#165adf" d="M965.9,734.3L959.4,736.2L960.0,732.0L966.5,730.1Z"/><path fill="#19ffe9" d="M999.9,697.5L996.6,693.9L997.8,690.3L1001.0,693.8Z"/><path fill="#199bf5" d="M977.4,718.4L974.2,721.0L974.8,717.3L978.0,714.7Z"/><path fill="#19ff32" d="M1035.8,662.1L1034.2,661.9L1038.9,642.3L1040.5,642.5Z"/><path fill="#1539d0" d="M958.3,743.4L951.8,744.9L952.4,741.6L958.8,740.1Z"/><path fill="#19f7ff" d="M992.2,700.8L989.0,703.1L990.1,699.1L993.4,696.8Z"/><path fill="#1880f0" d="M973.6,724.1L970.4,726.0L971.0,722.9L974.2,721.0Z"/><path fill="#176ee8" d="M969.8,728.9L966.5,730.1L967.1,727.3L970.4,726.0Z"/><path fill="#19c8fc" d="M984.5,709.1L981.3,712.9L982.5,709.4L985.7,705.6Z"/><path fill="#19ff88" d="M1018.4,683.0L1015.2,685.6L1016.4,669.7L1019.6,666.3Z"/><path fill="#19ff32" d="M1037.4,662.2L1035.8,662.1L1040.5,642.5L1042.1,642.7Z"/><path fill="#111bae" d="M942.9,762.3L936.4,763.3L937.0,758.6L943.5,757.6Z"/><path fill="#19ffdc" d="M1010.8,692.7L1007.5,697.9L1008.7,690.6L1011.9,685.8Z"/><path fill="#10139f" d="M935.2,768.8L928.7,769.7L929.3,767.4L935.8,766.5Z"/><path fill="#1326c2" d="M950.6,751.9L947.3,753.1L947.9,749.5L951.2,748.2Z"/><path fill="#19fffb" d="M1003.1,701.6L999.9,697.5L1001.0,693.8L1004.3,697.7Z"/><path fill="#1220b8" d="M946.7,756.5L943.5,757.6L944.1,754.3L947.3,753.1Z"/><path fill="#164cd9" d="M965.3,738.2L958.8,740.1L959.4,736.2L965.9,734.3Z"/><path fill="#19a8f7" d="M980.7,716.6L977.4,718.4L978.0,714.7L981.3,712.9Z"/><path fill="#19ff32" d="M1039.0,662.4L1037.4,662.2L1042.1,642.7L1043.8,642.8Z"/><path fill="#19fff9" d="M995.4,698.2L992.2,700.8L993.4,696.8L996.6,693.9Z"/><path fill="#188cf3" d="M976.8,721.5L973.6,724.1L974.2,721.0L977.4,718.4Z"/><path fill="#19ff7e" d="M1020.0,680.6L1018.4,683.0L1019.6,666.3L1021.2,664.1Z"/><path fill="#1430cb" d="M957.7,746.6L951.2,748.2L951.8,744.9L958.3,743.4Z"/><path fill="#1875ec" d="M973.0,727.0L969.8,728.9L970.4,726.0L973.6,724.1Z"/><path fill="#19dbfe" d="M987.8,706.6L984.5,709.1L985.7,705.6L989.0,703.1Z"/><path fill="#1761e3" d="M969.2,733.0L965.9,734.3L966.5,730.1L969.8,728.9Z"/><path fill="#19ffcc" d="M1014.0,693.0L1010.8,692.7L1011.9,685.8L1015.2,685.6Z"/><path fill="#19ff7a" d="M1021.6,678.6L1020.0,680.6L1021.2,664.1L1022.8,667.3Z"/><path fill="#1117a7" d="M942.3,765.6L935.8,766.5L936.4,763.3L942.9,762.3Z"/><path fill="#19faff" d="M1006.3,702.1L1003.1,701.6L1004.3,697.7L1007.5,697.9Z"/><path fill="#1322bb" d="M950.0,755.4L946.7,756.5L947.3,753.1L950.6,751.9Z"/><path fill="#19b8f9" d="M983.9,713.0L980.7,716.6L981.3,712.9L984.5,709.1Z"/><path fill="#121cb1" d="M946.1,761.4L942.9,762.3L943.5,757.6L946.7,756.5Z"/><path fill="#1541d4" d="M964.7,741.5L958.3,743.4L958.8,740.1L965.3,738.2Z"/><path fill="#19fffa" d="M998.7,701.9L995.4,698.2L996.6,693.9L999.9,697.5Z"/><path fill="#1898f5" d="M980.1,719.8L976.8,721.5L977.4,718.4L980.7,716.6Z"/><path fill="#19ff76" d="M1023.3,674.9L1021.6,678.6L1022.8,667.3L1024.5,665.8Z"/><path fill="#1880f0" d="M976.2,724.5L973.0,727.0L973.6,724.1L976.8,721.5Z"/><path fill="#1428c6" d="M957.0,750.3L950.6,751.9L951.2,748.2L957.7,746.6Z"/><path fill="#19e9ff" d="M991.0,704.3L987.8,706.6L989.0,703.1L992.2,700.8Z"/><path fill="#1769e6" d="M972.4,731.2L969.2,733.0L969.8,728.9L973.0,727.0Z"/><path fill="#1654dd" d="M968.6,736.9L965.3,738.2L965.9,734.3L969.2,733.0Z"/><path fill="#19ffc5" d="M1017.2,691.7L1014.0,693.0L1015.2,685.6L1018.4,683.0Z"/><path fill="#19ff69" d="M1024.9,670.3L1023.3,674.9L1024.5,665.8L1026.1,662.6Z"/><path fill="#1015a2" d="M941.7,767.8L935.2,768.8L935.8,766.5L942.3,765.6Z"/><path fill="#19fff6" d="M1009.6,696.7L1006.3,702.1L1007.5,697.9L1010.8,692.7Z"/><path fill="#19cafc" d="M987.2,710.5L983.9,713.0L984.5,709.1L987.8,706.6Z"/><path fill="#121eb4" d="M949.4,760.4L946.1,761.4L946.7,756.5L950.0,755.4Z"/><path fill="#19f3ff" d="M1001.9,706.3L998.7,701.9L999.9,697.5L1003.1,701.6Z"/><path fill="#19a8f7" d="M983.3,716.2L980.1,719.8L980.7,716.6L983.9,713.0Z"/><path fill="#19ff61" d="M1026.5,670.0L1024.9,670.3L1026.1,662.6L1027.7,662.1Z"/><path fill="#1119aa" d="M945.5,764.7L942.3,765.6L942.9,762.3L946.1,761.4Z"/><path fill="#1538cf" d="M964.1,744.7L957.7,746.6L958.3,743.4L964.7,741.5Z"/><path fill="#188bf3" d="M979.5,722.7L976.2,724.5L976.8,721.5L980.1,719.8Z"/><path fill="#19f6ff" d="M994.2,701.9L991.0,704.3L992.2,700.8L995.4,698.2Z"/><path fill="#1773eb" d="M975.7,728.8L972.4,731.2L973.0,727.0L976.2,724.5Z"/><path fill="#19ffb9" d="M1018.8,690.3L1017.2,691.7L1018.4,683.0L1020.0,680.6Z"/><path fill="#1324bf" d="M956.4,753.8L950.0,755.4L950.6,751.9L957.0,750.3Z"/><path fill="#165be0" d="M971.8,735.2L968.6,736.9L969.2,733.0L972.4,731.2Z"/><path fill="#1649d7" d="M968.0,740.1L964.7,741.5L965.3,738.2L968.6,736.9Z"/><path fill="#19ff5f" d="M1028.1,669.9L1026.5,670.0L1027.7,662.1L1029.3,661.6Z"/><path fill="#19ffe7" d="M1012.8,697.6L1009.6,696.7L1010.8,692.7L1014.0,693.0Z"/><path fill="#19ffad" d="M1020.5,688.3L1018.8,690.3L1020.0,680.6L1021.6,678.6Z"/><path fill="#19d9fe" d="M990.4,708.1L987.2,710.5L987.8,706.6L991.0,704.3Z"/><path fill="#19e9ff" d="M1005.1,707.2L1001.9,706.3L1003.1,701.6L1006.3,702.1Z"/><path fill="#19b9fa" d="M986.6,713.7L983.3,716.2L983.9,713.0L987.2,710.5Z"/><path fill="#19ff59" d="M1029.7,667.6L1028.1,669.9L1029.3,661.6L1030.9,658.6Z"/><path fill="#111aac" d="M948.8,763.9L945.5,764.7L946.1,761.4L949.4,760.4Z"/><path fill="#199af5" d="M982.7,719.2L979.5,722.7L980.1,719.8L983.3,716.2Z"/><path fill="#1016a5" d="M944.9,767.0L941.7,767.8L942.3,765.6L945.5,764.7Z"/><path fill="#142eca" d="M963.5,748.3L957.0,750.3L957.7,746.6L964.1,744.7Z"/><path fill="#19f4ff" d="M997.5,705.9L994.2,701.9L995.4,698.2L998.7,701.9Z"/><path fill="#187def" d="M978.9,727.0L975.7,728.8L976.2,724.5L979.5,722.7Z"/><path fill="#19ff9d" d="M1022.1,685.2L1020.5,688.3L1021.6,678.6L1023.3,674.9Z"/><path fill="#1764e4" d="M975.1,732.8L971.8,735.2L972.4,731.2L975.7,728.8Z"/><path fill="#1220b7" d="M955.8,758.9L949.4,760.4L950.0,755.4L956.4,753.8Z"/><path fill="#164fdb" d="M971.2,738.5L968.0,740.1L968.6,736.9L971.8,735.2Z"/><path fill="#19ff55" d="M1031.4,668.9L1029.7,667.6L1030.9,658.6L1032.5,658.9Z"/><path fill="#153fd3" d="M967.4,743.3L964.1,744.7L964.7,741.5L968.0,740.1Z"/><path fill="#19ffe2" d="M1016.0,695.4L1012.8,697.6L1014.0,693.0L1017.2,691.7Z"/><path fill="#19ff88" d="M1023.7,680.5L1022.1,685.2L1023.3,674.9L1024.9,670.3Z"/><path fill="#19e6ff" d="M993.6,706.1L990.4,708.1L991.0,704.3L994.2,701.9Z"/><path fill="#19f6ff" d="M1008.4,701.5L1005.1,707.2L1006.3,702.1L1009.6,696.7Z"/><path fill="#19c8fc" d="M989.8,711.4L986.6,713.7L987.2,710.5L990.4,708.1Z"/><path fill="#19ff5b" d="M1033.0,671.7L1031.4,668.9L1032.5,658.9L1034.2,661.9Z"/><path fill="#19abf8" d="M986.0,716.8L982.7,719.2L983.3,716.2L986.6,713.7Z"/><path fill="#1117a7" d="M948.2,766.3L944.9,767.0L945.5,764.7L948.8,763.9Z"/><path fill="#19e2ff" d="M1000.7,710.5L997.5,705.9L998.7,701.9L1001.9,706.3Z"/><path fill="#188af3" d="M982.1,723.7L978.9,727.0L979.5,722.7L982.7,719.2Z"/><path fill="#19ff7c" d="M1025.3,677.8L1023.7,680.5L1024.9,670.3L1026.5,670.0Z"/><path fill="#1427c4" d="M962.9,751.9L956.4,753.8L957.0,750.3L963.5,748.3Z"/><path fill="#176ee8" d="M978.3,731.0L975.1,732.8L975.7,728.8L978.9,727.0Z"/><path fill="#1658df" d="M974.5,736.2L971.2,738.5L971.8,735.2L975.1,732.8Z"/><path fill="#19ffd8" d="M1017.7,694.4L1016.0,695.4L1017.2,691.7L1018.8,690.3Z"/><path fill="#19ff60" d="M1034.6,671.8L1033.0,671.7L1034.2,661.9L1035.8,662.1Z"/><path fill="#121cb0" d="M955.2,762.3L948.8,763.9L949.4,760.4L955.8,758.9Z"/><path fill="#1545d6" d="M970.6,741.7L967.4,743.3L968.0,740.1L971.2,738.5Z"/><path fill="#1535ce" d="M966.8,747.0L963.5,748.3L964.1,744.7L967.4,743.3Z"/><path fill="#19ff78" d="M1026.9,676.3L1025.3,677.8L1026.5,670.0L1028.1,669.9Z"/><path fill="#19e4ff" d="M996.9,710.2L993.6,706.1L994.2,701.9L997.5,705.9Z"/><path fill="#19fff9" d="M1011.6,700.3L1008.4,701.5L1009.6,696.7L1012.8,697.6Z"/><path fill="#19ffd0" d="M1019.3,693.4L1017.7,694.4L1018.8,690.3L1020.5,688.3Z"/><path fill="#19d5fd" d="M993.0,709.6L989.8,711.4L990.4,708.1L993.6,706.1Z"/><path fill="#19ff60" d="M1036.2,672.0L1034.6,671.8L1035.8,662.1L1037.4,662.2Z"/><path fill="#19bafa" d="M989.2,714.4L986.0,716.8L986.6,713.7L989.8,711.4Z"/><path fill="#19d5fd" d="M1003.9,711.6L1000.7,710.5L1001.9,706.3L1005.1,707.2Z"/><path fill="#199af5" d="M985.4,721.2L982.1,723.7L982.7,719.2L986.0,716.8Z"/><path fill="#19ff71" d="M1028.6,673.8L1026.9,676.3L1028.1,669.9L1029.7,667.6Z"/><path fill="#1879ed" d="M981.5,727.8L978.3,731.0L978.9,727.0L982.1,723.7Z"/><path fill="#1322bc" d="M962.3,756.8L955.8,758.9L956.4,753.8L962.9,751.9Z"/><path fill="#1761e3" d="M977.7,734.3L974.5,736.2L975.1,732.8L978.3,731.0Z"/><path fill="#19ffc4" d="M1020.9,691.5L1019.3,693.4L1020.5,688.3L1022.1,685.2Z"/><path fill="#19ff60" d="M1037.8,672.2L1036.2,672.0L1037.4,662.2L1039.0,662.4Z"/><path fill="#164dda" d="M973.9,739.5L970.6,741.7L971.2,738.5L974.5,736.2Z"/><path fill="#1119ab" d="M954.6,764.7L948.2,766.3L948.8,763.9L955.2,762.3Z"/><path fill="#153bd1" d="M970.0,745.4L966.8,747.0L967.4,743.3L970.6,741.7Z"/><path fill="#19ff6f" d="M1030.2,675.0L1028.6,673.8L1029.7,667.6L1031.4,668.9Z"/><path fill="#142bc8" d="M966.2,750.6L962.9,751.9L963.5,748.3L966.8,747.0Z"/><path fill="#19cefc" d="M1000.1,715.1L996.9,710.2L997.5,705.9L1000.7,710.5Z"/><path fill="#19ffef" d="M1014.9,696.9L1011.6,700.3L1012.8,697.6L1016.0,695.4Z"/><path fill="#19ffb0" d="M1022.5,687.6L1020.9,691.5L1022.1,685.2L1023.7,680.5Z"/><path fill="#19d1fd" d="M996.3,713.8L993.0,709.6L993.6,706.1L996.9,710.2Z"/><path fill="#19c6fb" d="M992.4,712.9L989.2,714.4L989.8,711.4L993.0,709.6Z"/><path fill="#19e3ff" d="M1007.2,705.8L1003.9,711.6L1005.1,707.2L1008.4,701.5Z"/><path fill="#19a8f7" d="M988.6,718.8L985.4,721.2L986.0,716.8L989.2,714.4Z"/><path fill="#19ff75" d="M1031.8,677.6L1030.2,675.0L1031.4,668.9L1033.0,671.7Z"/><path fill="#1887f2" d="M984.8,725.3L981.5,727.8L982.1,723.7L985.4,721.2Z"/><path fill="#176ce8" d="M980.9,731.3L977.7,734.3L978.3,731.0L981.5,727.8Z"/><path fill="#19ff9a" d="M1024.1,683.7L1022.5,687.6L1023.7,680.5L1025.3,677.8Z"/><path fill="#121eb5" d="M961.7,760.3L955.2,762.3L955.8,758.9L962.3,756.8Z"/><path fill="#1656de" d="M977.1,737.7L973.9,739.5L974.5,736.2L977.7,734.3Z"/><path fill="#1542d4" d="M973.3,743.3L970.0,745.4L970.6,741.7L973.9,739.5Z"/><path fill="#19ffe4" d="M1016.5,696.5L1014.9,696.9L1016.0,695.4L1017.7,694.4Z"/><path fill="#19ff7a" d="M1033.4,677.8L1031.8,677.6L1033.0,671.7L1034.6,671.8Z"/><path fill="#1430cb" d="M969.4,749.1L966.2,750.6L966.8,747.0L970.0,745.4Z"/><path fill="#19c0fa" d="M1003.4,716.6L1000.1,715.1L1000.7,710.5L1003.9,711.6Z"/><path fill="#1325c1" d="M965.6,755.5L962.3,756.8L962.9,751.9L966.2,750.6Z"/><path fill="#19ff8c" d="M1025.8,682.0L1024.1,683.7L1025.3,677.8L1026.9,676.3Z"/><path fill="#19bafa" d="M999.5,719.1L996.3,713.8L996.9,710.2L1000.1,715.1Z"/><path fill="#19c1fb" d="M995.7,717.3L992.4,712.9L993.0,709.6L996.3,713.8Z"/><path fill="#19f9ff" d="M1010.4,701.9L1007.2,705.8L1008.4,701.5L1011.6,700.3Z"/><path fill="#19ffe1" d="M1018.1,697.8L1016.5,696.5L1017.7,694.4L1019.3,693.4Z"/><path fill="#19b4f9" d="M991.9,717.7L988.6,718.8L989.2,714.4L992.4,712.9Z"/><path fill="#19ff7a" d="M1035.0,678.0L1033.4,677.8L1034.6,671.8L1036.2,672.0Z"/><path fill="#1894f4" d="M988.0,723.0L984.8,725.3L985.4,721.2L988.6,718.8Z"/><path fill="#1878ed" d="M984.2,728.8L980.9,731.3L981.5,727.8L984.8,725.3Z"/><path fill="#19ff85" d="M1027.4,680.0L1025.8,682.0L1026.9,676.3L1028.6,673.8Z"/><path fill="#1760e3" d="M980.3,734.6L977.1,737.7L977.7,734.3L980.9,731.3Z"/><path fill="#121cb0" d="M961.1,762.7L954.6,764.7L955.2,762.3L961.7,760.3Z"/><path fill="#164bd8" d="M976.5,741.4L973.3,743.3L973.9,739.5L977.1,737.7Z"/><path fill="#19ffde" d="M1019.7,697.6L1018.1,697.8L1019.3,693.4L1020.9,691.5Z"/><path fill="#19ff7a" d="M1036.6,678.2L1035.0,678.0L1036.2,672.0L1037.8,672.2Z"/><path fill="#1537cf" d="M972.7,747.0L969.4,749.1L970.0,745.4L973.3,743.3Z"/><path fill="#19cefc" d="M1006.6,710.5L1003.4,716.6L1003.9,711.6L1007.2,705.8Z"/><path fill="#1427c4" d="M968.8,754.1L965.6,755.5L966.2,750.6L969.4,749.1Z"/><path fill="#19ff82" d="M1029.0,681.1L1027.4,680.0L1028.6,673.8L1030.2,675.0Z"/><path fill="#19abf8" d="M1002.8,720.8L999.5,719.1L1000.1,715.1L1003.4,716.6Z"/><path fill="#1221b9" d="M965.0,759.0L961.7,760.3L962.3,756.8L965.6,755.5Z"/><path fill="#19a9f7" d="M998.9,722.7L995.7,717.3L996.3,713.8L999.5,719.1Z"/><path fill="#19fff6" d="M1013.7,699.4L1010.4,701.9L1011.6,700.3L1014.9,696.9Z"/><path fill="#19ffcf" d="M1021.3,693.8L1019.7,697.6L1020.9,691.5L1022.5,687.6Z"/><path fill="#19adf8" d="M995.1,722.3L991.9,717.7L992.4,712.9L995.7,717.3Z"/><path fill="#199ff6" d="M991.3,722.2L988.0,723.0L988.6,718.8L991.9,717.7Z"/><path fill="#1884f2" d="M987.4,726.4L984.2,728.8L984.8,725.3L988.0,723.0Z"/><path fill="#19ff88" d="M1030.6,683.7L1029.0,681.1L1030.2,675.0L1031.8,677.6Z"/><path fill="#176ce8" d="M983.6,732.2L980.3,734.6L980.9,731.3L984.2,728.8Z"/><path fill="#1654dd" d="M979.7,738.6L976.5,741.4L977.1,737.7L980.3,734.6Z"/><path fill="#19ffba" d="M1023.0,690.2L1021.3,693.8L1022.5,687.6L1024.1,683.7Z"/><path fill="#153fd3" d="M975.9,745.1L972.7,747.0L973.3,743.3L976.5,741.4Z"/><path fill="#19e8ff" d="M1009.8,707.4L1006.6,710.5L1007.2,705.8L1010.4,701.9Z"/><path fill="#142bc8" d="M972.1,752.1L968.8,754.1L969.4,749.1L972.7,747.0Z"/><path fill="#19ffeb" d="M1015.3,699.0L1013.7,699.4L1014.9,696.9L1016.5,696.5Z"/><path fill="#19ff8d" d="M1032.2,683.9L1030.6,683.7L1031.8,677.6L1033.4,677.8Z"/><path fill="#19b8f9" d="M1006.0,714.5L1002.8,720.8L1003.4,716.6L1006.6,710.5Z"/><path fill="#1323bc" d="M968.2,757.6L965.0,759.0L965.6,755.5L968.8,754.1Z"/><path fill="#1999f5" d="M1002.2,724.8L998.9,722.7L999.5,719.1L1002.8,720.8Z"/><path fill="#121eb4" d="M964.4,761.3L961.1,762.7L961.7,760.3L965.0,759.0Z"/><path fill="#19ffab" d="M1024.6,689.2L1023.0,690.2L1024.1,683.7L1025.8,682.0Z"/><path fill="#1895f5" d="M998.3,728.1L995.1,722.3L995.7,717.3L998.9,722.7Z"/><path fill="#1897f5" d="M994.5,727.0L991.3,722.2L991.9,717.7L995.1,722.3Z"/><path fill="#19ffee" d="M1016.9,701.3L1015.3,699.0L1016.5,696.5L1018.1,697.8Z"/><path fill="#188df3" d="M990.7,726.0L987.4,726.4L988.0,723.0L991.3,722.2Z"/><path fill="#19ff8d" d="M1033.8,684.0L1032.2,683.9L1033.4,677.8L1035.0,678.0Z"/><path fill="#1877ed" d="M986.8,729.8L983.6,732.2L984.2,728.8L987.4,726.4Z"/><path fill="#1760e2" d="M983.0,736.1L979.7,738.6L980.3,734.6L983.6,732.2Z"/><path fill="#19ff9f" d="M1026.2,686.3L1024.6,689.2L1025.8,682.0L1027.4,680.0Z"/><path fill="#1648d7" d="M979.1,742.3L975.9,745.1L976.5,741.4L979.7,738.6Z"/><path fill="#19f9ff" d="M1013.1,704.6L1009.8,707.4L1010.4,701.9L1013.7,699.4Z"/><path fill="#1432cc" d="M975.3,750.2L972.1,752.1L972.7,747.0L975.9,745.1Z"/><path fill="#19fff0" d="M1018.5,699.9L1016.9,701.3L1018.1,697.8L1019.7,697.6Z"/><path fill="#19ff8d" d="M1035.5,684.2L1033.8,684.0L1035.0,678.0L1036.6,678.2Z"/><path fill="#19d1fd" d="M1009.2,712.5L1006.0,714.5L1006.6,710.5L1009.8,707.4Z"/><path fill="#1325c0" d="M971.5,755.7L968.2,757.6L968.8,754.1L972.1,752.1Z"/><path fill="#19a6f7" d="M1005.4,718.2L1002.2,724.8L1002.8,720.8L1006.0,714.5Z"/><path fill="#1220b7" d="M967.6,760.0L964.4,761.3L965.0,759.0L968.2,757.6Z"/><path fill="#19ff9a" d="M1027.8,686.9L1026.2,686.3L1027.4,680.0L1029.0,681.1Z"/><path fill="#1884f2" d="M1001.6,730.5L998.3,728.1L998.9,722.7L1002.2,724.8Z"/><path fill="#187ff0" d="M997.7,733.1L994.5,727.0L995.1,722.3L998.3,728.1Z"/><path fill="#19ffe6" d="M1020.1,698.7L1018.5,699.9L1019.7,697.6L1021.3,693.8Z"/><path fill="#1884f2" d="M993.9,730.8L990.7,726.0L991.3,722.2L994.5,727.0Z"/><path fill="#187eef" d="M990.1,729.7L986.8,729.8L987.4,726.4L990.7,726.0Z"/><path fill="#19fffc" d="M1014.7,704.1L1013.1,704.6L1013.7,699.4L1015.3,699.0Z"/><path fill="#176ae7" d="M986.2,733.7L983.0,736.1L983.6,732.2L986.8,729.8Z"/><path fill="#19ffa2" d="M1029.4,689.3L1027.8,686.9L1029.0,681.1L1030.6,683.7Z"/><path fill="#1653dc" d="M982.4,739.9L979.1,742.3L979.7,738.6L983.0,736.1Z"/><path fill="#153bd0" d="M978.5,747.6L975.3,750.2L975.9,745.1L979.1,742.3Z"/><path fill="#19ffd7" d="M1021.8,696.7L1020.1,698.7L1021.3,693.8L1023.0,690.2Z"/><path fill="#19e1ff" d="M1012.5,710.1L1009.2,712.5L1009.8,707.4L1013.1,704.6Z"/><path fill="#1428c5" d="M974.7,753.8L971.5,755.7L972.1,752.1L975.3,750.2Z"/><path fill="#19bdfa" d="M1008.6,716.5L1005.4,718.2L1006.0,714.5L1009.2,712.5Z"/><path fill="#19ffff" d="M1016.3,705.8L1014.7,704.1L1015.3,699.0L1016.9,701.3Z"/><path fill="#1322bb" d="M970.9,758.1L967.6,760.0L968.2,757.6L971.5,755.7Z"/><path fill="#19ffa8" d="M1031.0,689.4L1029.4,689.3L1030.6,683.7L1032.2,683.9Z"/><path fill="#1890f4" d="M1004.8,723.7L1001.6,730.5L1002.2,724.8L1005.4,718.2Z"/><path fill="#176fe9" d="M1001.0,736.0L997.7,733.1L998.3,728.1L1001.6,730.5Z"/><path fill="#19ffca" d="M1023.4,694.6L1021.8,696.7L1023.0,690.2L1024.6,689.2Z"/><path fill="#176fe9" d="M997.1,737.2L993.9,730.8L994.5,727.0L997.7,733.1Z"/><path fill="#1876ec" d="M993.3,734.7L990.1,729.7L990.7,726.0L993.9,730.8Z"/><path fill="#19fdff" d="M1017.9,705.3L1016.3,705.8L1016.9,701.3L1018.5,699.9Z"/><path fill="#1770ea" d="M989.5,733.9L986.2,733.7L986.8,729.8L990.1,729.7Z"/><path fill="#19ffa8" d="M1032.7,689.6L1031.0,689.4L1032.2,683.9L1033.8,684.0Z"/><path fill="#19edff" d="M1014.1,707.0L1012.5,710.1L1013.1,704.6L1014.7,704.1Z"/><path fill="#175de1" d="M985.6,737.5L982.4,739.9L983.0,736.1L986.2,733.7Z"/><path fill="#1544d5" d="M981.8,745.2L978.5,747.6L979.1,742.3L982.4,739.9Z"/><path fill="#19ffbc" d="M1025.0,691.2L1023.4,694.6L1024.6,689.2L1026.2,686.3Z"/><path fill="#142eca" d="M977.9,751.3L974.7,753.8L975.3,750.2L978.5,747.6Z"/><path fill="#19cbfc" d="M1011.9,713.8L1008.6,716.5L1009.2,712.5L1012.5,710.1Z"/><path fill="#19fffa" d="M1019.5,703.1L1017.9,705.3L1018.5,699.9L1020.1,698.7Z"/><path fill="#1324c0" d="M974.1,756.3L970.9,758.1L971.5,755.7L974.7,753.8Z"/><path fill="#19ffa8" d="M1034.3,689.8L1032.7,689.6L1033.8,684.0L1035.5,684.2Z"/><path fill="#19a7f7" d="M1008.1,721.8L1004.8,723.7L1005.4,718.2L1008.6,716.5Z"/><path fill="#19eeff" d="M1015.7,708.5L1014.1,707.0L1014.7,704.1L1016.3,705.8Z"/><path fill="#1879ed" d="M1004.2,728.9L1001.0,736.0L1001.6,730.5L1004.8,723.7Z"/><path fill="#19ffb4" d="M1026.6,692.4L1025.0,691.2L1026.2,686.3L1027.8,686.9Z"/><path fill="#175ee2" d="M1000.4,740.5L997.1,737.2L997.7,733.1L1001.0,736.0Z"/><path fill="#1761e3" d="M996.5,741.4L993.3,734.7L993.9,730.8L997.1,737.2Z"/><path fill="#19ffed" d="M1021.2,699.7L1019.5,703.1L1020.1,698.7L1021.8,696.7Z"/><path fill="#1768e6" d="M992.7,739.1L989.5,733.9L990.1,729.7L993.3,734.7Z"/><path fill="#19edff" d="M1017.3,708.0L1015.7,708.5L1016.3,705.8L1017.9,705.3Z"/><path fill="#1762e4" d="M988.9,737.9L985.6,737.5L986.2,733.7L989.5,733.9Z"/><path fill="#19dbfe" d="M1013.5,711.2L1011.9,713.8L1012.5,710.1L1014.1,707.0Z"/><path fill="#164eda" d="M985.0,742.7L981.8,745.2L982.4,739.9L985.6,737.5Z"/><path fill="#19ffbc" d="M1028.2,694.6L1026.6,692.4L1027.8,686.9L1029.4,689.3Z"/><path fill="#1537ce" d="M981.2,748.9L977.9,751.3L978.5,747.6L981.8,745.2Z"/><path fill="#19ffe0" d="M1022.8,698.1L1021.2,699.7L1021.8,696.7L1023.4,694.6Z"/><path fill="#1427c5" d="M977.4,753.8L974.1,756.3L974.7,753.8L977.9,751.3Z"/><path fill="#19b3f9" d="M1011.3,720.4L1008.1,721.8L1008.6,716.5L1011.9,713.8Z"/><path fill="#19f4ff" d="M1019.0,706.0L1017.3,708.0L1017.9,705.3L1019.5,703.1Z"/><path fill="#188df3" d="M1007.5,727.9L1004.2,728.9L1004.8,723.7L1008.1,721.8Z"/><path fill="#19dfff" d="M1015.1,712.5L1013.5,711.2L1014.1,707.0L1015.7,708.5Z"/><path fill="#19ffc2" d="M1029.9,694.8L1028.2,694.6L1029.4,689.3L1031.0,689.4Z"/><path fill="#1768e6" d="M1003.6,733.1L1000.4,740.5L1001.0,736.0L1004.2,728.9Z"/><path fill="#1650db" d="M999.8,744.9L996.5,741.4L997.1,737.2L1000.4,740.5Z"/><path fill="#19ffd2" d="M1024.4,696.2L1022.8,698.1L1023.4,694.6L1025.0,691.2Z"/><path fill="#1653dc" d="M995.9,746.1L992.7,739.1L993.3,734.7L996.5,741.4Z"/><path fill="#19fffc" d="M1020.6,702.3L1019.0,706.0L1019.5,703.1L1021.2,699.7Z"/><path fill="#1659df" d="M992.1,743.4L988.9,737.9L989.5,733.9L992.7,739.1Z"/><path fill="#19defe" d="M1016.7,711.9L1015.1,712.5L1015.7,708.5L1017.3,708.0Z"/><path fill="#1652dc" d="M988.3,743.7L985.0,742.7L985.6,737.5L988.9,737.9Z"/><path fill="#19ffc2" d="M1031.5,695.0L1029.9,694.8L1031.0,689.4L1032.7,689.6Z"/><path fill="#19c1fb" d="M1012.9,717.9L1011.3,720.4L1011.9,713.8L1013.5,711.2Z"/><path fill="#1540d3" d="M984.4,746.4L981.2,748.9L981.8,745.2L985.0,742.7Z"/><path fill="#19ffcd" d="M1026.0,697.2L1024.4,696.2L1025.0,691.2L1026.6,692.4Z"/><path fill="#142eca" d="M980.6,751.4L977.4,753.8L977.9,751.3L981.2,748.9Z"/><path fill="#19ffee" d="M1022.2,701.3L1020.6,702.3L1021.2,699.7L1022.8,698.1Z"/><path fill="#1897f5" d="M1010.7,726.3L1007.5,727.9L1008.1,721.8L1011.3,720.4Z"/><path fill="#19e5ff" d="M1018.4,710.2L1016.7,711.9L1017.3,708.0L1019.0,706.0Z"/><path fill="#19ffc2" d="M1033.1,695.2L1031.5,695.0L1032.7,689.6L1034.3,689.8Z"/><path fill="#1879ed" d="M1006.9,732.3L1003.6,733.1L1004.2,728.9L1007.5,727.9Z"/><path fill="#19c6fb" d="M1014.5,718.3L1012.9,717.9L1013.5,711.2L1015.1,712.5Z"/><path fill="#1659df" d="M1003.0,737.3L999.8,744.9L1000.4,740.5L1003.6,733.1Z"/><path fill="#19ffd5" d="M1027.6,699.4L1026.0,697.2L1026.6,692.4L1028.2,694.6Z"/><path fill="#1541d4" d="M999.2,750.0L995.9,746.1L996.5,741.4L999.8,744.9Z"/><path fill="#19ffe4" d="M1023.8,698.9L1022.2,701.3L1022.8,698.1L1024.4,696.2Z"/><path fill="#1544d5" d="M995.3,750.6L992.1,743.4L992.7,739.1L995.9,746.1Z"/><path fill="#19f0ff" d="M1020.0,708.8L1018.4,710.2L1019.0,706.0L1020.6,702.3Z"/><path fill="#1649d7" d="M991.5,749.3L988.3,743.7L988.9,737.9L992.1,743.4Z"/><path fill="#19c6fb" d="M1016.2,717.5L1014.5,718.3L1015.1,712.5L1016.7,711.9Z"/><path fill="#1543d5" d="M987.7,747.7L984.4,746.4L985.0,742.7L988.3,743.7Z"/><path fill="#19a2f6" d="M1012.3,723.9L1010.7,726.3L1011.3,720.4L1012.9,717.9Z"/><path fill="#19ffdb" d="M1029.3,699.6L1027.6,699.4L1028.2,694.6L1029.9,694.8Z"/><path fill="#1537cf" d="M983.8,748.9L980.6,751.4L981.2,748.9L984.4,746.4Z"/><path fill="#19ffe0" d="M1025.4,699.9L1023.8,698.9L1024.4,696.2L1026.0,697.2Z"/><path fill="#19fcff" d="M1021.6,706.3L1020.0,708.8L1020.6,702.3L1022.2,701.3Z"/><path fill="#187ff0" d="M1010.1,731.5L1006.9,732.3L1007.5,727.9L1010.7,726.3Z"/><path fill="#19d0fd" d="M1017.8,714.1L1016.2,717.5L1016.7,711.9L1018.4,710.2Z"/><path fill="#176ae7" d="M1006.3,736.7L1003.0,737.3L1003.6,733.1L1006.9,732.3Z"/><path fill="#19a9f7" d="M1013.9,723.6L1012.3,723.9L1012.9,717.9L1014.5,718.3Z"/><path fill="#19ffdb" d="M1030.9,699.7L1029.3,699.6L1029.9,694.8L1031.5,695.0Z"/><path fill="#164ad8" d="M1002.4,742.1L999.2,750.0L999.8,744.9L1003.0,737.3Z"/><path fill="#19ffe8" d="M1027.1,702.1L1025.4,699.9L1026.0,697.2L1027.6,699.4Z"/><path fill="#1433cc" d="M998.6,754.9L995.3,750.6L995.9,746.1L999.2,750.0Z"/><path fill="#19fff7" d="M1023.2,703.5L1021.6,706.3L1022.2,701.3L1023.8,698.9Z"/><path fill="#1534cd" d="M994.8,757.1L991.5,749.3L992.1,743.4L995.3,750.6Z"/><path fill="#19dbfe" d="M1019.4,712.9L1017.8,714.1L1018.4,710.2L1020.0,708.8Z"/><path fill="#1539d0" d="M990.9,753.5L987.7,747.7L988.3,743.7L991.5,749.3Z"/><path fill="#19adf8" d="M1015.6,721.8L1013.9,723.6L1014.5,718.3L1016.2,717.5Z"/><path fill="#19ffdb" d="M1032.5,699.9L1030.9,699.7L1031.5,695.0L1033.1,695.2Z"/><path fill="#153ad0" d="M987.1,750.4L983.8,748.9L984.4,746.4L987.7,747.7Z"/><path fill="#1888f3" d="M1011.7,728.9L1010.1,731.5L1010.7,726.3L1012.3,723.9Z"/><path fill="#19ffed" d="M1028.7,702.2L1027.1,702.1L1027.6,699.4L1029.3,699.6Z"/><path fill="#19fff2" d="M1024.8,704.4L1023.2,703.5L1023.8,698.9L1025.4,699.9Z"/><path fill="#19e4ff" d="M1021.0,711.7L1019.4,712.9L1020.0,708.8L1021.6,706.3Z"/><path fill="#176fe9" d="M1009.5,735.2L1006.3,736.7L1006.9,732.3L1010.1,731.5Z"/><path fill="#19bbfa" d="M1017.2,717.7L1015.6,721.8L1016.2,717.5L1017.8,714.1Z"/><path fill="#165ae0" d="M1005.7,741.4L1002.4,742.1L1003.0,737.3L1006.3,736.7Z"/><path fill="#188ff4" d="M1013.3,729.1L1011.7,728.9L1012.3,723.9L1013.9,723.6Z"/><path fill="#19ffed" d="M1030.3,702.4L1028.7,702.2L1029.3,699.6L1030.9,699.7Z"/><path fill="#153ad0" d="M1001.8,746.8L998.6,754.9L999.2,750.0L1002.4,742.1Z"/><path fill="#19fff9" d="M1026.5,706.5L1024.8,704.4L1025.4,699.9L1027.1,702.1Z"/><path fill="#1326c3" d="M998.0,761.8L994.8,757.1L995.3,750.6L998.6,754.9Z"/><path fill="#19efff" d="M1022.6,709.6L1021.0,711.7L1021.6,706.3L1023.2,703.5Z"/><path fill="#1427c4" d="M994.2,761.5L990.9,753.5L991.5,749.3L994.8,757.1Z"/><path fill="#19c8fc" d="M1018.8,717.0L1017.2,717.7L1017.8,714.1L1019.4,712.9Z"/><path fill="#142fcb" d="M990.3,756.3L987.1,750.4L987.7,747.7L990.9,753.5Z"/><path fill="#1895f4" d="M1015.0,727.2L1013.3,729.1L1013.9,723.6L1015.6,721.8Z"/><path fill="#19ffed" d="M1031.9,702.6L1030.3,702.4L1030.9,699.7L1032.5,699.9Z"/><path fill="#1876ec" d="M1011.1,733.7L1009.5,735.2L1010.1,731.5L1011.7,728.9Z"/><path fill="#19fffe" d="M1028.1,706.7L1026.5,706.5L1027.1,702.1L1028.7,702.2Z"/><path fill="#19f4ff" d="M1024.3,710.6L1022.6,709.6L1023.2,703.5L1024.8,704.4Z"/><path fill="#19d0fd" d="M1020.4,715.4L1018.8,717.0L1019.4,712.9L1021.0,711.7Z"/><path fill="#175fe2" d="M1008.9,739.8L1005.7,741.4L1006.3,736.7L1009.5,735.2Z"/><path fill="#19a3f6" d="M1016.6,724.6L1015.0,727.2L1015.6,721.8L1017.2,717.7Z"/><path fill="#164bd9" d="M1005.1,745.3L1001.8,746.8L1002.4,742.1L1005.7,741.4Z"/><path fill="#187bee" d="M1012.8,733.8L1011.1,733.7L1011.7,728.9L1013.3,729.1Z"/><path fill="#19fffe" d="M1029.7,706.8L1028.1,706.7L1028.7,702.2L1030.3,702.4Z"/><path fill="#1429c7" d="M1001.2,753.4L998.0,761.8L998.6,754.9L1001.8,746.8Z"/><path fill="#19eeff" d="M1025.9,712.4L1024.3,710.6L1024.8,704.4L1026.5,706.5Z"/><path fill="#1220b8" d="M997.4,766.7L994.2,761.5L994.8,757.1L998.0,761.8Z"/><path fill="#19d9fe" d="M1022.0,713.9L1020.4,715.4L1021.0,711.7L1022.6,709.6Z"/><path fill="#1323be" d="M993.6,764.5L990.3,756.3L990.9,753.5L994.2,761.5Z"/><path fill="#19b1f8" d="M1018.2,721.9L1016.6,724.6L1017.2,717.7L1018.8,717.0Z"/><path fill="#187eef" d="M1014.4,732.6L1012.8,733.8L1013.3,729.1L1015.0,727.2Z"/><path fill="#19fffe" d="M1031.3,707.0L1029.7,706.8L1030.3,702.4L1031.9,702.6Z"/><path fill="#1767e5" d="M1010.5,737.9L1008.9,739.8L1009.5,735.2L1011.1,733.7Z"/><path fill="#19e9ff" d="M1027.5,712.6L1025.9,712.4L1026.5,706.5L1028.1,706.7Z"/><path fill="#19dcfe" d="M1023.7,714.8L1022.0,713.9L1022.6,709.6L1024.3,710.6Z"/><path fill="#19bbfa" d="M1019.8,719.9L1018.2,721.9L1018.8,717.0L1020.4,715.4Z"/><path fill="#1650db" d="M1008.3,745.2L1005.1,745.3L1005.7,741.4L1008.9,739.8Z"/><path fill="#1888f3" d="M1016.0,730.2L1014.4,732.6L1015.0,727.2L1016.6,724.6Z"/><path fill="#153dd2" d="M1004.5,748.6L1001.2,753.4L1001.8,746.8L1005.1,745.3Z"/><path fill="#176ae7" d="M1012.2,738.3L1010.5,737.9L1011.1,733.7L1012.8,733.8Z"/><path fill="#19e9ff" d="M1029.1,712.8L1027.5,712.6L1028.1,706.7L1029.7,706.8Z"/><path fill="#1323bd" d="M1000.6,757.9L997.4,766.7L998.0,761.8L1001.2,753.4Z"/><path fill="#19d6fd" d="M1025.3,716.6L1023.7,714.8L1024.3,710.6L1025.9,712.4Z"/><path fill="#121db1" d="M996.8,769.9L993.6,764.5L994.2,761.5L997.4,766.7Z"/><path fill="#19c5fb" d="M1021.4,717.8L1019.8,719.9L1020.4,715.4L1022.0,713.9Z"/><path fill="#1897f5" d="M1017.6,726.5L1016.0,730.2L1016.6,724.6L1018.2,721.9Z"/><path fill="#176de8" d="M1013.8,737.0L1012.2,738.3L1012.8,733.8L1014.4,732.6Z"/><path fill="#19e9ff" d="M1030.7,712.9L1029.1,712.8L1029.7,706.8L1031.3,707.0Z"/><path fill="#1653dd" d="M1009.9,746.0L1008.3,745.2L1008.9,739.8L1010.5,737.9Z"/><path fill="#19d1fd" d="M1026.9,716.8L1025.3,716.6L1025.9,712.4L1027.5,712.6Z"/><path fill="#19c9fc" d="M1023.1,718.6L1021.4,717.8L1022.0,713.9L1023.7,714.8Z"/><path fill="#19a6f7" d="M1019.2,723.8L1017.6,726.5L1018.2,721.9L1019.8,719.9Z"/><path fill="#1544d5" d="M1007.7,747.9L1004.5,748.6L1005.1,745.3L1008.3,745.2Z"/><path fill="#1773eb" d="M1015.4,736.3L1013.8,737.0L1014.4,732.6L1016.0,730.2Z"/><path fill="#1431cb" d="M1003.9,750.6L1000.6,757.9L1001.2,753.4L1004.5,748.6Z"/><path fill="#1656de" d="M1011.6,743.9L1009.9,746.0L1010.5,737.9L1012.2,738.3Z"/><path fill="#19d1fd" d="M1028.5,717.0L1026.9,716.8L1027.5,712.6L1029.1,712.8Z"/><path fill="#121fb6" d="M1000.1,761.0L996.8,769.9L997.4,766.7L1000.6,757.9Z"/><path fill="#19c3fb" d="M1024.7,720.3L1023.1,718.6L1023.7,714.8L1025.3,716.6Z"/><path fill="#19b2f9" d="M1020.9,721.6L1019.2,723.8L1019.8,719.9L1021.4,717.8Z"/><path fill="#187eef" d="M1017.0,733.1L1015.4,736.3L1016.0,730.2L1017.6,726.5Z"/><path fill="#165ae0" d="M1013.2,743.6L1011.6,743.9L1012.2,738.3L1013.8,737.0Z"/><path fill="#19d1fd" d="M1030.1,717.1L1028.5,717.0L1029.1,712.8L1030.7,712.9Z"/><path fill="#1543d5" d="M1009.3,749.9L1007.7,747.9L1008.3,745.2L1009.9,746.0Z"/><path fill="#19bffa" d="M1026.3,720.5L1024.7,720.3L1025.3,716.6L1026.9,716.8Z"/><path fill="#19b7f9" d="M1022.5,722.4L1020.9,721.6L1021.4,717.8L1023.1,718.6Z"/><path fill="#188ef3" d="M1018.6,729.1L1017.0,733.1L1017.6,726.5L1019.2,723.8Z"/><path fill="#153cd1" d="M1007.1,751.2L1003.9,750.6L1004.5,748.6L1007.7,747.9Z"/><path fill="#175ee2" d="M1014.8,741.9L1013.2,743.6L1013.8,737.0L1015.4,736.3Z"/><path fill="#1428c6" d="M1003.3,753.8L1000.1,761.0L1000.6,757.9L1003.9,750.6Z"/><path fill="#1546d6" d="M1011.0,746.5L1009.3,749.9L1009.9,746.0L1011.6,743.9Z"/><path fill="#19bffa" d="M1027.9,720.6L1026.3,720.5L1026.9,716.8L1028.5,717.0Z"/><path fill="#19b1f8" d="M1024.1,724.0L1022.5,722.4L1023.1,718.6L1024.7,720.3Z"/><path fill="#199df6" d="M1020.3,726.9L1018.6,729.1L1019.2,723.8L1020.9,721.6Z"/><path fill="#1766e5" d="M1016.4,739.9L1014.8,741.9L1015.4,736.3L1017.0,733.1Z"/><path fill="#164cd9" d="M1012.6,746.5L1011.0,746.5L1011.6,743.9L1013.2,743.6Z"/><path fill="#19bffa" d="M1029.5,720.8L1027.9,720.6L1028.5,717.0L1030.1,717.1Z"/><path fill="#153ad0" d="M1008.8,752.1L1007.1,751.2L1007.7,747.9L1009.3,749.9Z"/><path fill="#19adf8" d="M1025.7,724.2L1024.1,724.0L1024.7,720.3L1026.3,720.5Z"/><path fill="#19a1f6" d="M1021.9,727.7L1020.3,726.9L1020.9,721.6L1022.5,722.4Z"/><path fill="#1774eb" d="M1018.0,736.2L1016.4,739.9L1017.0,733.1L1018.6,729.1Z"/><path fill="#1434cd" d="M1006.5,753.9L1003.3,753.8L1003.9,750.6L1007.1,751.2Z"/><path fill="#164fda" d="M1014.2,745.6L1012.6,746.5L1013.2,743.6L1014.8,741.9Z"/><path fill="#153dd2" d="M1010.4,749.6L1008.8,752.1L1009.3,749.9L1011.0,746.5Z"/><path fill="#19adf8" d="M1027.3,724.4L1025.7,724.2L1026.3,720.5L1027.9,720.6Z"/><path fill="#199cf6" d="M1023.5,729.2L1021.9,727.7L1022.5,722.4L1024.1,724.0Z"/><path fill="#1882f1" d="M1019.7,732.4L1018.0,736.2L1018.6,729.1L1020.3,726.9Z"/><path fill="#1655dd" d="M1015.8,744.3L1014.2,745.6L1014.8,741.9L1016.4,739.9Z"/><path fill="#1543d5" d="M1012.0,748.8L1010.4,749.6L1011.0,746.5L1012.6,746.5Z"/><path fill="#19adf8" d="M1029.0,724.6L1027.3,724.4L1027.9,720.6L1029.5,720.8Z"/><path fill="#1432cc" d="M1008.2,755.3L1006.5,753.9L1007.1,751.2L1008.8,752.1Z"/><path fill="#1999f5" d="M1025.1,729.4L1023.5,729.2L1024.1,724.0L1025.7,724.2Z"/><path fill="#1888f3" d="M1021.3,733.1L1019.7,732.4L1020.3,726.9L1021.9,727.7Z"/><path fill="#175de1" d="M1017.5,743.0L1015.8,744.3L1016.4,739.9L1018.0,736.2Z"/><path fill="#1545d6" d="M1013.6,749.1L1012.0,748.8L1012.6,746.5L1014.2,745.6Z"/><path fill="#1536ce" d="M1009.8,751.1L1008.2,755.3L1008.8,752.1L1010.4,749.6Z"/><path fill="#1999f5" d="M1026.7,729.5L1025.1,729.4L1025.7,724.2L1027.3,724.4Z"/><path fill="#1884f2" d="M1022.9,734.5L1021.3,733.1L1021.9,727.7L1023.5,729.2Z"/><path fill="#176be7" d="M1019.1,738.2L1017.5,743.0L1018.0,736.2L1019.7,732.4Z"/><path fill="#1547d7" d="M1015.2,750.1L1013.6,749.1L1014.2,745.6L1015.8,744.3Z"/><path fill="#153ed2" d="M1011.4,750.0L1009.8,751.1L1010.4,749.6L1012.0,748.8Z"/><path fill="#1999f5" d="M1028.4,729.7L1026.7,729.5L1027.3,724.4L1029.0,724.6Z"/><path fill="#1881f1" d="M1024.5,734.7L1022.9,734.5L1023.5,729.2L1025.1,729.4Z"/><path fill="#1874eb" d="M1020.7,737.6L1019.1,738.2L1019.7,732.4L1021.3,733.1Z"/><path fill="#1649d8" d="M1016.9,749.3L1015.2,750.1L1015.8,744.3L1017.5,743.0Z"/><path fill="#153ed2" d="M1013.0,752.2L1011.4,750.0L1012.0,748.8L1013.6,749.1Z"/><path fill="#1881f1" d="M1026.1,734.9L1024.5,734.7L1025.1,729.4L1026.7,729.5Z"/><path fill="#1772ea" d="M1022.3,738.9L1020.7,737.6L1021.3,733.1L1022.9,734.5Z"/><path fill="#1656de" d="M1018.5,742.4L1016.9,749.3L1017.5,743.0L1019.1,738.2Z"/><path fill="#153bd1" d="M1014.6,753.1L1013.0,752.2L1013.6,749.1L1015.2,750.1Z"/><path fill="#1881f1" d="M1027.8,735.0L1026.1,734.9L1026.7,729.5L1028.4,729.7Z"/><path fill="#176fe9" d="M1023.9,739.1L1022.3,738.9L1022.9,734.5L1024.5,734.7Z"/><path fill="#1762e3" d="M1020.1,742.5L1018.5,742.4L1019.1,738.2L1020.7,737.6Z"/><path fill="#153bd0" d="M1016.3,753.3L1014.6,753.1L1015.2,750.1L1016.9,749.3Z"/><path fill="#176fe9" d="M1025.6,739.3L1023.9,739.1L1024.5,734.7L1026.1,734.9Z"/><path fill="#1761e3" d="M1021.7,743.7L1020.1,742.5L1020.7,737.6L1022.3,738.9Z"/><path fill="#1545d6" d="M1017.9,749.1L1016.3,753.3L1016.9,749.3L1018.5,742.4Z"/><path fill="#176fe9" d="M1027.2,739.5L1025.6,739.3L1026.1,734.9L1027.8,735.0Z"/><path fill="#175fe2" d="M1023.3,743.9L1021.7,743.7L1022.3,738.9L1023.9,739.1Z"/><path fill="#1651dc" d="M1019.5,746.4L1017.9,749.1L1018.5,742.4L1020.1,742.5Z"/><path fill="#175fe2" d="M1025.0,744.1L1023.3,743.9L1023.9,739.1L1025.6,739.3Z"/><path fill="#1652dc" d="M1021.1,747.5L1019.5,746.4L1020.1,742.5L1021.7,743.7Z"/><path fill="#175fe2" d="M1026.6,744.3L1025.0,744.1L1025.6,739.3L1027.2,739.5Z"/><path fill="#1651db" d="M1022.8,747.7L1021.1,747.5L1021.7,743.7L1023.3,743.9Z"/><path fill="#1651db" d="M1024.4,747.9L1022.8,747.7L1023.3,743.9L1025.0,744.1Z"/><path fill="#1651db" d="M1026.0,748.1L1024.4,747.9L1025.0,744.1L1026.6,744.3Z"/>
</g>
<text x="951" y="393" font-size="9.5" fill="#c9c9c9" text-anchor="middle">TunerPro - Version 5.00</text>
<text x="951" y="412" font-size="14.7" font-weight="bold" fill="#111" text-anchor="middle">Fuel by RPM and Throttle cyl 1</text>
<g font-size="9.5" fill="#23238e" text-anchor="end">
<text x="776" y="509">4.65</text><text x="776" y="560">3.74</text><text x="776" y="611">2.82</text><text x="776" y="662">1.91</text><text x="776" y="712">0.99</text>
</g>
<g font-size="9.5" fill="#23238e">
<text x="1126" y="471">4.65</text><text x="1126" y="521">3.74</text><text x="1126" y="572">2.82</text><text x="1126" y="622">1.91</text><text x="1126" y="673">0.99</text>
</g>
<text transform="translate(719,630) rotate(-90)" font-size="10" font-weight="bold" fill="#23238e" text-anchor="middle">ms</text>
<text transform="translate(1183,592) rotate(-90)" font-size="10" font-weight="bold" fill="#23238e" text-anchor="middle">ms</text>
<g font-size="9" fill="#c23a3a" text-anchor="end">
<text transform="translate(791,765) rotate(7)">15000</text>
<text transform="translate(823,769) rotate(7)">13000</text>
<text transform="translate(851.5,772) rotate(7)">11200</text>
<text transform="translate(877.5,775) rotate(7)">9600</text>
<text transform="translate(902,777.5) rotate(7)">8000</text>
<text transform="translate(928,780.5) rotate(7)">6400</text>
<text transform="translate(954,783.5) rotate(7)">4800</text>
<text transform="translate(976,786) rotate(7)">3400</text>
<text transform="translate(998,789) rotate(7)">2000</text>
<text transform="translate(1017,791.5) rotate(7)">800</text>
</g>
<g font-size="9.5" fill="#222">
<text x="1024.5" y="791.5">0.00</text><text x="1043" y="778.5">17.74</text><text x="1065.5" y="764.5">41.39</text><text x="1083.5" y="752">60.31</text><text x="1102" y="739.5">79.23</text><text x="1120.5" y="726.5">97.58</text>
</g>
<text x="883" y="810" font-size="10" font-weight="bold" fill="#cc2a2a" text-anchor="middle">RPM</text>
<text x="1120" y="785" font-size="10" font-weight="bold" fill="#777" text-anchor="middle">% Throttle</text>
</svg>
</div>
<svg id="wm" style="position:absolute;left:0;top:0;pointer-events:none" width="1908" height="908" viewBox="0 0 1908 908">
<g fill="#4a4a4a" opacity="0.42" font-family="Liberation Sans, sans-serif" font-weight="bold">
<path d="M554.6,251.2C555.0,245.8 557.1,229.4 556.7,218.8C556.3,208.2 555.3,198.8 552.1,187.9C548.9,177.0 544.1,163.8 537.6,153.5C531.1,143.2 523.2,133.8 512.9,126.2C502.6,118.7 490.5,112.1 475.9,108.2C461.2,104.3 441.2,102.5 425.0,103.0C408.8,103.5 391.9,107.0 378.8,111.0C365.7,115.0 354.3,122.3 346.4,127.3C338.5,132.3 334.0,138.7 331.5,141.0" fill="none" stroke="#4a4a4a" stroke-width="10.5"/>
<polygon points="332.5,131.5 317.0,160.9 343.9,156.2 370.2,192.5 391.7,182.4 421.8,240.3 395.6,168.6 372.5,180.9 347.8,147.0 333.2,148.5 341.0,140.5"/>
<polygon points="309.3,251.0 307.2,232.0 306.9,212.5 308.3,194.0 311.6,176.3 342.4,167.0 367.8,204.0 390.2,186.3 421.8,240.3 388.7,197.1 367.1,214.4 338.5,176.3 318.5,182.4 316.6,197.0 316.2,212.5 317.0,232.0 319.3,250.3"/>
<path d="M335,262Q378,246 419,281Q394,311 354,300Q334,289 335,262Z"/>
<path d="M539,262Q496,246 455,281Q480,311 520,300Q540,289 539,262Z"/>
<polygon points="431.0,303.0 410.7,340.0 424.8,360.0 433.5,345.0"/>
<polygon points="443.0,303.0 463.3,340.0 449.2,360.0 440.5,345.0"/>
<polygon points="384.0,378.5 392.8,376.5 401.7,390.3 410.5,383.6 419.3,396.5 428.2,388.8 437.0,400.0 445.8,388.8 454.7,396.5 463.5,383.6 472.3,390.3 481.2,376.5 490.0,378.5 487.0,379.5 478.2,395.1 469.3,392.6 460.5,408.9 451.7,403.9 442.8,417.4 434.0,409.0 431.2,417.4 422.3,403.9 413.5,408.9 404.7,392.6 395.8,395.1 387.0,379.5"/>
<polygon points="290.5,320.1 274.9,342.2 263.6,358.7 251.6,377.1 239.5,396.7 251.6,404.7 302.6,328.2"/>
<path fill-rule="evenodd" d="M308.7,333.4L360.7,371.7L354.8,381.0L336.8,380.4L310.2,421.4L317.6,434.3L311.2,442.4L258.6,407.7ZM313.4,384.2L313.0,387.2L311.9,389.9L310.0,392.3L307.6,394.2L304.9,395.3L301.9,395.7L298.9,395.3L296.1,394.2L293.8,392.3L291.9,389.9L290.8,387.2L290.4,384.2L290.8,381.2L291.9,378.4L293.8,376.1L296.1,374.2L298.9,373.1L301.9,372.7L304.9,373.1L307.6,374.2L310.0,376.1L311.9,378.4L313.0,381.2Z"/>
<polygon points="335.5,392.8 477.5,487.3 464.8,506.5 322.7,411.9"/>
<path fill-rule="evenodd" d="M521.1,508.0L520.6,513.7L519.1,519.3L516.6,524.5L513.3,529.2L509.2,533.3L504.4,536.6L499.2,539.0L493.6,540.5L487.8,541.0L482.0,540.5L476.4,539.0L471.2,536.6L466.4,533.3L462.3,529.2L459.0,524.5L456.5,519.3L455.0,513.7L454.5,508.0L455.0,502.3L456.5,496.7L459.0,491.5L462.3,486.8L466.4,482.7L471.1,479.4L476.4,477.0L482.0,475.5L487.8,475.0L493.6,475.5L499.2,477.0L504.4,479.4L509.2,482.7L513.3,486.8L516.6,491.5L519.1,496.7L520.6,502.3ZM501.3,508.0L500.8,511.5L499.5,514.8L497.3,517.5L494.6,519.7L491.3,521.0L487.8,521.5L484.3,521.0L481.1,519.7L478.3,517.5L476.1,514.8L474.8,511.5L474.3,508.0L474.8,504.5L476.1,501.2L478.3,498.5L481.1,496.3L484.3,495.0L487.8,494.5L491.3,495.0L494.6,496.3L497.3,498.5L499.5,501.2L500.8,504.5Z"/>
<polygon points="579.8,322.3 595.2,344.5 606.3,361.2 618.2,379.7 630.1,399.4 617.9,407.3 567.7,330.3"/>
<path fill-rule="evenodd" d="M561.5,335.5L509.1,373.2L514.9,382.6L532.9,382.2L559.2,423.4L551.7,436.2L558.0,444.4L610.8,410.2ZM579.3,386.3L578.9,389.3L577.8,392.1L575.9,394.4L573.5,396.3L570.8,397.4L567.8,397.8L564.8,397.4L562.0,396.3L559.7,394.4L557.8,392.1L556.7,389.3L556.3,386.3L556.7,383.3L557.8,380.6L559.7,378.2L562.0,376.3L564.8,375.2L567.8,374.8L570.8,375.2L573.5,376.3L575.9,378.2L577.8,380.6L578.9,383.3Z"/>
<polygon points="534.1,394.5 392.9,486.7 405.4,506.0 546.7,413.8"/>
<path fill-rule="evenodd" d="M415.7,507.3L415.2,513.0L413.7,518.6L411.2,523.8L407.9,528.5L403.8,532.6L399.0,535.9L393.8,538.3L388.2,539.8L382.4,540.3L376.6,539.8L371.0,538.3L365.8,535.9L361.0,532.6L356.9,528.5L353.6,523.8L351.1,518.6L349.6,513.0L349.1,507.3L349.6,501.6L351.1,496.0L353.6,490.8L356.9,486.1L361.0,482.0L365.7,478.7L371.0,476.3L376.6,474.8L382.4,474.3L388.2,474.8L393.8,476.3L399.0,478.7L403.8,482.0L407.9,486.1L411.2,490.8L413.7,496.0L415.2,501.6ZM395.9,507.3L395.4,510.8L394.1,514.0L391.9,516.8L389.1,519.0L385.9,520.3L382.4,520.8L378.9,520.3L375.6,519.0L372.9,516.8L370.7,514.0L369.4,510.8L368.9,507.3L369.4,503.8L370.7,500.6L372.9,497.8L375.6,495.6L378.9,494.3L382.4,493.8L385.9,494.3L389.1,495.6L391.9,497.8L394.1,500.6L395.4,503.8Z"/>
<polygon points="267.9,451.3 273.7,468.9 292.2,468.9 277.2,479.8 282.9,497.4 267.9,486.6 252.9,497.4 258.6,479.8 243.6,468.9 262.1,468.9"/>
<polygon points="601.6,451.3 607.4,468.9 625.9,468.9 610.9,479.8 616.6,497.4 601.6,486.6 586.6,497.4 592.3,479.8 577.3,468.9 595.8,468.9"/>
<text font-family="DejaVu Sans Mono, Liberation Mono, monospace" stroke="#4a4a4a" stroke-width="1.5"><tspan x="86.38" y="681.61" font-size="188.49" textLength="71.85" lengthAdjust="spacingAndGlyphs">O</tspan><tspan x="170.85" y="684.25" font-size="169.41" textLength="70.59" lengthAdjust="spacingAndGlyphs">L</tspan><tspan x="257.32" y="684.25" font-size="153.64" textLength="73.97" lengthAdjust="spacingAndGlyphs">D</tspan><tspan x="350.73" y="682.33" font-size="136.90" textLength="76.67" lengthAdjust="spacingAndGlyphs">S</tspan><tspan x="447.75" y="684.25" font-size="143.35" textLength="69.66" lengthAdjust="spacingAndGlyphs">K</tspan><tspan x="539.60" y="682.21" font-size="146.03" textLength="82.81" lengthAdjust="spacingAndGlyphs">U</tspan><tspan x="624.89" y="684.25" font-size="166.67" textLength="78.59" lengthAdjust="spacingAndGlyphs">L</tspan><tspan x="708.87" y="684.25" font-size="189.99" textLength="73.26" lengthAdjust="spacingAndGlyphs">L</tspan></text>
<text transform="scale(1.16 1)" font-size="55" y="765.5" text-anchor="middle" x="180.17 258.45 342.24 415.30 488.71 570.69" stroke="#4a4a4a" stroke-width="1.6">TUNING</text>
</g>
</svg>
</body></html>
